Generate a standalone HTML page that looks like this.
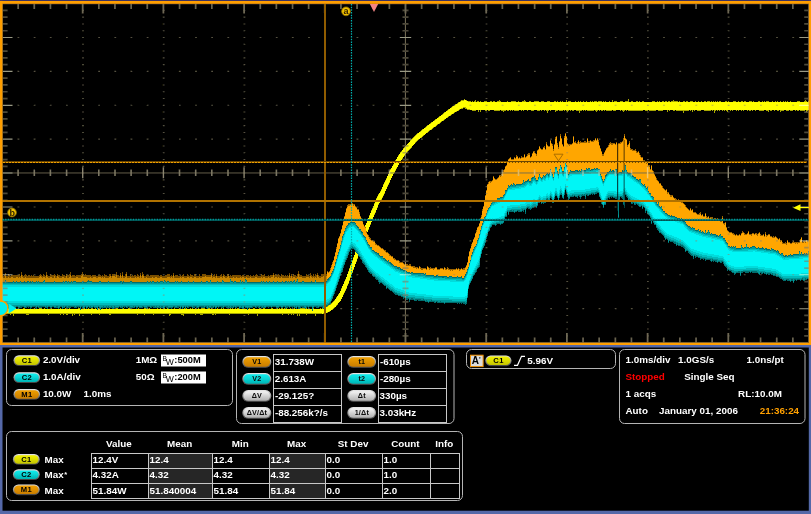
<!DOCTYPE html>
<html><head><meta charset="utf-8"><title>Oscilloscope</title>
<style>html,body{margin:0;padding:0;background:#5468a8;overflow:hidden}svg{display:block}text{font-family:"Liberation Sans",sans-serif;font-weight:bold;font-size:10px;fill:#fff}</style></head><body>
<svg width="811" height="514" viewBox="0 0 811 514">
<defs>
<linearGradient id="gy" x1="0" y1="0" x2="0" y2="1"><stop offset="0" stop-color="#f4f400"/><stop offset="1" stop-color="#c4c400"/></linearGradient>
<linearGradient id="gc" x1="0" y1="0" x2="0" y2="1"><stop offset="0" stop-color="#10f0f0"/><stop offset="1" stop-color="#00b4b4"/></linearGradient>
<linearGradient id="go" x1="0" y1="0" x2="0" y2="1"><stop offset="0" stop-color="#f0a000"/><stop offset="1" stop-color="#c87c00"/></linearGradient>
<linearGradient id="gg" x1="0" y1="0" x2="0" y2="1"><stop offset="0" stop-color="#f4f4f4"/><stop offset="1" stop-color="#b0b0b0"/></linearGradient>
<linearGradient id="gb" x1="0" y1="0" x2="0" y2="1"><stop offset="0" stop-color="#e8e8e8"/><stop offset="0.5" stop-color="#9a9a9a"/><stop offset="1" stop-color="#3c3c3c"/></linearGradient>
<filter id="soft" filterUnits="userSpaceOnUse" x="-10" y="-10" width="831" height="534"><feGaussianBlur stdDeviation="0.35"/></filter>
</defs>
<g filter="url(#soft)">
<rect x="-10" y="-10" width="831" height="534" fill="#5468a8"/>
<rect x="-10" y="-10" width="831" height="355" fill="#000"/>
<g shape-rendering="crispEdges">
<path d="M2,308.8H3V308.5H4V308.6H5V309.0H6V308.9H7V308.6H8V308.9H9V308.6H10V308.1H11V308.9H12V308.6H13V308.4H14V308.4H15V308.4H16V308.6H17V308.7H18V308.4H19V308.6H20V308.7H21V308.5H22V308.8H23V308.4H24V308.1H25V308.7H26V309.0H27V309.0H28V308.9H29V308.8H30V308.8H31V308.7H32V308.5H33V308.8H34V308.3H35V308.8H36V308.8H37V309.0H38V308.8H39V308.3H40V308.1H41V308.2H42V308.6H43V308.5H44V308.2H45V308.9H46V308.7H47V308.9H48V308.5H49V308.9H50V308.8H51V307.5H52V308.6H53V308.9H54V308.5H55V308.8H56V308.9H57V308.9H58V308.2H59V308.8H60V308.4H61V308.9H62V308.0H63V308.7H64V308.7H65V308.0H66V308.5H67V308.7H68V308.7H69V308.3H70V308.6H71V308.8H72V308.9H73V308.6H74V308.7H75V308.5H76V308.6H77V308.8H78V308.2H79V308.3H80V308.1H81V308.6H82V308.5H83V309.0H84V308.3H85V308.6H86V308.2H87V308.5H88V308.0H89V308.9H90V308.7H91V308.2H92V308.4H93V308.7H94V308.7H95V308.3H96V308.8H97V308.7H98V308.4H99V308.6H100V308.7H101V308.5H102V309.0H103V308.5H104V309.0H105V308.5H106V308.0H107V308.7H108V308.6H109V307.6H110V308.6H111V308.8H112V308.6H113V308.8H114V308.8H115V308.8H116V308.2H117V308.4H118V308.6H119V308.8H120V308.6H121V308.9H122V308.5H123V307.9H124V308.7H125V308.6H126V308.8H127V308.6H128V308.3H129V308.3H130V308.8H131V308.8H132V308.7H133V309.0H134V308.7H135V308.9H136V308.8H137V308.7H138V307.9H139V308.9H140V308.5H141V308.5H142V308.8H143V308.8H144V308.4H145V307.7H146V308.0H147V308.4H148V308.8H149V308.4H150V308.9H151V308.9H152V308.6H153V308.7H154V308.6H155V308.8H156V308.9H157V308.3H158V308.9H159V308.6H160V308.4H161V308.7H162V308.5H163V308.3H164V308.1H165V308.8H166V308.6H167V308.4H168V308.7H169V308.7H170V308.7H171V306.6H172V308.5H173V308.6H174V308.4H175V308.7H176V308.9H177V308.9H178V308.9H179V308.1H180V308.6H181V309.0H182V308.8H183V308.5H184V308.4H185V308.6H186V308.0H187V308.8H188V308.9H189V308.6H190V308.2H191V308.7H192V308.3H193V308.9H194V308.9H195V307.7H196V308.9H197V309.0H198V308.3H199V308.6H200V308.7H201V308.3H202V306.3H203V308.4H204V307.5H205V308.9H206V308.5H207V307.9H208V308.2H209V308.4H210V308.8H211V308.4H212V308.5H213V308.7H214V308.7H215V308.7H216V308.9H217V308.3H218V309.0H219V308.8H220V308.8H221V308.3H222V308.5H223V308.0H224V309.0H225V308.6H226V308.8H227V308.6H228V309.0H229V308.9H230V306.9H231V308.6H232V308.3H233V308.6H234V308.9H235V308.2H236V308.9H237V307.9H238V308.2H239V308.6H240V308.6H241V308.7H242V308.2H243V308.6H244V309.0H245V308.8H246V308.9H247V309.0H248V308.5H249V307.7H250V308.7H251V308.5H252V308.7H253V308.3H254V308.2H255V308.6H256V308.9H257V308.7H258V308.9H259V307.9H260V308.4H261V308.9H262V308.5H263V308.3H264V308.4H265V308.8H266V308.8H267V308.8H268V308.9H269V308.6H270V308.9H271V308.4H272V308.3H273V308.6H274V308.7H275V308.7H276V308.8H277V307.2H278V308.8H279V308.1H280V308.7H281V308.3H282V308.0H283V308.7H284V307.9H285V308.7H286V307.8H287V308.6H288V308.7H289V308.6H290V308.3H291V308.6H292V308.8H293V308.6H294V307.6H295V308.6H296V308.7H297V308.7H298V308.8H299V308.8H300V308.4H301V308.4H302V307.8H303V308.4H304V308.4H305V308.6H306V308.3H307V308.5H308V308.1H309V308.9H310V308.9H311V308.8H312V308.2H313V308.3H314V308.9H315V308.9H316V308.7H317V308.8H318V309.0H319V308.8H320V308.4H321V309.0H322V308.3H323V307.9H324V307.6H325V307.2H326V306.8H327V306.1H328V305.3H329V304.6H330V303.9H331V302.9H332V301.9H333V301.0H334V299.9H335V298.8H336V297.2H337V295.6H338V294.2H339V292.5H340V290.8H341V288.3H342V285.8H343V283.6H344V281.3H345V278.9H346V276.6H347V273.7H348V270.9H349V268.1H350V265.4H351V262.7H352V260.0H353V257.3H354V254.6H355V251.8H356V249.1H357V246.4H358V243.7H359V241.0H360V238.3H361V235.6H362V232.9H363V230.1H364V227.5H365V224.8H366V222.5H367V220.1H368V217.6H369V215.1H370V212.7H371V210.3H372V207.9H373V205.5H374V203.1H375V200.7H376V198.3H377V196.2H378V194.0H379V192.5H380V190.9H381V189.1H382V186.7H383V184.4H384V182.2H385V180.1H386V177.9H387V175.7H388V173.5H389V171.4H390V169.4H391V167.5H392V165.8H393V164.0H394V162.2H395V160.4H396V158.6H397V156.8H398V155.1H399V153.6H400V152.4H401V151.1H402V149.7H403V148.3H404V147.0H405V145.7H406V144.6H407V143.6H408V142.6H409V141.5H410V140.4H411V139.3H412V138.2H413V137.1H414V136.0H415V135.0H416V134.0H417V133.2H418V132.5H419V131.7H420V130.9H421V130.1H422V129.3H423V128.5H424V127.7H425V126.9H426V126.1H427V125.3H428V124.6H429V123.8H430V123.1H431V122.3H432V121.5H433V120.8H434V120.0H435V119.3H436V118.5H437V117.8H438V117.0H439V116.3H440V115.5H441V114.7H442V114.0H443V113.2H444V112.4H445V111.6H446V110.8H447V110.1H448V109.3H449V108.5H450V107.8H451V107.1H452V106.4H453V105.7H454V105.0H455V104.3H456V103.6H457V102.9H458V102.3H459V101.6H460V101.0H461V100.4H462V100.1H463V100.0H464V99.2H465V99.5H466V99.7H467V100.9H468V101.0H469V101.3H470V101.3H471V101.5H472V101.4H473V101.5H474V101.1H475V99.7H476V101.7H477V101.3H478V101.4H479V101.8H480V101.4H481V101.8H482V101.8H483V101.7H484V101.3H485V101.3H486V101.4H487V101.5H488V101.6H489V101.6H490V100.5H491V101.1H492V101.7H493V101.4H494V101.1H495V101.7H496V101.5H497V101.3H498V101.1H499V100.1H500V100.8H501V101.6H502V101.7H503V101.7H504V101.6H505V101.5H506V101.6H507V101.3H508V101.8H509V101.6H510V101.6H511V101.3H512V101.4H513V101.4H514V101.4H515V101.4H516V101.6H517V101.7H518V100.6H519V101.7H520V101.7H521V101.7H522V101.3H523V101.2H524V100.0H525V101.2H526V101.8H527V101.5H528V101.8H529V101.4H530V101.4H531V101.6H532V101.6H533V101.5H534V101.3H535V101.4H536V101.2H537V101.2H538V101.3H539V101.5H540V101.6H541V101.3H542V101.4H543V101.3H544V101.6H545V101.6H546V101.7H547V100.5H548V101.3H549V101.1H550V101.6H551V101.8H552V101.8H553V101.8H554V101.0H555V101.2H556V101.7H557V101.3H558V101.6H559V101.7H560V101.0H561V101.6H562V100.5H563V101.8H564V101.8H565V101.6H566V99.5H567V101.5H568V100.7H569V100.9H570V101.2H571V101.5H572V101.6H573V101.6H574V101.8H575V101.0H576V101.7H577V101.5H578V101.1H579V101.8H580V101.4H581V101.7H582V101.7H583V101.0H584V101.8H585V101.5H586V100.9H587V101.5H588V101.5H589V101.8H590V101.3H591V101.6H592V101.3H593V101.7H594V101.3H595V101.4H596V101.2H597V101.7H598V101.4H599V101.4H600V100.9H601V101.1H602V101.5H603V101.3H604V101.5H605V101.3H606V101.6H607V101.8H608V101.6H609V101.4H610V101.7H611V101.6H612V100.4H613V101.8H614V101.4H615V101.3H616V101.0H617V101.5H618V101.7H619V101.7H620V101.2H621V101.4H622V101.1H623V101.5H624V101.7H625V101.2H626V101.4H627V101.3H628V98.7H629V101.6H630V101.7H631V101.2H632V101.4H633V101.6H634V101.8H635V101.7H636V100.8H637V101.3H638V101.7H639V100.6H640V101.7H641V101.7H642V101.0H643V100.8H644V101.6H645V101.8H646V101.5H647V101.5H648V101.7H649V101.6H650V101.8H651V101.6H652V101.2H653V101.3H654V101.3H655V101.7H656V101.8H657V101.0H658V101.7H659V101.2H660V101.7H661V101.6H662V100.9H663V101.4H664V101.5H665V101.3H666V101.4H667V101.6H668V101.3H669V100.9H670V101.6H671V101.1H672V101.4H673V100.4H674V101.3H675V101.1H676V101.2H677V101.0H678V101.5H679V101.3H680V101.5H681V101.6H682V101.5H683V101.2H684V101.3H685V101.7H686V101.4H687V101.4H688V101.5H689V101.5H690V101.1H691V101.4H692V101.2H693V101.6H694V101.6H695V100.6H696V101.7H697V101.7H698V100.8H699V101.8H700V101.8H701V100.9H702V101.8H703V101.7H704V101.3H705V101.2H706V101.7H707V101.4H708V101.0H709V101.2H710V101.6H711V101.2H712V101.5H713V101.4H714V101.5H715V101.1H716V101.7H717V100.7H718V101.7H719V101.0H720V101.1H721V101.5H722V101.6H723V101.5H724V101.7H725V101.4H726V101.3H727V101.8H728V100.8H729V101.6H730V101.7H731V101.5H732V101.6H733V101.1H734V101.4H735V101.0H736V101.7H737V101.7H738V100.6H739V101.6H740V101.5H741V101.1H742V100.9H743V101.7H744V101.3H745V101.2H746V101.5H747V101.7H748V101.7H749V101.4H750V100.8H751V101.2H752V101.7H753V101.2H754V101.5H755V101.6H756V101.7H757V101.7H758V101.1H759V101.3H760V101.6H761V101.7H762V101.4H763V101.6H764V101.4H765V101.7H766V101.3H767V101.1H768V101.4H769V101.6H770V101.5H771V101.8H772V101.1H773V101.6H774V101.6H775V100.5H776V101.6H777V101.3H778V101.6H779V101.7H780V101.3H781V101.6H782V101.5H783V101.3H784V101.7H785V101.4H786V101.7H787V101.4H788V101.6H789V101.8H790V101.2H791V101.5H792V101.7H793V101.8H794V101.5H795V101.5H796V101.7H797V101.2H798V101.3H799V101.2H800V101.6H801V101.5H802V101.5H803V101.8H804V101.1H805V100.1H806V101.0H807V101.8H808V101.4H809V101.8H810V110.4V110.4H809V110.3H808V110.5H807V112.4H806V110.3H805V110.7H804V111.2H803V110.7H802V110.8H801V110.5H800V110.2H799V111.0H798V110.9H797V110.3H796V110.8H795V110.2H794V110.3H793V111.3H792V110.8H791V110.6H790V110.2H789V110.8H788V110.9H787V110.8H786V110.4H785V110.4H784V111.4H783V110.6H782V110.5H781V111.9H780V110.4H779V110.5H778V110.5H777V110.4H776V110.2H775V110.7H774V110.3H773V110.4H772V110.8H771V110.9H770V110.3H769V112.4H768V111.2H767V110.6H766V110.3H765V110.3H764V110.6H763V111.1H762V110.8H761V110.5H760V110.8H759V110.3H758V110.3H757V110.2H756V110.8H755V110.3H754V110.3H753V110.7H752V110.3H751V110.5H750V111.0H749V110.4H748V110.7H747V110.4H746V110.4H745V110.3H744V111.0H743V110.3H742V110.6H741V110.3H740V110.3H739V110.8H738V110.3H737V110.5H736V110.2H735V110.4H734V110.4H733V110.6H732V110.3H731V110.8H730V110.4H729V110.2H728V111.6H727V110.6H726V110.2H725V111.0H724V110.4H723V110.6H722V110.4H721V110.3H720V110.5H719V110.4H718V110.7H717V110.4H716V110.7H715V112.6H714V110.2H713V110.7H712V110.4H711V110.8H710V110.8H709V110.5H708V111.2H707V110.8H706V111.4H705V110.6H704V110.4H703V110.4H702V110.4H701V110.7H700V110.9H699V111.4H698V111.0H697V110.2H696V110.2H695V110.6H694V110.3H693V112.2H692V110.4H691V110.9H690V110.4H689V110.9H688V110.5H687V110.8H686V110.8H685V110.7H684V113.2H683V111.0H682V110.6H681V110.5H680V110.5H679V110.6H678V110.8H677V111.0H676V110.3H675V110.6H674V110.8H673V110.3H672V110.4H671V110.4H670V110.6H669V110.4H668V111.5H667V110.2H666V110.4H665V110.4H664V110.4H663V110.9H662V111.0H661V110.6H660V110.9H659V110.7H658V110.4H657V110.3H656V110.8H655V110.9H654V110.7H653V111.0H652V110.6H651V110.5H650V110.8H649V110.3H648V110.7H647V110.8H646V110.6H645V110.4H644V110.4H643V110.8H642V110.5H641V111.4H640V110.6H639V110.7H638V110.6H637V110.5H636V110.5H635V111.4H634V110.8H633V110.9H632V110.7H631V110.9H630V110.9H629V111.1H628V110.4H627V110.7H626V110.3H625V110.7H624V111.8H623V110.6H622V110.2H621V110.6H620V110.4H619V110.2H618V110.4H617V110.4H616V111.1H615V110.6H614V110.6H613V110.3H612V110.9H611V110.6H610V110.6H609V111.1H608V111.0H607V110.7H606V110.2H605V111.0H604V110.4H603V111.2H602V110.6H601V110.2H600V110.6H599V110.2H598V110.5H597V111.5H596V110.6H595V110.4H594V110.7H593V110.9H592V110.5H591V111.4H590V110.7H589V110.7H588V110.8H587V110.4H586V110.5H585V110.2H584V110.9H583V110.4H582V110.6H581V110.6H580V113.3H579V110.5H578V110.8H577V110.9H576V110.2H575V110.3H574V110.5H573V110.7H572V110.3H571V111.2H570V110.3H569V110.6H568V112.3H567V110.9H566V110.4H565V111.0H564V110.3H563V110.9H562V110.7H561V111.1H560V110.5H559V110.4H558V110.6H557V110.8H556V111.5H555V110.4H554V110.4H553V110.2H552V110.4H551V111.1H550V110.3H549V110.8H548V112.8H547V110.8H546V110.2H545V110.6H544V110.4H543V110.2H542V110.5H541V110.2H540V110.5H539V110.6H538V110.6H537V110.3H536V110.3H535V110.4H534V111.3H533V110.5H532V110.9H531V110.4H530V110.3H529V110.4H528V110.7H527V110.3H526V110.4H525V110.4H524V110.5H523V110.4H522V110.6H521V110.3H520V110.3H519V110.5H518V110.8H517V110.8H516V110.7H515V111.4H514V110.4H513V110.6H512V110.4H511V110.7H510V110.3H509V110.5H508V110.5H507V110.2H506V110.6H505V111.4H504V112.0H503V111.0H502V110.7H501V110.3H500V110.6H499V110.5H498V110.8H497V110.5H496V110.9H495V110.5H494V110.3H493V110.4H492V110.2H491V110.3H490V110.6H489V110.7H488V110.3H487V111.4H486V110.5H485V110.4H484V110.4H483V110.4H482V110.4H481V111.9H480V110.2H479V112.1H478V110.4H477V110.4H476V110.6H475V110.6H474V110.9H473V110.6H472V110.3H471V110.0H470V110.1H469V109.7H468V109.7H467V108.7H466V108.6H465V108.0H464V107.9H463V108.5H462V108.8H461V109.4H460V110.0H459V110.5H458V111.1H457V111.7H456V112.4H455V113.0H454V113.7H453V114.3H452V115.0H451V115.6H450V116.3H449V117.0H448V117.7H447V118.4H446V119.1H445V119.9H444V120.6H443V121.3H442V122.0H441V122.7H440V123.5H439V124.2H438V125.0H437V125.7H436V126.5H435V127.2H434V128.0H433V128.8H432V129.5H431V130.3H430V131.0H429V131.8H428V132.6H427V133.4H426V134.3H425V135.1H424V135.9H423V136.7H422V137.5H421V138.3H420V139.1H419V139.9H418V140.8H417V141.8H416V143.0H415V144.2H414V145.3H413V146.4H412V147.5H411V148.6H410V149.7H409V150.7H408V151.9H407V153.1H406V154.4H405V155.9H404V157.4H403V158.8H402V160.2H401V161.7H400V163.3H399V165.1H398V167.1H397V169.0H396V170.8H395V172.6H394V174.4H393V176.3H392V178.3H391V180.3H390V182.6H389V184.9H388V187.0H387V189.2H386V191.4H385V193.5H384V195.7H383V197.7H382V199.7H381V201.3H380V203.1H379V205.0H378V207.6H377V210.2H376V212.6H375V215.0H374V217.4H373V219.8H372V222.2H371V224.7H370V227.2H369V229.6H368V232.1H367V234.6H366V237.2H365V239.9H364V242.7H363V245.4H362V248.1H361V250.8H360V253.6H359V256.3H358V259.0H357V261.7H356V264.4H355V267.1H354V269.9H353V272.6H352V275.3H351V278.0H350V280.7H349V283.5H348V286.0H347V288.6H346V290.7H345V292.8H344V295.0H343V297.3H342V299.2H341V301.2H340V302.3H339V303.4H338V304.8H337V306.0H336V307.2H335V307.9H334V308.6H333V309.5H332V310.3H331V311.1H330V311.7H329V312.2H328V312.7H327V313.2H326V313.4H325V313.6H324V313.9H323V314.1H322V313.7H321V314.0H320V314.1H319V313.8H318V314.1H317V313.7H316V315.9H315V314.2H314V313.7H313V313.6H312V314.0H311V314.2H310V313.8H309V314.3H308V314.3H307V314.6H306V313.7H305V313.8H304V313.7H303V314.0H302V314.0H301V313.8H300V315.6H299V314.1H298V315.6H297V313.7H296V313.6H295V314.0H294V314.5H293V313.8H292V315.4H291V314.3H290V313.7H289V314.5H288V313.7H287V314.2H286V314.1H285V314.1H284V314.0H283V315.3H282V313.7H281V314.2H280V314.2H279V313.6H278V313.6H277V313.8H276V314.0H275V314.4H274V314.3H273V314.2H272V313.6H271V314.1H270V313.7H269V313.9H268V314.1H267V314.2H266V313.7H265V314.1H264V314.1H263V313.6H262V314.2H261V314.1H260V313.8H259V314.3H258V316.4H257V313.8H256V314.0H255V314.3H254V313.9H253V313.8H252V314.2H251V314.3H250V313.7H249V315.0H248V314.0H247V314.3H246V314.3H245V313.8H244V313.9H243V313.7H242V314.0H241V314.1H240V313.8H239V313.8H238V313.9H237V313.9H236V314.2H235V314.1H234V313.8H233V314.1H232V314.1H231V313.7H230V314.6H229V313.8H228V314.2H227V313.7H226V313.9H225V314.2H224V313.8H223V314.0H222V314.1H221V313.9H220V313.8H219V313.8H218V313.6H217V314.3H216V315.4H215V313.8H214V314.9H213V314.6H212V313.8H211V314.0H210V314.1H209V313.9H208V314.2H207V313.7H206V313.7H205V313.7H204V313.8H203V315.3H202V314.6H201V315.2H200V313.9H199V313.7H198V314.1H197V313.9H196V314.5H195V314.4H194V313.6H193V313.9H192V313.7H191V313.7H190V313.7H189V313.6H188V314.2H187V313.7H186V314.2H185V313.9H184V315.7H183V314.8H182V314.6H181V314.0H180V313.7H179V313.8H178V313.7H177V314.0H176V313.8H175V314.4H174V313.6H173V313.7H172V313.8H171V314.6H170V316.3H169V314.4H168V314.1H167V314.1H166V313.8H165V313.8H164V313.7H163V314.1H162V314.0H161V313.9H160V313.7H159V314.3H158V313.8H157V313.7H156V314.0H155V313.7H154V315.2H153V313.9H152V313.6H151V313.8H150V313.9H149V314.0H148V313.7H147V313.9H146V313.8H145V314.6H144V313.8H143V313.9H142V314.1H141V314.1H140V313.7H139V314.2H138V315.2H137V313.7H136V314.4H135V313.7H134V314.3H133V313.9H132V313.7H131V313.8H130V313.6H129V313.7H128V313.7H127V314.4H126V314.0H125V313.6H124V314.0H123V313.9H122V313.7H121V313.7H120V313.7H119V313.8H118V313.8H117V313.6H116V313.9H115V313.8H114V314.3H113V313.7H112V313.7H111V314.8H110V314.5H109V313.9H108V313.8H107V313.7H106V314.1H105V314.1H104V314.1H103V313.9H102V314.1H101V313.6H100V314.5H99V314.0H98V313.8H97V313.7H96V314.3H95V313.9H94V314.1H93V313.8H92V314.5H91V313.9H90V314.1H89V314.0H88V313.6H87V314.2H86V313.9H85V313.8H84V314.0H83V314.1H82V313.9H81V313.7H80V315.7H79V314.0H78V313.7H77V314.2H76V314.1H75V314.8H74V313.7H73V316.1H72V314.2H71V314.0H70V313.8H69V313.7H68V314.5H67V314.5H66V313.8H65V313.8H64V314.6H63V313.8H62V313.7H61V314.9H60V314.0H59V313.7H58V314.0H57V313.7H56V313.9H55V314.2H54V314.3H53V314.0H52V313.6H51V313.9H50V314.3H49V315.1H48V314.1H47V313.9H46V314.1H45V314.3H44V313.9H43V313.9H42V314.1H41V313.7H40V314.0H39V314.1H38V313.7H37V314.0H36V314.2H35V314.0H34V313.7H33V314.1H32V313.8H31V314.4H30V313.6H29V314.5H28V314.6H27V314.7H26V313.8H25V313.8H24V313.7H23V314.3H22V313.8H21V313.7H20V313.6H19V314.0H18V313.7H17V314.4H16V313.8H15V314.0H14V315.6H13V313.7H12V313.9H11V314.5H10V314.3H9V313.6H8V314.1H7V314.1H6V313.9H5V313.8H4V313.8H3V313.8H2Z" fill="#a8a800"/>
<path d="M2,309.2H3V309.2H4V309.2H5V309.2H6V309.2H7V309.2H8V309.2H9V309.2H10V309.2H11V309.2H12V309.2H13V309.2H14V309.2H15V309.2H16V309.2H17V309.2H18V309.2H19V309.2H20V309.2H21V309.2H22V309.2H23V309.2H24V309.2H25V309.2H26V309.2H27V309.2H28V309.2H29V309.2H30V309.2H31V309.2H32V309.2H33V309.2H34V309.2H35V309.2H36V309.2H37V309.2H38V309.2H39V309.2H40V309.2H41V309.2H42V309.2H43V309.2H44V309.2H45V309.2H46V309.2H47V309.2H48V309.2H49V309.2H50V309.2H51V309.2H52V309.2H53V309.2H54V309.2H55V309.2H56V309.2H57V309.2H58V309.2H59V309.2H60V309.2H61V309.2H62V309.2H63V309.2H64V309.2H65V309.2H66V309.2H67V309.2H68V309.2H69V309.2H70V309.2H71V309.2H72V309.2H73V309.2H74V309.2H75V309.2H76V309.2H77V309.2H78V309.2H79V309.2H80V309.2H81V309.2H82V309.2H83V309.2H84V309.2H85V309.2H86V309.2H87V309.2H88V309.2H89V309.2H90V309.2H91V309.2H92V309.2H93V309.2H94V309.2H95V309.2H96V309.2H97V309.2H98V309.2H99V309.2H100V309.2H101V309.2H102V309.2H103V309.2H104V309.2H105V309.2H106V309.2H107V309.2H108V309.2H109V309.2H110V309.2H111V309.2H112V309.2H113V309.2H114V309.2H115V309.2H116V309.2H117V309.2H118V309.2H119V309.2H120V309.2H121V309.2H122V309.2H123V309.2H124V309.2H125V309.2H126V309.2H127V309.2H128V309.2H129V309.2H130V309.2H131V309.2H132V309.2H133V309.2H134V309.2H135V309.2H136V309.2H137V309.2H138V309.2H139V309.2H140V309.2H141V309.2H142V309.2H143V309.2H144V309.2H145V309.2H146V309.2H147V309.2H148V309.2H149V309.2H150V309.2H151V309.2H152V309.2H153V309.2H154V309.2H155V309.2H156V309.2H157V309.2H158V309.2H159V309.2H160V309.2H161V309.2H162V309.2H163V309.2H164V309.2H165V309.2H166V309.2H167V309.2H168V309.2H169V309.2H170V309.2H171V309.2H172V309.2H173V309.2H174V309.2H175V309.2H176V309.2H177V309.2H178V309.2H179V309.2H180V309.2H181V309.2H182V309.2H183V309.2H184V309.2H185V309.2H186V309.2H187V309.2H188V309.2H189V309.2H190V309.2H191V309.2H192V309.2H193V309.2H194V309.2H195V309.2H196V309.2H197V309.2H198V309.2H199V309.2H200V309.2H201V309.2H202V309.2H203V309.2H204V309.2H205V309.2H206V309.2H207V309.2H208V309.2H209V309.2H210V309.2H211V309.2H212V309.2H213V309.2H214V309.2H215V309.2H216V309.2H217V309.2H218V309.2H219V309.2H220V309.2H221V309.2H222V309.2H223V309.2H224V309.2H225V309.2H226V309.2H227V309.2H228V309.2H229V309.2H230V309.2H231V309.2H232V309.2H233V309.2H234V309.2H235V309.2H236V309.2H237V309.2H238V309.2H239V309.2H240V309.2H241V309.2H242V309.2H243V309.2H244V309.2H245V309.2H246V309.2H247V309.2H248V309.2H249V309.2H250V309.2H251V309.2H252V309.2H253V309.2H254V309.2H255V309.2H256V309.2H257V309.2H258V309.2H259V309.2H260V309.2H261V309.2H262V309.2H263V309.2H264V309.2H265V309.2H266V309.2H267V309.2H268V309.2H269V309.2H270V309.2H271V309.2H272V309.2H273V309.2H274V309.2H275V309.2H276V309.2H277V309.2H278V309.2H279V309.2H280V309.2H281V309.2H282V309.2H283V309.2H284V309.2H285V309.2H286V309.2H287V309.2H288V309.2H289V309.2H290V309.2H291V309.2H292V309.2H293V309.2H294V309.2H295V309.2H296V309.2H297V309.2H298V309.2H299V309.2H300V309.2H301V309.2H302V309.2H303V309.2H304V309.2H305V309.2H306V309.2H307V309.2H308V309.2H309V309.2H310V309.2H311V309.2H312V309.2H313V309.2H314V309.2H315V309.2H316V309.2H317V309.2H318V309.2H319V309.2H320V309.2H321V309.2H322V308.9H323V308.5H324V308.2H325V307.8H326V307.4H327V306.7H328V305.9H329V305.2H330V304.5H331V303.5H332V302.5H333V301.6H334V300.5H335V299.4H336V297.8H337V296.2H338V294.8H339V293.1H340V291.4H341V288.9H342V286.4H343V284.2H344V281.9H345V279.5H346V277.2H347V274.3H348V271.5H349V268.7H350V266.0H351V263.3H352V260.6H353V257.9H354V255.2H355V252.4H356V249.7H357V247.0H358V244.3H359V241.6H360V238.9H361V236.2H362V233.5H363V230.7H364V228.1H365V225.4H366V223.1H367V220.7H368V218.2H369V215.7H370V213.3H371V210.9H372V208.5H373V206.1H374V203.7H375V201.3H376V198.9H377V196.8H378V194.6H379V193.1H380V191.5H381V189.7H382V187.3H383V185.0H384V182.8H385V180.7H386V178.5H387V176.3H388V174.1H389V172.0H390V170.0H391V168.1H392V166.4H393V164.6H394V162.8H395V161.0H396V159.2H397V157.4H398V155.7H399V154.2H400V153.0H401V151.7H402V150.3H403V148.9H404V147.6H405V146.3H406V145.2H407V144.2H408V143.2H409V142.1H410V141.0H411V139.9H412V138.8H413V137.7H414V136.6H415V135.6H416V134.6H417V133.8H418V133.1H419V132.3H420V131.5H421V130.7H422V129.9H423V129.1H424V128.3H425V127.5H426V126.7H427V125.9H428V125.2H429V124.4H430V123.7H431V122.9H432V122.1H433V121.4H434V120.6H435V119.9H436V119.1H437V118.4H438V117.6H439V116.9H440V116.1H441V115.3H442V114.6H443V113.8H444V113.0H445V112.2H446V111.4H447V110.7H448V109.9H449V109.1H450V108.4H451V107.7H452V107.0H453V106.3H454V105.6H455V104.9H456V104.2H457V103.5H458V102.9H459V102.2H460V101.6H461V101.0H462V100.7H463V100.5H464V100.2H465V100.3H466V100.7H467V101.3H468V101.8H469V101.8H470V101.9H471V101.9H472V102.0H473V102.1H474V102.1H475V102.1H476V102.1H477V102.1H478V102.1H479V102.1H480V102.1H481V102.1H482V102.1H483V102.1H484V102.1H485V102.1H486V102.1H487V102.1H488V102.1H489V102.1H490V102.1H491V102.1H492V102.1H493V102.1H494V102.1H495V102.1H496V102.1H497V102.1H498V102.1H499V102.1H500V102.1H501V102.1H502V102.1H503V102.1H504V102.1H505V102.1H506V102.1H507V102.1H508V102.1H509V102.1H510V102.1H511V102.1H512V102.1H513V102.1H514V102.1H515V102.1H516V102.1H517V102.1H518V102.1H519V102.1H520V102.1H521V102.1H522V102.1H523V102.1H524V102.1H525V102.1H526V102.1H527V102.1H528V102.1H529V102.1H530V102.1H531V102.1H532V102.1H533V102.1H534V102.1H535V102.1H536V102.1H537V102.1H538V102.1H539V102.1H540V102.1H541V102.1H542V102.1H543V102.1H544V102.1H545V102.1H546V102.1H547V102.1H548V102.1H549V102.1H550V102.1H551V102.1H552V102.1H553V102.1H554V102.1H555V102.1H556V102.1H557V102.1H558V102.1H559V102.1H560V102.1H561V102.1H562V102.1H563V102.1H564V102.1H565V102.1H566V102.1H567V102.1H568V102.1H569V102.1H570V102.1H571V102.1H572V102.1H573V102.1H574V102.1H575V102.1H576V102.1H577V102.1H578V102.1H579V102.1H580V102.1H581V102.1H582V102.1H583V102.1H584V102.1H585V102.1H586V102.1H587V102.1H588V102.1H589V102.1H590V102.1H591V102.1H592V102.1H593V102.1H594V102.1H595V102.1H596V102.1H597V102.1H598V102.1H599V102.1H600V102.1H601V102.1H602V102.1H603V102.1H604V102.1H605V102.1H606V102.1H607V102.1H608V102.1H609V102.1H610V102.1H611V102.1H612V102.1H613V102.1H614V102.1H615V102.1H616V102.1H617V102.1H618V102.1H619V102.1H620V102.1H621V102.1H622V102.1H623V102.1H624V102.1H625V102.1H626V102.1H627V102.1H628V102.1H629V102.1H630V102.1H631V102.1H632V102.1H633V102.1H634V102.1H635V102.1H636V102.1H637V102.1H638V102.1H639V102.1H640V102.1H641V102.1H642V102.1H643V102.1H644V102.1H645V102.1H646V102.1H647V102.1H648V102.1H649V102.1H650V102.1H651V102.1H652V102.1H653V102.1H654V102.1H655V102.1H656V102.1H657V102.1H658V102.1H659V102.1H660V102.1H661V102.1H662V102.1H663V102.1H664V102.1H665V102.1H666V102.1H667V102.1H668V102.1H669V102.1H670V102.1H671V102.1H672V102.1H673V102.1H674V102.1H675V102.1H676V102.1H677V102.1H678V102.1H679V102.1H680V102.1H681V102.1H682V102.1H683V102.1H684V102.1H685V102.1H686V102.1H687V102.1H688V102.1H689V102.1H690V102.1H691V102.1H692V102.1H693V102.1H694V102.1H695V102.1H696V102.1H697V102.1H698V102.1H699V102.1H700V102.1H701V102.1H702V102.1H703V102.1H704V102.1H705V102.1H706V102.1H707V102.1H708V102.1H709V102.1H710V102.1H711V102.1H712V102.1H713V102.1H714V102.1H715V102.1H716V102.1H717V102.1H718V102.1H719V102.1H720V102.1H721V102.1H722V102.1H723V102.1H724V102.1H725V102.1H726V102.1H727V102.1H728V102.1H729V102.1H730V102.1H731V102.1H732V102.1H733V102.1H734V102.1H735V102.1H736V102.1H737V102.1H738V102.1H739V102.1H740V102.1H741V102.1H742V102.1H743V102.1H744V102.1H745V102.1H746V102.1H747V102.1H748V102.1H749V102.1H750V102.1H751V102.1H752V102.1H753V102.1H754V102.1H755V102.1H756V102.1H757V102.1H758V102.1H759V102.1H760V102.1H761V102.1H762V102.1H763V102.1H764V102.1H765V102.1H766V102.1H767V102.1H768V102.1H769V102.1H770V102.1H771V102.1H772V102.1H773V102.1H774V102.1H775V102.1H776V102.1H777V102.1H778V102.1H779V102.1H780V102.1H781V102.1H782V102.1H783V102.1H784V102.1H785V102.1H786V102.1H787V102.1H788V102.1H789V102.1H790V102.1H791V102.1H792V102.1H793V102.1H794V102.1H795V102.1H796V102.1H797V102.1H798V102.1H799V102.1H800V102.1H801V102.1H802V102.1H803V102.1H804V102.1H805V102.1H806V102.1H807V102.1H808V102.1H809V102.1H810V109.7V109.7H809V109.7H808V109.7H807V109.7H806V109.7H805V109.7H804V109.7H803V109.7H802V109.7H801V109.7H800V109.7H799V109.7H798V109.7H797V109.7H796V109.7H795V109.7H794V109.7H793V109.7H792V109.7H791V109.7H790V109.7H789V109.7H788V109.7H787V109.7H786V109.7H785V109.7H784V109.7H783V109.7H782V109.7H781V109.7H780V109.7H779V109.7H778V109.7H777V109.7H776V109.7H775V109.7H774V109.7H773V109.7H772V109.7H771V109.7H770V109.7H769V109.7H768V109.7H767V109.7H766V109.7H765V109.7H764V109.7H763V109.7H762V109.7H761V109.7H760V109.7H759V109.7H758V109.7H757V109.7H756V109.7H755V109.7H754V109.7H753V109.7H752V109.7H751V109.7H750V109.7H749V109.7H748V109.7H747V109.7H746V109.7H745V109.7H744V109.7H743V109.7H742V109.7H741V109.7H740V109.7H739V109.7H738V109.7H737V109.7H736V109.7H735V109.7H734V109.7H733V109.7H732V109.7H731V109.7H730V109.7H729V109.7H728V109.7H727V109.7H726V109.7H725V109.7H724V109.7H723V109.7H722V109.7H721V109.7H720V109.7H719V109.7H718V109.7H717V109.7H716V109.7H715V109.7H714V109.7H713V109.7H712V109.7H711V109.7H710V109.7H709V109.7H708V109.7H707V109.7H706V109.7H705V109.7H704V109.7H703V109.7H702V109.7H701V109.7H700V109.7H699V109.7H698V109.7H697V109.7H696V109.7H695V109.7H694V109.7H693V109.7H692V109.7H691V109.7H690V109.7H689V109.7H688V109.7H687V109.7H686V109.7H685V109.7H684V109.7H683V109.7H682V109.7H681V109.7H680V109.7H679V109.7H678V109.7H677V109.7H676V109.7H675V109.7H674V109.7H673V109.7H672V109.7H671V109.7H670V109.7H669V109.7H668V109.7H667V109.7H666V109.7H665V109.7H664V109.7H663V109.7H662V109.7H661V109.7H660V109.7H659V109.7H658V109.7H657V109.7H656V109.7H655V109.7H654V109.7H653V109.7H652V109.7H651V109.7H650V109.7H649V109.7H648V109.7H647V109.7H646V109.7H645V109.7H644V109.7H643V109.7H642V109.7H641V109.7H640V109.7H639V109.7H638V109.7H637V109.7H636V109.7H635V109.7H634V109.7H633V109.7H632V109.7H631V109.7H630V109.7H629V109.7H628V109.7H627V109.7H626V109.7H625V109.7H624V109.7H623V109.7H622V109.7H621V109.7H620V109.7H619V109.7H618V109.7H617V109.7H616V109.7H615V109.7H614V109.7H613V109.7H612V109.7H611V109.7H610V109.7H609V109.7H608V109.7H607V109.7H606V109.7H605V109.7H604V109.7H603V109.7H602V109.7H601V109.7H600V109.7H599V109.7H598V109.7H597V109.7H596V109.7H595V109.7H594V109.7H593V109.7H592V109.7H591V109.7H590V109.7H589V109.7H588V109.7H587V109.7H586V109.7H585V109.7H584V109.7H583V109.7H582V109.7H581V109.7H580V109.7H579V109.7H578V109.7H577V109.7H576V109.7H575V109.7H574V109.7H573V109.7H572V109.7H571V109.7H570V109.7H569V109.7H568V109.7H567V109.7H566V109.7H565V109.7H564V109.7H563V109.7H562V109.7H561V109.7H560V109.7H559V109.7H558V109.7H557V109.7H556V109.7H555V109.7H554V109.7H553V109.7H552V109.7H551V109.7H550V109.7H549V109.7H548V109.7H547V109.7H546V109.7H545V109.7H544V109.7H543V109.7H542V109.7H541V109.7H540V109.7H539V109.7H538V109.7H537V109.7H536V109.7H535V109.7H534V109.7H533V109.7H532V109.7H531V109.7H530V109.7H529V109.7H528V109.7H527V109.7H526V109.7H525V109.7H524V109.7H523V109.7H522V109.7H521V109.7H520V109.7H519V109.7H518V109.7H517V109.7H516V109.7H515V109.7H514V109.7H513V109.7H512V109.7H511V109.7H510V109.7H509V109.7H508V109.7H507V109.7H506V109.7H505V109.7H504V109.7H503V109.7H502V109.7H501V109.7H500V109.7H499V109.7H498V109.7H497V109.7H496V109.7H495V109.7H494V109.7H493V109.7H492V109.7H491V109.7H490V109.7H489V109.7H488V109.7H487V109.7H486V109.7H485V109.7H484V109.7H483V109.7H482V109.7H481V109.7H480V109.7H479V109.7H478V109.7H477V109.7H476V109.7H475V109.7H474V109.7H473V109.6H472V109.5H471V109.5H470V109.3H469V109.2H468V108.6H467V108.0H466V107.3H465V107.1H464V107.3H463V107.9H462V108.2H461V108.8H460V109.4H459V109.9H458V110.5H457V111.1H456V111.8H455V112.4H454V113.1H453V113.7H452V114.4H451V115.0H450V115.7H449V116.4H448V117.1H447V117.8H446V118.5H445V119.3H444V120.0H443V120.7H442V121.4H441V122.1H440V122.9H439V123.6H438V124.4H437V125.1H436V125.9H435V126.6H434V127.4H433V128.2H432V128.9H431V129.7H430V130.4H429V131.2H428V132.0H427V132.8H426V133.7H425V134.5H424V135.3H423V136.1H422V136.9H421V137.7H420V138.5H419V139.3H418V140.2H417V141.2H416V142.4H415V143.6H414V144.7H413V145.8H412V146.9H411V148.0H410V149.1H409V150.1H408V151.3H407V152.5H406V153.8H405V155.3H404V156.8H403V158.2H402V159.6H401V161.1H400V162.7H399V164.5H398V166.5H397V168.4H396V170.2H395V172.0H394V173.8H393V175.7H392V177.7H391V179.7H390V182.0H389V184.3H388V186.4H387V188.6H386V190.8H385V192.9H384V195.1H383V197.1H382V199.1H381V200.7H380V202.5H379V204.4H378V207.0H377V209.6H376V212.0H375V214.4H374V216.8H373V219.2H372V221.6H371V224.1H370V226.6H369V229.0H368V231.5H367V234.0H366V236.6H365V239.3H364V242.1H363V244.8H362V247.5H361V250.2H360V253.0H359V255.7H358V258.4H357V261.1H356V263.8H355V266.5H354V269.3H353V272.0H352V274.7H351V277.4H350V280.1H349V282.9H348V285.4H347V288.0H346V290.1H345V292.2H344V294.4H343V296.7H342V298.6H341V300.6H340V301.7H339V302.8H338V304.2H337V305.4H336V306.6H335V307.3H334V308.0H333V308.9H332V309.7H331V310.5H330V311.1H329V311.6H328V312.1H327V312.6H326V312.8H325V313.0H324V313.3H323V313.5H322V313.4H321V313.4H320V313.4H319V313.4H318V313.4H317V313.4H316V313.4H315V313.4H314V313.4H313V313.4H312V313.4H311V313.4H310V313.4H309V313.4H308V313.4H307V313.4H306V313.4H305V313.4H304V313.4H303V313.4H302V313.4H301V313.4H300V313.4H299V313.4H298V313.4H297V313.4H296V313.4H295V313.4H294V313.4H293V313.4H292V313.4H291V313.4H290V313.4H289V313.4H288V313.4H287V313.4H286V313.4H285V313.4H284V313.4H283V313.4H282V313.4H281V313.4H280V313.4H279V313.4H278V313.4H277V313.4H276V313.4H275V313.4H274V313.4H273V313.4H272V313.4H271V313.4H270V313.4H269V313.4H268V313.4H267V313.4H266V313.4H265V313.4H264V313.4H263V313.4H262V313.4H261V313.4H260V313.4H259V313.4H258V313.4H257V313.4H256V313.4H255V313.4H254V313.4H253V313.4H252V313.4H251V313.4H250V313.4H249V313.4H248V313.4H247V313.4H246V313.4H245V313.4H244V313.4H243V313.4H242V313.4H241V313.4H240V313.4H239V313.4H238V313.4H237V313.4H236V313.4H235V313.4H234V313.4H233V313.4H232V313.4H231V313.4H230V313.4H229V313.4H228V313.4H227V313.4H226V313.4H225V313.4H224V313.4H223V313.4H222V313.4H221V313.4H220V313.4H219V313.4H218V313.4H217V313.4H216V313.4H215V313.4H214V313.4H213V313.4H212V313.4H211V313.4H210V313.4H209V313.4H208V313.4H207V313.4H206V313.4H205V313.4H204V313.4H203V313.4H202V313.4H201V313.4H200V313.4H199V313.4H198V313.4H197V313.4H196V313.4H195V313.4H194V313.4H193V313.4H192V313.4H191V313.4H190V313.4H189V313.4H188V313.4H187V313.4H186V313.4H185V313.4H184V313.4H183V313.4H182V313.4H181V313.4H180V313.4H179V313.4H178V313.4H177V313.4H176V313.4H175V313.4H174V313.4H173V313.4H172V313.4H171V313.4H170V313.4H169V313.4H168V313.4H167V313.4H166V313.4H165V313.4H164V313.4H163V313.4H162V313.4H161V313.4H160V313.4H159V313.4H158V313.4H157V313.4H156V313.4H155V313.4H154V313.4H153V313.4H152V313.4H151V313.4H150V313.4H149V313.4H148V313.4H147V313.4H146V313.4H145V313.4H144V313.4H143V313.4H142V313.4H141V313.4H140V313.4H139V313.4H138V313.4H137V313.4H136V313.4H135V313.4H134V313.4H133V313.4H132V313.4H131V313.4H130V313.4H129V313.4H128V313.4H127V313.4H126V313.4H125V313.4H124V313.4H123V313.4H122V313.4H121V313.4H120V313.4H119V313.4H118V313.4H117V313.4H116V313.4H115V313.4H114V313.4H113V313.4H112V313.4H111V313.4H110V313.4H109V313.4H108V313.4H107V313.4H106V313.4H105V313.4H104V313.4H103V313.4H102V313.4H101V313.4H100V313.4H99V313.4H98V313.4H97V313.4H96V313.4H95V313.4H94V313.4H93V313.4H92V313.4H91V313.4H90V313.4H89V313.4H88V313.4H87V313.4H86V313.4H85V313.4H84V313.4H83V313.4H82V313.4H81V313.4H80V313.4H79V313.4H78V313.4H77V313.4H76V313.4H75V313.4H74V313.4H73V313.4H72V313.4H71V313.4H70V313.4H69V313.4H68V313.4H67V313.4H66V313.4H65V313.4H64V313.4H63V313.4H62V313.4H61V313.4H60V313.4H59V313.4H58V313.4H57V313.4H56V313.4H55V313.4H54V313.4H53V313.4H52V313.4H51V313.4H50V313.4H49V313.4H48V313.4H47V313.4H46V313.4H45V313.4H44V313.4H43V313.4H42V313.4H41V313.4H40V313.4H39V313.4H38V313.4H37V313.4H36V313.4H35V313.4H34V313.4H33V313.4H32V313.4H31V313.4H30V313.4H29V313.4H28V313.4H27V313.4H26V313.4H25V313.4H24V313.4H23V313.4H22V313.4H21V313.4H20V313.4H19V313.4H18V313.4H17V313.4H16V313.4H15V313.4H14V313.4H13V313.4H12V313.4H11V313.4H10V313.4H9V313.4H8V313.4H7V313.4H6V313.4H5V313.4H4V313.4H3V313.4H2Z" fill="#ffff00"/>
</g>
<g shape-rendering="crispEdges">
<path d="M2,274.2H3V275.6H4V275.4H5V273.2H6V275.9H7V275.6H8V274.1H9V275.2H10V275.5H11V274.8H12V275.0H13V275.4H14V275.2H15V275.3H16V274.6H17V274.8H18V275.2H19V274.3H20V275.9H21V272.1H22V274.8H23V275.6H24V275.2H25V274.4H26V275.3H27V275.5H28V275.2H29V275.3H30V275.7H31V275.3H32V275.7H33V275.4H34V275.7H35V275.5H36V275.8H37V275.8H38V275.6H39V274.5H40V273.5H41V274.6H42V275.7H43V274.4H44V274.5H45V275.8H46V272.2H47V274.8H48V275.7H49V275.7H50V274.2H51V274.7H52V275.3H53V275.2H54V273.7H55V275.4H56V275.5H57V273.9H58V274.7H59V275.1H60V275.8H61V275.5H62V274.3H63V274.6H64V275.1H65V275.8H66V273.7H67V275.1H68V275.4H69V274.3H70V272.1H71V275.5H72V275.4H73V275.4H74V275.3H75V275.5H76V274.6H77V274.9H78V275.3H79V275.2H80V275.2H81V274.0H82V272.4H83V274.1H84V275.0H85V274.1H86V274.8H87V275.2H88V275.4H89V275.1H90V275.0H91V275.8H92V275.4H93V274.7H94V274.6H95V274.9H96V275.8H97V275.6H98V274.7H99V274.6H100V274.8H101V275.5H102V275.0H103V275.8H104V274.3H105V275.3H106V275.1H107V275.9H108V275.9H109V274.1H110V273.7H111V275.9H112V274.0H113V273.9H114V273.9H115V275.0H116V272.2H117V275.3H118V275.4H119V275.8H120V272.5H121V275.7H122V272.3H123V275.7H124V275.7H125V274.1H126V271.9H127V275.9H128V275.5H129V275.8H130V274.2H131V275.5H132V275.4H133V275.7H134V275.1H135V274.9H136V275.6H137V274.4H138V275.0H139V275.9H140V272.5H141V275.7H142V272.1H143V273.5H144V275.6H145V275.8H146V274.6H147V275.2H148V275.4H149V275.6H150V275.4H151V275.4H152V275.0H153V275.2H154V275.4H155V275.0H156V274.7H157V275.1H158V275.4H159V275.6H160V274.7H161V274.9H162V275.8H163V275.5H164V275.8H165V275.2H166V275.2H167V274.1H168V274.4H169V274.3H170V275.8H171V275.0H172V275.5H173V272.7H174V275.5H175V275.4H176V275.3H177V275.2H178V275.6H179V275.7H180V274.8H181V275.8H182V274.5H183V274.4H184V275.8H185V275.7H186V275.8H187V274.3H188V274.5H189V275.9H190V274.4H191V274.8H192V275.2H193V275.9H194V274.2H195V274.2H196V275.5H197V275.9H198V275.5H199V274.4H200V275.7H201V275.5H202V274.3H203V274.2H204V274.3H205V273.5H206V274.7H207V274.5H208V275.0H209V274.6H210V274.5H211V272.5H212V275.7H213V274.6H214V274.4H215V275.9H216V273.9H217V275.8H218V275.6H219V275.5H220V274.9H221V274.1H222V275.5H223V273.8H224V274.9H225V275.6H226V275.5H227V274.3H228V273.5H229V275.6H230V275.2H231V275.6H232V275.3H233V274.8H234V275.2H235V275.4H236V274.9H237V275.2H238V275.1H239V275.2H240V274.9H241V275.7H242V274.6H243V274.7H244V275.8H245V275.7H246V275.0H247V275.1H248V275.1H249V275.6H250V275.0H251V275.8H252V275.7H253V275.4H254V275.7H255V274.5H256V274.3H257V275.1H258V275.7H259V275.5H260V275.6H261V274.4H262V275.2H263V274.6H264V274.1H265V275.5H266V275.7H267V275.9H268V274.9H269V275.8H270V275.3H271V274.7H272V274.7H273V273.0H274V275.1H275V274.3H276V274.8H277V275.4H278V274.3H279V275.4H280V275.5H281V274.2H282V275.2H283V275.1H284V275.6H285V275.2H286V275.8H287V275.4H288V275.5H289V272.8H290V275.9H291V274.0H292V275.7H293V274.3H294V275.0H295V275.2H296V275.7H297V274.3H298V271.1H299V274.1H300V274.7H301V274.9H302V275.8H303V275.8H304V275.6H305V275.6H306V274.4H307V275.0H308V275.0H309V275.7H310V273.3H311V274.7H312V275.7H313V274.1H314V275.7H315V274.1H316V275.1H317V273.0H318V274.8H319V275.7H320V275.6H321V274.3H322V274.4H323V274.0H324V275.8H325V274.9H326V274.0H327V283.6V283.6H326V284.9H325V285.2H324V285.3H323V285.0H322V285.3H321V284.6H320V285.1H319V284.7H318V285.1H317V284.9H316V283.4H315V285.3H314V285.2H313V284.8H312V284.4H311V284.8H310V285.4H309V285.1H308V285.1H307V285.2H306V284.9H305V284.6H304V284.0H303V283.9H302V284.6H301V284.9H300V285.1H299V284.9H298V282.2H297V284.2H296V285.3H295V283.3H294V283.9H293V285.0H292V284.3H291V284.2H290V285.2H289V284.0H288V285.2H287V284.2H286V284.4H285V284.6H284V285.2H283V283.9H282V285.3H281V284.6H280V285.3H279V284.9H278V284.3H277V284.6H276V284.5H275V284.5H274V284.3H273V285.1H272V285.1H271V284.6H270V284.3H269V285.1H268V285.2H267V284.3H266V285.0H265V284.8H264V284.0H263V285.3H262V284.1H261V284.8H260V285.1H259V285.2H258V284.5H257V285.3H256V285.1H255V285.2H254V284.8H253V285.3H252V284.7H251V284.9H250V284.5H249V284.5H248V284.7H247V283.1H246V281.8H245V285.2H244V284.9H243V284.3H242V284.8H241V283.0H240V285.2H239V285.4H238V284.6H237V285.1H236V283.5H235V283.9H234V285.3H233V283.5H232V283.6H231V282.0H230V284.8H229V284.6H228V285.0H227V285.0H226V284.9H225V285.2H224V283.9H223V283.4H222V285.2H221V285.2H220V285.0H219V284.7H218V283.8H217V285.2H216V285.3H215V284.6H214V284.5H213V284.5H212V285.1H211V282.6H210V284.9H209V285.4H208V284.0H207V283.7H206V284.6H205V285.1H204V284.9H203V284.9H202V284.2H201V285.0H200V284.9H199V285.1H198V285.3H197V284.9H196V285.3H195V284.8H194V283.9H193V285.4H192V285.2H191V284.8H190V285.1H189V284.4H188V285.0H187V284.8H186V285.1H185V284.5H184V285.0H183V285.3H182V284.4H181V284.9H180V284.8H179V285.0H178V284.3H177V285.1H176V284.2H175V285.1H174V284.6H173V284.7H172V285.1H171V284.5H170V284.6H169V283.5H168V284.2H167V285.2H166V283.8H165V283.1H164V284.8H163V284.3H162V284.3H161V283.5H160V285.4H159V284.8H158V283.5H157V285.0H156V284.5H155V285.2H154V284.0H153V284.0H152V285.4H151V284.0H150V285.2H149V284.7H148V284.2H147V284.7H146V284.7H145V284.5H144V284.7H143V285.1H142V285.0H141V284.8H140V284.9H139V285.3H138V284.7H137V284.8H136V285.2H135V285.0H134V285.2H133V285.4H132V283.9H131V283.6H130V285.3H129V285.0H128V285.0H127V285.3H126V285.2H125V285.3H124V284.4H123V285.4H122V284.4H121V284.4H120V284.8H119V285.3H118V285.2H117V285.0H116V285.0H115V285.4H114V285.2H113V285.2H112V285.1H111V285.0H110V285.0H109V284.2H108V284.8H107V285.1H106V284.9H105V285.0H104V285.2H103V284.6H102V284.7H101V284.1H100V284.3H99V284.5H98V284.6H97V285.4H96V285.0H95V284.7H94V284.7H93V285.0H92V284.1H91V284.0H90V284.4H89V283.4H88V284.4H87V285.2H86V284.8H85V284.5H84V284.4H83V283.6H82V284.5H81V284.7H80V285.2H79V285.1H78V285.0H77V284.5H76V284.1H75V284.2H74V283.8H73V285.3H72V283.8H71V284.7H70V284.8H69V284.1H68V284.5H67V283.6H66V284.4H65V284.9H64V284.2H63V284.7H62V285.3H61V285.2H60V285.2H59V285.0H58V284.7H57V284.6H56V285.3H55V283.6H54V285.1H53V284.9H52V285.1H51V284.9H50V284.8H49V284.7H48V285.1H47V284.6H46V285.3H45V282.9H44V284.1H43V284.6H42V285.1H41V284.6H40V285.1H39V283.8H38V284.5H37V283.5H36V284.9H35V285.4H34V285.0H33V284.2H32V284.6H31V284.4H30V284.7H29V283.9H28V284.4H27V284.8H26V284.6H25V284.4H24V285.4H23V285.1H22V284.5H21V284.2H20V285.1H19V284.9H18V285.4H17V284.3H16V285.0H15V285.2H14V284.2H13V284.9H12V285.1H11V284.7H10V284.9H9V285.2H8V285.2H7V284.7H6V283.0H5V285.0H4V284.9H3V285.1H2Z" fill="#7a5000"/>
<path d="M2,276.6H3V278.0H4V277.8H5V275.6H6V278.3H7V278.0H8V276.5H9V277.6H10V277.9H11V277.2H12V277.4H13V277.8H14V277.6H15V277.7H16V277.0H17V277.2H18V277.6H19V276.7H20V278.3H21V274.5H22V277.2H23V278.0H24V277.6H25V276.8H26V277.7H27V277.9H28V277.6H29V277.7H30V278.1H31V277.7H32V278.1H33V277.8H34V278.1H35V277.9H36V278.2H37V278.2H38V278.0H39V276.9H40V275.9H41V277.0H42V278.1H43V276.8H44V276.9H45V278.2H46V274.6H47V277.2H48V278.1H49V278.1H50V276.6H51V277.1H52V277.7H53V277.6H54V276.1H55V277.8H56V277.9H57V276.3H58V277.1H59V277.5H60V278.2H61V277.9H62V276.7H63V277.0H64V277.5H65V278.2H66V276.1H67V277.5H68V277.8H69V276.7H70V274.5H71V277.9H72V277.8H73V277.8H74V277.7H75V277.9H76V277.0H77V277.3H78V277.7H79V277.6H80V277.6H81V276.4H82V274.8H83V276.5H84V277.4H85V276.5H86V277.2H87V277.6H88V277.8H89V277.5H90V277.4H91V278.2H92V277.8H93V277.1H94V277.0H95V277.3H96V278.2H97V278.0H98V277.1H99V277.0H100V277.2H101V277.9H102V277.4H103V278.2H104V276.7H105V277.7H106V277.5H107V278.3H108V278.3H109V276.5H110V276.1H111V278.3H112V276.4H113V276.3H114V276.3H115V277.4H116V274.6H117V277.7H118V277.8H119V278.2H120V274.9H121V278.1H122V274.7H123V278.1H124V278.1H125V276.5H126V274.3H127V278.3H128V277.9H129V278.2H130V276.6H131V277.9H132V277.8H133V278.1H134V277.5H135V277.3H136V278.0H137V276.8H138V277.4H139V278.3H140V274.9H141V278.1H142V274.5H143V275.9H144V278.0H145V278.2H146V277.0H147V277.6H148V277.8H149V278.0H150V277.8H151V277.8H152V277.4H153V277.6H154V277.8H155V277.4H156V277.1H157V277.5H158V277.8H159V278.0H160V277.1H161V277.3H162V278.2H163V277.9H164V278.2H165V277.6H166V277.6H167V276.5H168V276.8H169V276.7H170V278.2H171V277.4H172V277.9H173V275.1H174V277.9H175V277.8H176V277.7H177V277.6H178V278.0H179V278.1H180V277.2H181V278.2H182V276.9H183V276.8H184V278.2H185V278.1H186V278.2H187V276.7H188V276.9H189V278.3H190V276.8H191V277.2H192V277.6H193V278.3H194V276.6H195V276.6H196V277.9H197V278.3H198V277.9H199V276.8H200V278.1H201V277.9H202V276.7H203V276.6H204V276.7H205V275.9H206V277.1H207V276.9H208V277.4H209V277.0H210V276.9H211V274.9H212V278.1H213V277.0H214V276.8H215V278.3H216V276.3H217V278.2H218V278.0H219V277.9H220V277.3H221V276.5H222V277.9H223V276.2H224V277.3H225V278.0H226V277.9H227V276.7H228V275.9H229V278.0H230V277.6H231V278.0H232V277.7H233V277.2H234V277.6H235V277.8H236V277.3H237V277.6H238V277.5H239V277.6H240V277.3H241V278.1H242V277.0H243V277.1H244V278.2H245V278.1H246V277.4H247V277.5H248V277.5H249V278.0H250V277.4H251V278.2H252V278.1H253V277.8H254V278.1H255V276.9H256V276.7H257V277.5H258V278.1H259V277.9H260V278.0H261V276.8H262V277.6H263V277.0H264V276.5H265V277.9H266V278.1H267V278.3H268V277.3H269V278.2H270V277.7H271V277.1H272V277.1H273V275.4H274V277.5H275V276.7H276V277.2H277V277.8H278V276.7H279V277.8H280V277.9H281V276.6H282V277.6H283V277.5H284V278.0H285V277.6H286V278.2H287V277.8H288V277.9H289V275.2H290V278.3H291V276.4H292V278.1H293V276.7H294V277.4H295V277.6H296V278.1H297V276.7H298V273.5H299V276.5H300V277.1H301V277.3H302V278.2H303V278.2H304V278.0H305V278.0H306V276.8H307V277.4H308V277.4H309V278.1H310V275.7H311V277.1H312V278.1H313V276.5H314V278.1H315V276.5H316V277.5H317V275.4H318V277.2H319V278.1H320V278.0H321V276.7H322V276.8H323V276.4H324V278.2H325V277.3H326V276.4H327V283.6V283.6H326V284.9H325V285.2H324V285.3H323V285.0H322V285.3H321V284.6H320V285.1H319V284.7H318V285.1H317V284.9H316V283.4H315V285.3H314V285.2H313V284.8H312V284.4H311V284.8H310V285.4H309V285.1H308V285.1H307V285.2H306V284.9H305V284.6H304V284.0H303V283.9H302V284.6H301V284.9H300V285.1H299V284.9H298V282.2H297V284.2H296V285.3H295V283.3H294V283.9H293V285.0H292V284.3H291V284.2H290V285.2H289V284.0H288V285.2H287V284.2H286V284.4H285V284.6H284V285.2H283V283.9H282V285.3H281V284.6H280V285.3H279V284.9H278V284.3H277V284.6H276V284.5H275V284.5H274V284.3H273V285.1H272V285.1H271V284.6H270V284.3H269V285.1H268V285.2H267V284.3H266V285.0H265V284.8H264V284.0H263V285.3H262V284.1H261V284.8H260V285.1H259V285.2H258V284.5H257V285.3H256V285.1H255V285.2H254V284.8H253V285.3H252V284.7H251V284.9H250V284.5H249V284.5H248V284.7H247V283.1H246V281.8H245V285.2H244V284.9H243V284.3H242V284.8H241V283.0H240V285.2H239V285.4H238V284.6H237V285.1H236V283.5H235V283.9H234V285.3H233V283.5H232V283.6H231V282.0H230V284.8H229V284.6H228V285.0H227V285.0H226V284.9H225V285.2H224V283.9H223V283.4H222V285.2H221V285.2H220V285.0H219V284.7H218V283.8H217V285.2H216V285.3H215V284.6H214V284.5H213V284.5H212V285.1H211V282.6H210V284.9H209V285.4H208V284.0H207V283.7H206V284.6H205V285.1H204V284.9H203V284.9H202V284.2H201V285.0H200V284.9H199V285.1H198V285.3H197V284.9H196V285.3H195V284.8H194V283.9H193V285.4H192V285.2H191V284.8H190V285.1H189V284.4H188V285.0H187V284.8H186V285.1H185V284.5H184V285.0H183V285.3H182V284.4H181V284.9H180V284.8H179V285.0H178V284.3H177V285.1H176V284.2H175V285.1H174V284.6H173V284.7H172V285.1H171V284.5H170V284.6H169V283.5H168V284.2H167V285.2H166V283.8H165V283.1H164V284.8H163V284.3H162V284.3H161V283.5H160V285.4H159V284.8H158V283.5H157V285.0H156V284.5H155V285.2H154V284.0H153V284.0H152V285.4H151V284.0H150V285.2H149V284.7H148V284.2H147V284.7H146V284.7H145V284.5H144V284.7H143V285.1H142V285.0H141V284.8H140V284.9H139V285.3H138V284.7H137V284.8H136V285.2H135V285.0H134V285.2H133V285.4H132V283.9H131V283.6H130V285.3H129V285.0H128V285.0H127V285.3H126V285.2H125V285.3H124V284.4H123V285.4H122V284.4H121V284.4H120V284.8H119V285.3H118V285.2H117V285.0H116V285.0H115V285.4H114V285.2H113V285.2H112V285.1H111V285.0H110V285.0H109V284.2H108V284.8H107V285.1H106V284.9H105V285.0H104V285.2H103V284.6H102V284.7H101V284.1H100V284.3H99V284.5H98V284.6H97V285.4H96V285.0H95V284.7H94V284.7H93V285.0H92V284.1H91V284.0H90V284.4H89V283.4H88V284.4H87V285.2H86V284.8H85V284.5H84V284.4H83V283.6H82V284.5H81V284.7H80V285.2H79V285.1H78V285.0H77V284.5H76V284.1H75V284.2H74V283.8H73V285.3H72V283.8H71V284.7H70V284.8H69V284.1H68V284.5H67V283.6H66V284.4H65V284.9H64V284.2H63V284.7H62V285.3H61V285.2H60V285.2H59V285.0H58V284.7H57V284.6H56V285.3H55V283.6H54V285.1H53V284.9H52V285.1H51V284.9H50V284.8H49V284.7H48V285.1H47V284.6H46V285.3H45V282.9H44V284.1H43V284.6H42V285.1H41V284.6H40V285.1H39V283.8H38V284.5H37V283.5H36V284.9H35V285.4H34V285.0H33V284.2H32V284.6H31V284.4H30V284.7H29V283.9H28V284.4H27V284.8H26V284.6H25V284.4H24V285.4H23V285.1H22V284.5H21V284.2H20V285.1H19V284.9H18V285.4H17V284.3H16V285.0H15V285.2H14V284.2H13V284.9H12V285.1H11V284.7H10V284.9H9V285.2H8V285.2H7V284.7H6V283.0H5V285.0H4V284.9H3V285.1H2Z" fill="#c88600"/>
<path d="M327,270.9H328V271.5H329V270.8H330V268.2H331V265.4H332V262.4H333V260.0H334V255.9H335V251.9H336V247.3H337V242.7H338V237.5H339V235.5H340V232.9H341V228.7H342V224.8H343V221.1H344V216.1H345V212.1H346V207.9H347V205.4H348V204.2H349V204.2H350V203.7H351V202.4H352V203.0H353V204.2H354V203.9H355V205.5H356V206.5H357V208.6H358V208.8H359V212.2H360V215.5H361V218.1H362V220.6H363V223.6H364V226.0H365V227.1H366V231.4H367V233.5H368V235.4H369V237.2H370V238.2H371V239.6H372V239.8H373V240.7H374V240.9H375V243.2H376V244.0H377V244.5H378V244.5H379V245.9H380V247.1H381V247.6H382V247.8H383V248.8H384V249.7H385V250.2H386V251.8H387V251.7H388V252.9H389V254.2H390V255.1H391V255.6H392V256.0H393V257.7H394V258.4H395V259.1H396V259.9H397V260.1H398V260.0H399V261.2H400V261.5H401V262.0H402V262.0H403V262.8H404V263.7H405V262.3H406V264.4H407V264.4H408V265.1H409V264.4H410V264.4H411V266.1H412V266.1H413V266.2H414V266.3H415V266.5H416V267.3H417V266.5H418V267.9H419V265.7H420V267.4H421V268.2H422V268.4H423V267.5H424V267.7H425V268.1H426V268.5H427V266.0H428V266.6H429V268.3H430V267.4H431V268.1H432V268.1H433V268.3H434V267.5H435V267.1H436V266.5H437V268.6H438V268.7H439V268.8H440V268.1H441V267.8H442V268.1H443V268.9H444V267.1H445V268.4H446V268.6H447V267.2H448V268.3H449V268.9H450V269.2H451V269.0H452V269.2H453V268.5H454V268.9H455V269.0H456V267.7H457V268.7H458V268.1H459V269.3H460V268.6H461V268.1H462V269.1H463V268.3H464V268.3H465V266.9H466V265.0H467V261.8H468V255.6H469V250.5H470V247.7H471V244.3H472V241.5H473V239.1H474V236.7H475V232.6H476V230.2H477V226.8H478V225.6H479V222.7H480V217.7H481V215.2H482V209.3H483V205.5H484V199.8H485V194.7H486V189.8H487V183.6H488V182.3H489V180.7H490V181.3H491V180.6H492V180.0H493V176.0H494V178.1H495V178.6H496V178.5H497V177.5H498V176.5H499V175.1H500V175.4H501V174.3H502V172.4H503V170.2H504V169.0H505V166.0H506V164.7H507V160.7H508V158.9H509V157.7H510V156.6H511V158.8H512V158.5H513V158.5H514V156.7H515V157.5H516V155.4H517V155.8H518V157.6H519V156.7H520V157.5H521V156.4H522V157.1H523V157.1H524V154.0H525V156.9H526V155.6H527V154.4H528V153.2H529V153.4H530V156.6H531V155.5H532V153.1H533V150.8H534V151.3H535V153.0H536V154.2H537V149.6H538V149.0H539V145.7H540V148.0H541V148.6H542V148.6H543V146.8H544V146.3H545V148.5H546V142.4H547V144.8H548V145.5H549V145.8H550V140.0H551V142.6H552V144.4H553V149.2H554V143.5H555V137.2H556V135.6H557V143.2H558V147.4H559V141.0H560V134.3H561V137.6H562V143.6H563V145.6H564V136.3H565V133.0H566V135.5H567V143.0H568V143.8H569V144.4H570V144.0H571V144.0H572V142.8H573V135.8H574V142.0H575V141.2H576V143.1H577V142.4H578V139.9H579V142.2H580V141.3H581V142.0H582V141.7H583V142.0H584V141.2H585V141.4H586V141.5H587V137.6H588V141.2H589V141.4H590V139.8H591V140.8H592V141.0H593V140.3H594V140.0H595V137.9H596V140.1H597V137.9H598V140.2H599V144.5H600V147.7H601V150.6H602V154.3H603V154.3H604V151.9H605V149.9H606V147.5H607V146.7H608V145.3H609V143.2H610V142.3H611V143.4H612V143.4H613V143.0H614V142.8H615V143.8H616V141.8H617V143.6H618V142.7H619V143.0H620V142.2H621V141.9H622V140.9H623V138.3H624V134.4H625V138.0H626V139.1H627V145.2H628V144.0H629V141.2H630V148.2H631V148.5H632V149.3H633V150.1H634V150.1H635V149.2H636V151.4H637V151.7H638V150.7H639V153.3H640V155.2H641V156.6H642V156.7H643V159.5H644V159.8H645V160.9H646V162.4H647V161.7H648V164.6H649V165.4H650V169.0H651V165.1H652V170.0H653V171.4H654V174.0H655V175.5H656V178.3H657V179.9H658V180.5H659V183.0H660V182.8H661V184.6H662V186.4H663V187.9H664V189.0H665V190.1H666V188.9H667V192.3H668V191.8H669V194.1H670V195.4H671V195.3H672V194.5H673V197.1H674V197.7H675V198.3H676V198.5H677V199.5H678V198.9H679V200.3H680V200.0H681V201.6H682V201.3H683V202.8H684V203.5H685V205.3H686V206.7H687V207.6H688V209.1H689V209.7H690V208.1H691V209.7H692V208.9H693V211.7H694V212.0H695V212.0H696V213.0H697V213.6H698V214.0H699V213.4H700V212.3H701V214.9H702V213.5H703V215.7H704V216.0H705V213.1H706V216.2H707V216.9H708V215.7H709V217.5H710V216.6H711V217.3H712V217.2H713V218.6H714V217.7H715V218.0H716V219.3H717V218.1H718V219.9H719V219.5H720V220.4H721V220.6H722V216.4H723V222.6H724V223.3H725V221.9H726V226.7H727V229.6H728V230.8H729V231.9H730V232.1H731V232.0H732V232.6H733V233.4H734V233.9H735V234.5H736V233.7H737V234.7H738V234.6H739V233.7H740V234.9H741V232.9H742V231.4H743V231.6H744V233.3H745V233.9H746V233.7H747V232.9H748V230.8H749V233.9H750V234.1H751V234.3H752V232.5H753V232.8H754V233.5H755V233.1H756V233.3H757V234.3H758V232.8H759V232.1H760V234.2H761V234.9H762V234.8H763V233.7H764V235.6H765V232.3H766V235.4H767V234.7H768V233.8H769V233.5H770V235.9H771V235.6H772V236.8H773V236.2H774V237.0H775V235.5H776V236.9H777V237.6H778V238.6H779V237.9H780V240.2H781V240.1H782V242.4H783V243.0H784V242.9H785V242.4H786V243.2H787V239.8H788V241.6H789V241.5H790V242.7H791V242.5H792V242.1H793V241.2H794V241.8H795V242.3H796V242.0H797V242.3H798V241.8H799V241.5H800V239.2H801V237.0H802V242.1H803V241.2H804V240.7H805V241.3H806V239.9H807V240.9H808V241.0H809V240.3H810V256.5V256.5H809V254.3H808V256.8H807V256.4H806V256.9H805V255.9H804V257.3H803V257.1H802V254.7H801V257.2H800V253.6H799V256.8H798V257.3H797V257.2H796V257.0H795V257.3H794V257.0H793V257.8H792V258.1H791V257.1H790V258.0H789V258.1H788V258.5H787V258.0H786V258.4H785V258.6H784V258.2H783V256.3H782V255.6H781V256.6H780V255.6H779V254.4H778V252.9H777V253.6H776V252.6H775V252.9H774V252.4H773V251.6H772V251.1H771V252.7H770V252.2H769V252.2H768V252.2H767V251.4H766V251.4H765V251.5H764V251.4H763V250.4H762V251.4H761V251.3H760V250.5H759V249.8H758V250.8H757V250.5H756V250.1H755V248.9H754V249.1H753V249.3H752V249.7H751V249.5H750V250.5H749V250.4H748V249.9H747V247.2H746V250.2H745V249.9H744V250.9H743V250.2H742V247.7H741V250.7H740V250.7H739V250.6H738V251.0H737V251.0H736V248.6H735V249.8H734V249.1H733V250.4H732V249.0H731V249.7H730V248.5H729V248.5H728V245.7H727V245.0H726V242.8H725V240.5H724V240.8H723V239.1H722V239.3H721V236.9H720V238.1H719V238.7H718V237.8H717V238.3H716V236.9H715V237.0H714V236.8H713V237.0H712V235.5H711V236.5H710V234.8H709V233.2H708V235.3H707V235.7H706V232.9H705V235.5H704V235.1H703V234.1H702V234.5H701V233.3H700V233.7H699V231.9H698V233.1H697V232.6H696V232.5H695V230.8H694V230.8H693V229.9H692V231.1H691V229.6H690V228.9H689V228.5H688V227.9H687V227.2H686V225.1H685V224.2H684V223.5H683V221.6H682V221.0H681V222.2H680V220.8H679V220.6H678V221.0H677V220.3H676V219.8H675V219.1H674V218.9H673V218.9H672V218.4H671V218.6H670V218.0H669V217.8H668V216.7H667V216.1H666V215.5H665V213.8H664V213.7H663V212.2H662V208.9H661V209.5H660V209.3H659V205.2H658V207.3H657V205.0H656V204.3H655V202.8H654V200.1H653V198.9H652V198.5H651V195.5H650V195.6H649V193.5H648V190.0H647V190.8H646V189.3H645V186.8H644V188.3H643V187.1H642V185.7H641V182.0H640V181.9H639V182.7H638V182.2H637V181.6H636V179.7H635V180.1H634V179.1H633V178.4H632V175.9H631V175.7H630V175.9H629V175.9H628V175.2H627V172.9H626V167.9H625V187.0H624V183.7H623V173.4H622V175.2H621V175.1H620V174.7H619V190.9H618V189.6H617V172.0H616V171.9H615V174.2H614V173.3H613V173.0H612V173.9H611V172.3H610V174.3H609V174.5H608V175.4H607V177.4H606V178.4H605V181.9H604V184.0H603V182.0H602V179.1H601V177.1H600V171.7H599V171.7H598V171.4H597V171.0H596V171.6H595V171.3H594V172.2H593V172.3H592V172.1H591V172.6H590V170.6H589V170.8H588V171.6H587V171.0H586V172.7H585V173.2H584V172.9H583V173.2H582V172.1H581V173.6H580V173.0H579V173.5H578V173.4H577V173.1H576V173.3H575V173.5H574V173.9H573V174.3H572V173.6H571V173.3H570V175.4H569V176.6H568V173.3H567V168.2H566V163.9H565V170.2H564V174.3H563V173.5H562V170.4H561V167.6H560V172.0H559V176.5H558V173.5H557V170.0H556V169.8H555V174.7H554V180.1H553V177.1H552V174.6H551V172.2H550V176.0H549V177.4H548V175.7H547V176.5H546V178.0H545V179.0H544V177.8H543V179.9H542V181.2H541V179.5H540V177.3H539V180.3H538V182.6H537V182.8H536V181.2H535V178.3H534V179.6H533V180.3H532V181.1H531V183.7H530V184.1H529V182.3H528V183.4H527V184.1H526V184.0H525V185.1H524V183.3H523V185.7H522V186.9H521V186.9H520V187.2H519V187.1H518V186.6H517V186.7H516V187.8H515V187.0H514V186.1H513V187.9H512V187.1H511V188.3H510V189.0H509V188.0H508V191.2H507V193.0H506V192.8H505V197.2H504V197.9H503V199.7H502V200.2H501V199.7H500V201.1H499V201.3H498V201.3H497V203.2H496V203.6H495V203.5H494V203.6H493V203.8H492V205.6H491V208.1H490V209.8H489V210.5H488V213.0H487V215.6H486V218.6H485V220.1H484V223.7H483V226.4H482V229.3H481V232.8H480V236.5H479V240.6H478V242.5H477V246.5H476V248.8H475V250.0H474V251.9H473V255.4H472V258.4H471V262.7H470V265.7H469V269.7H468V271.7H467V274.8H466V277.4H465V279.1H464V280.5H463V280.5H462V279.4H461V280.2H460V280.0H459V280.3H458V279.4H457V280.3H456V279.9H455V280.1H454V279.7H453V280.0H452V278.7H451V279.0H450V279.2H449V279.6H448V279.7H447V279.3H446V279.0H445V279.1H444V279.4H443V279.4H442V279.3H441V279.2H440V279.1H439V278.6H438V277.9H437V278.4H436V278.8H435V278.8H434V277.8H433V277.9H432V278.0H431V278.2H430V277.7H429V277.6H428V277.6H427V277.7H426V275.9H425V276.6H424V275.7H423V276.1H422V276.0H421V276.3H420V275.5H419V275.6H418V275.9H417V276.2H416V275.7H415V275.7H414V275.7H413V275.0H412V274.9H411V275.5H410V275.2H409V274.7H408V274.5H407V274.1H406V272.8H405V272.5H404V272.6H403V272.0H402V271.6H401V271.3H400V270.2H399V270.4H398V270.4H397V269.0H396V269.2H395V268.6H394V267.6H393V266.8H392V266.4H391V265.4H390V264.6H389V262.8H388V263.8H387V263.2H386V262.4H385V261.1H384V260.8H383V259.3H382V259.3H381V258.7H380V257.7H379V256.4H378V255.7H377V255.1H376V254.5H375V254.0H374V252.6H373V252.6H372V250.2H371V249.8H370V247.8H369V247.2H368V244.6H367V243.1H366V240.2H365V238.9H364V237.5H363V235.2H362V234.3H361V232.3H360V231.8H359V230.3H358V229.3H357V228.2H356V226.2H355V224.6H354V224.8H353V225.2H352V225.0H351V224.8H350V225.6H349V226.4H348V227.9H347V228.5H346V230.6H345V233.8H344V236.8H343V239.3H342V243.9H341V247.6H340V251.7H339V254.8H338V258.0H337V261.9H336V265.3H335V268.8H334V271.6H333V274.0H332V276.1H331V278.5H330V280.1H329V281.4H328V282.2H327Z" fill="#9a6400"/>
<path d="M327,272.2H328V272.8H329V272.1H330V269.5H331V266.7H332V263.7H333V261.3H334V257.2H335V253.2H336V248.6H337V244.0H338V238.8H339V236.8H340V234.2H341V230.0H342V226.1H343V222.4H344V217.4H345V213.4H346V209.2H347V206.7H348V205.5H349V205.5H350V205.0H351V203.7H352V204.3H353V205.5H354V205.2H355V206.8H356V207.8H357V209.9H358V210.1H359V213.5H360V216.8H361V219.4H362V221.9H363V224.9H364V227.3H365V228.4H366V232.7H367V234.8H368V236.7H369V238.5H370V239.5H371V240.9H372V241.1H373V242.0H374V242.2H375V244.5H376V245.3H377V245.8H378V245.8H379V247.2H380V248.4H381V248.9H382V249.1H383V250.1H384V251.0H385V251.5H386V253.1H387V253.0H388V254.2H389V255.5H390V256.4H391V256.9H392V257.3H393V259.0H394V259.7H395V260.4H396V261.2H397V261.4H398V261.3H399V262.5H400V262.8H401V263.3H402V263.3H403V264.1H404V265.0H405V263.6H406V265.7H407V265.7H408V266.4H409V265.7H410V265.7H411V267.4H412V267.4H413V267.5H414V267.6H415V267.8H416V268.6H417V267.8H418V269.2H419V267.0H420V268.7H421V269.5H422V269.7H423V268.8H424V269.0H425V269.4H426V269.8H427V267.3H428V267.9H429V269.6H430V268.7H431V269.4H432V269.4H433V269.6H434V268.8H435V268.4H436V267.8H437V269.9H438V270.0H439V270.1H440V269.4H441V269.1H442V269.4H443V270.2H444V268.4H445V269.7H446V269.9H447V268.5H448V269.6H449V270.2H450V270.5H451V270.3H452V270.5H453V269.8H454V270.2H455V270.3H456V269.0H457V270.0H458V269.4H459V270.6H460V269.9H461V269.4H462V270.4H463V269.6H464V269.6H465V268.2H466V266.3H467V263.1H468V256.9H469V251.8H470V249.0H471V245.6H472V242.8H473V240.4H474V238.0H475V233.9H476V231.5H477V228.1H478V226.9H479V224.0H480V219.0H481V216.5H482V210.6H483V206.8H484V201.1H485V196.0H486V191.1H487V184.9H488V183.6H489V182.0H490V182.6H491V181.9H492V181.3H493V177.3H494V179.4H495V179.9H496V179.8H497V178.8H498V177.8H499V176.4H500V176.7H501V175.6H502V173.7H503V171.5H504V170.3H505V167.3H506V166.0H507V162.0H508V160.2H509V159.0H510V157.9H511V160.1H512V159.8H513V159.8H514V158.0H515V158.8H516V156.7H517V157.1H518V158.9H519V158.0H520V158.8H521V157.7H522V158.4H523V158.4H524V155.3H525V158.2H526V156.9H527V155.7H528V154.5H529V154.7H530V157.9H531V156.8H532V154.4H533V152.1H534V152.6H535V154.3H536V155.5H537V150.9H538V150.3H539V147.0H540V149.3H541V149.9H542V149.9H543V148.1H544V147.6H545V149.8H546V143.7H547V146.1H548V146.8H549V147.1H550V141.3H551V143.9H552V145.7H553V150.5H554V144.8H555V138.5H556V136.9H557V144.5H558V148.7H559V142.3H560V135.6H561V138.9H562V144.9H563V146.9H564V137.6H565V134.3H566V136.8H567V144.3H568V145.1H569V145.7H570V145.3H571V145.3H572V144.1H573V137.1H574V143.3H575V142.5H576V144.4H577V143.7H578V141.2H579V143.5H580V142.6H581V143.3H582V143.0H583V143.3H584V142.5H585V142.7H586V142.8H587V138.9H588V142.5H589V142.7H590V141.1H591V142.1H592V142.3H593V141.6H594V141.3H595V139.2H596V141.4H597V139.2H598V141.5H599V145.8H600V149.0H601V151.9H602V155.6H603V155.6H604V153.2H605V151.2H606V148.8H607V148.0H608V146.6H609V144.5H610V143.6H611V144.7H612V144.7H613V144.3H614V144.1H615V145.1H616V143.1H617V144.9H618V144.0H619V144.3H620V143.5H621V143.2H622V142.2H623V139.6H624V135.7H625V139.3H626V140.4H627V146.5H628V145.3H629V142.5H630V149.5H631V149.8H632V150.6H633V151.4H634V151.4H635V150.5H636V152.7H637V153.0H638V152.0H639V154.6H640V156.5H641V157.9H642V158.0H643V160.8H644V161.1H645V162.2H646V163.7H647V163.0H648V165.9H649V166.7H650V170.3H651V166.4H652V171.3H653V172.7H654V175.3H655V176.8H656V179.6H657V181.2H658V181.8H659V184.3H660V184.1H661V185.9H662V187.7H663V189.2H664V190.3H665V191.4H666V190.2H667V193.6H668V193.1H669V195.4H670V196.7H671V196.6H672V195.8H673V198.4H674V199.0H675V199.6H676V199.8H677V200.8H678V200.2H679V201.6H680V201.3H681V202.9H682V202.6H683V204.1H684V204.8H685V206.6H686V208.0H687V208.9H688V210.4H689V211.0H690V209.4H691V211.0H692V210.2H693V213.0H694V213.3H695V213.3H696V214.3H697V214.9H698V215.3H699V214.7H700V213.6H701V216.2H702V214.8H703V217.0H704V217.3H705V214.4H706V217.5H707V218.2H708V217.0H709V218.8H710V217.9H711V218.6H712V218.5H713V219.9H714V219.0H715V219.3H716V220.6H717V219.4H718V221.2H719V220.8H720V221.7H721V221.9H722V217.7H723V223.9H724V224.6H725V223.2H726V228.0H727V230.9H728V232.1H729V233.2H730V233.4H731V233.3H732V233.9H733V234.7H734V235.2H735V235.8H736V235.0H737V236.0H738V235.9H739V235.0H740V236.2H741V234.2H742V232.7H743V232.9H744V234.6H745V235.2H746V235.0H747V234.2H748V232.1H749V235.2H750V235.4H751V235.6H752V233.8H753V234.1H754V234.8H755V234.4H756V234.6H757V235.6H758V234.1H759V233.4H760V235.5H761V236.2H762V236.1H763V235.0H764V236.9H765V233.6H766V236.7H767V236.0H768V235.1H769V234.8H770V237.2H771V236.9H772V238.1H773V237.5H774V238.3H775V236.8H776V238.2H777V238.9H778V239.9H779V239.2H780V241.5H781V241.4H782V243.7H783V244.3H784V244.2H785V243.7H786V244.5H787V241.1H788V242.9H789V242.8H790V244.0H791V243.8H792V243.4H793V242.5H794V243.1H795V243.6H796V243.3H797V243.6H798V243.1H799V242.8H800V240.5H801V238.3H802V243.4H803V242.5H804V242.0H805V242.6H806V241.2H807V242.2H808V242.3H809V241.6H810V256.5V256.5H809V254.3H808V256.8H807V256.4H806V256.9H805V255.9H804V257.3H803V257.1H802V254.7H801V257.2H800V253.6H799V256.8H798V257.3H797V257.2H796V257.0H795V257.3H794V257.0H793V257.8H792V258.1H791V257.1H790V258.0H789V258.1H788V258.5H787V258.0H786V258.4H785V258.6H784V258.2H783V256.3H782V255.6H781V256.6H780V255.6H779V254.4H778V252.9H777V253.6H776V252.6H775V252.9H774V252.4H773V251.6H772V251.1H771V252.7H770V252.2H769V252.2H768V252.2H767V251.4H766V251.4H765V251.5H764V251.4H763V250.4H762V251.4H761V251.3H760V250.5H759V249.8H758V250.8H757V250.5H756V250.1H755V248.9H754V249.1H753V249.3H752V249.7H751V249.5H750V250.5H749V250.4H748V249.9H747V247.2H746V250.2H745V249.9H744V250.9H743V250.2H742V247.7H741V250.7H740V250.7H739V250.6H738V251.0H737V251.0H736V248.6H735V249.8H734V249.1H733V250.4H732V249.0H731V249.7H730V248.5H729V248.5H728V245.7H727V245.0H726V242.8H725V240.5H724V240.8H723V239.1H722V239.3H721V236.9H720V238.1H719V238.7H718V237.8H717V238.3H716V236.9H715V237.0H714V236.8H713V237.0H712V235.5H711V236.5H710V234.8H709V233.2H708V235.3H707V235.7H706V232.9H705V235.5H704V235.1H703V234.1H702V234.5H701V233.3H700V233.7H699V231.9H698V233.1H697V232.6H696V232.5H695V230.8H694V230.8H693V229.9H692V231.1H691V229.6H690V228.9H689V228.5H688V227.9H687V227.2H686V225.1H685V224.2H684V223.5H683V221.6H682V221.0H681V222.2H680V220.8H679V220.6H678V221.0H677V220.3H676V219.8H675V219.1H674V218.9H673V218.9H672V218.4H671V218.6H670V218.0H669V217.8H668V216.7H667V216.1H666V215.5H665V213.8H664V213.7H663V212.2H662V208.9H661V209.5H660V209.3H659V205.2H658V207.3H657V205.0H656V204.3H655V202.8H654V200.1H653V198.9H652V198.5H651V195.5H650V195.6H649V193.5H648V190.0H647V190.8H646V189.3H645V186.8H644V188.3H643V187.1H642V185.7H641V182.0H640V181.9H639V182.7H638V182.2H637V181.6H636V179.7H635V180.1H634V179.1H633V178.4H632V175.9H631V175.7H630V175.9H629V175.9H628V175.2H627V172.9H626V167.9H625V187.0H624V183.7H623V173.4H622V175.2H621V175.1H620V174.7H619V190.9H618V189.6H617V172.0H616V171.9H615V174.2H614V173.3H613V173.0H612V173.9H611V172.3H610V174.3H609V174.5H608V175.4H607V177.4H606V178.4H605V181.9H604V184.0H603V182.0H602V179.1H601V177.1H600V171.7H599V171.7H598V171.4H597V171.0H596V171.6H595V171.3H594V172.2H593V172.3H592V172.1H591V172.6H590V170.6H589V170.8H588V171.6H587V171.0H586V172.7H585V173.2H584V172.9H583V173.2H582V172.1H581V173.6H580V173.0H579V173.5H578V173.4H577V173.1H576V173.3H575V173.5H574V173.9H573V174.3H572V173.6H571V173.3H570V175.4H569V176.6H568V173.3H567V168.2H566V163.9H565V170.2H564V174.3H563V173.5H562V170.4H561V167.6H560V172.0H559V176.5H558V173.5H557V170.0H556V169.8H555V174.7H554V180.1H553V177.1H552V174.6H551V172.2H550V176.0H549V177.4H548V175.7H547V176.5H546V178.0H545V179.0H544V177.8H543V179.9H542V181.2H541V179.5H540V177.3H539V180.3H538V182.6H537V182.8H536V181.2H535V178.3H534V179.6H533V180.3H532V181.1H531V183.7H530V184.1H529V182.3H528V183.4H527V184.1H526V184.0H525V185.1H524V183.3H523V185.7H522V186.9H521V186.9H520V187.2H519V187.1H518V186.6H517V186.7H516V187.8H515V187.0H514V186.1H513V187.9H512V187.1H511V188.3H510V189.0H509V188.0H508V191.2H507V193.0H506V192.8H505V197.2H504V197.9H503V199.7H502V200.2H501V199.7H500V201.1H499V201.3H498V201.3H497V203.2H496V203.6H495V203.5H494V203.6H493V203.8H492V205.6H491V208.1H490V209.8H489V210.5H488V213.0H487V215.6H486V218.6H485V220.1H484V223.7H483V226.4H482V229.3H481V232.8H480V236.5H479V240.6H478V242.5H477V246.5H476V248.8H475V250.0H474V251.9H473V255.4H472V258.4H471V262.7H470V265.7H469V269.7H468V271.7H467V274.8H466V277.4H465V279.1H464V280.5H463V280.5H462V279.4H461V280.2H460V280.0H459V280.3H458V279.4H457V280.3H456V279.9H455V280.1H454V279.7H453V280.0H452V278.7H451V279.0H450V279.2H449V279.6H448V279.7H447V279.3H446V279.0H445V279.1H444V279.4H443V279.4H442V279.3H441V279.2H440V279.1H439V278.6H438V277.9H437V278.4H436V278.8H435V278.8H434V277.8H433V277.9H432V278.0H431V278.2H430V277.7H429V277.6H428V277.6H427V277.7H426V275.9H425V276.6H424V275.7H423V276.1H422V276.0H421V276.3H420V275.5H419V275.6H418V275.9H417V276.2H416V275.7H415V275.7H414V275.7H413V275.0H412V274.9H411V275.5H410V275.2H409V274.7H408V274.5H407V274.1H406V272.8H405V272.5H404V272.6H403V272.0H402V271.6H401V271.3H400V270.2H399V270.4H398V270.4H397V269.0H396V269.2H395V268.6H394V267.6H393V266.8H392V266.4H391V265.4H390V264.6H389V262.8H388V263.8H387V263.2H386V262.4H385V261.1H384V260.8H383V259.3H382V259.3H381V258.7H380V257.7H379V256.4H378V255.7H377V255.1H376V254.5H375V254.0H374V252.6H373V252.6H372V250.2H371V249.8H370V247.8H369V247.2H368V244.6H367V243.1H366V240.2H365V238.9H364V237.5H363V235.2H362V234.3H361V232.3H360V231.8H359V230.3H358V229.3H357V228.2H356V226.2H355V224.6H354V224.8H353V225.2H352V225.0H351V224.8H350V225.6H349V226.4H348V227.9H347V228.5H346V230.6H345V233.8H344V236.8H343V239.3H342V243.9H341V247.6H340V251.7H339V254.8H338V258.0H337V261.9H336V265.3H335V268.8H334V271.6H333V274.0H332V276.1H331V278.5H330V280.1H329V281.4H328V282.2H327Z" fill="#ffa600"/>
<path d="M2,282.1H3V281.9H4V282.0H5V280.0H6V281.7H7V282.2H8V282.2H9V281.9H10V281.7H11V282.1H12V281.9H13V281.2H14V282.2H15V282.0H16V281.3H17V282.4H18V281.9H19V282.1H20V281.2H21V281.5H22V282.1H23V282.4H24V281.4H25V281.6H26V281.8H27V281.4H28V280.9H29V281.7H30V281.4H31V281.6H32V281.2H33V282.0H34V282.4H35V281.9H36V280.5H37V281.5H38V280.8H39V282.1H40V281.6H41V282.1H42V281.6H43V281.1H44V279.9H45V282.3H46V281.6H47V282.1H48V281.7H49V281.8H50V281.9H51V282.1H52V281.9H53V282.1H54V280.6H55V282.3H56V281.6H57V281.7H58V282.0H59V282.2H60V282.2H61V282.3H62V281.7H63V281.2H64V281.9H65V281.4H66V280.6H67V281.5H68V281.1H69V281.8H70V281.7H71V280.8H72V282.3H73V280.8H74V281.2H75V281.1H76V281.5H77V282.0H78V282.1H79V282.2H80V281.7H81V281.5H82V280.6H83V281.4H84V281.5H85V281.8H86V282.2H87V281.4H88V280.4H89V281.4H90V281.0H91V281.1H92V282.0H93V281.7H94V281.7H95V282.0H96V282.4H97V281.6H98V281.5H99V281.3H100V281.1H101V281.7H102V281.6H103V282.2H104V282.0H105V281.9H106V282.1H107V281.8H108V281.2H109V282.0H110V282.0H111V282.1H112V282.2H113V282.2H114V282.4H115V282.0H116V282.0H117V282.2H118V282.3H119V281.8H120V281.4H121V281.4H122V282.4H123V281.4H124V282.3H125V282.2H126V282.3H127V282.0H128V282.0H129V282.3H130V280.6H131V280.9H132V282.4H133V282.2H134V282.0H135V282.2H136V281.8H137V281.7H138V282.3H139V281.9H140V281.8H141V282.0H142V282.1H143V281.7H144V281.5H145V281.7H146V281.7H147V281.2H148V281.7H149V282.2H150V281.0H151V282.4H152V281.0H153V281.0H154V282.2H155V281.5H156V282.0H157V280.5H158V281.8H159V282.4H160V280.5H161V281.3H162V281.3H163V281.8H164V280.1H165V280.8H166V282.2H167V281.2H168V280.5H169V281.6H170V281.5H171V282.1H172V281.7H173V281.6H174V282.1H175V281.2H176V282.1H177V281.3H178V282.0H179V281.8H180V281.9H181V281.4H182V282.3H183V282.0H184V281.5H185V282.1H186V281.8H187V282.0H188V281.4H189V282.1H190V281.8H191V282.2H192V282.4H193V280.9H194V281.8H195V282.3H196V281.9H197V282.3H198V282.1H199V281.9H200V282.0H201V281.2H202V281.9H203V281.9H204V282.1H205V281.6H206V280.7H207V281.0H208V282.4H209V281.9H210V279.6H211V282.1H212V281.5H213V281.5H214V281.6H215V282.3H216V282.2H217V280.8H218V281.7H219V282.0H220V282.2H221V282.2H222V280.4H223V280.9H224V282.2H225V281.9H226V282.0H227V282.0H228V281.6H229V281.8H230V279.0H231V280.6H232V280.5H233V282.3H234V280.9H235V280.5H236V282.1H237V281.6H238V282.4H239V282.2H240V280.0H241V281.8H242V281.3H243V281.9H244V282.2H245V278.8H246V280.1H247V281.7H248V281.5H249V281.5H250V281.9H251V281.7H252V282.3H253V281.8H254V282.2H255V282.1H256V282.3H257V281.5H258V282.2H259V282.1H260V281.8H261V281.1H262V282.3H263V281.0H264V281.8H265V282.0H266V281.3H267V282.2H268V282.1H269V281.3H270V281.6H271V282.1H272V282.1H273V281.3H274V281.5H275V281.5H276V281.6H277V281.3H278V281.9H279V282.3H280V281.6H281V282.3H282V280.9H283V282.2H284V281.6H285V281.4H286V281.2H287V282.2H288V281.0H289V282.2H290V281.2H291V281.3H292V282.0H293V280.9H294V280.3H295V282.3H296V281.2H297V279.2H298V281.9H299V282.1H300V281.9H301V281.6H302V280.9H303V281.0H304V281.6H305V281.9H306V282.2H307V282.1H308V282.1H309V282.4H310V281.8H311V281.4H312V281.8H313V282.2H314V282.3H315V280.4H316V281.9H317V282.1H318V281.7H319V282.1H320V281.6H321V282.3H322V282.0H323V282.3H324V282.2H325V281.9H326V280.6H327V279.2H328V278.4H329V277.1H330V275.5H331V273.1H332V271.0H333V268.6H334V265.8H335V262.3H336V258.9H337V255.0H338V251.8H339V248.7H340V244.6H341V240.9H342V236.3H343V233.8H344V230.8H345V227.6H346V225.5H347V224.9H348V223.4H349V222.6H350V221.8H351V222.0H352V222.2H353V221.8H354V221.6H355V223.2H356V225.2H357V226.3H358V227.3H359V228.8H360V229.3H361V231.3H362V232.2H363V234.5H364V235.9H365V237.2H366V240.1H367V241.6H368V244.2H369V244.8H370V246.8H371V247.2H372V249.6H373V249.6H374V251.0H375V251.5H376V252.1H377V252.7H378V253.4H379V254.7H380V255.7H381V256.3H382V256.3H383V257.8H384V258.1H385V259.4H386V260.2H387V260.8H388V259.8H389V261.6H390V262.4H391V263.4H392V263.8H393V264.6H394V265.6H395V266.2H396V266.0H397V267.4H398V267.4H399V267.2H400V268.3H401V268.6H402V269.0H403V269.6H404V269.5H405V269.8H406V271.1H407V271.5H408V271.7H409V272.2H410V272.5H411V271.9H412V272.0H413V272.7H414V272.7H415V272.7H416V273.2H417V272.9H418V272.6H419V272.5H420V273.3H421V273.0H422V273.1H423V272.7H424V273.6H425V272.9H426V274.7H427V274.6H428V274.6H429V274.7H430V275.2H431V275.0H432V274.9H433V274.8H434V275.8H435V275.8H436V275.4H437V274.9H438V275.6H439V276.1H440V276.2H441V276.3H442V276.4H443V276.4H444V276.1H445V276.0H446V276.3H447V276.7H448V276.6H449V276.2H450V276.0H451V275.7H452V277.0H453V276.7H454V277.1H455V276.9H456V277.3H457V276.4H458V277.3H459V277.0H460V277.2H461V276.4H462V277.5H463V277.5H464V276.1H465V274.4H466V271.8H467V268.7H468V266.7H469V262.7H470V259.7H471V255.4H472V252.4H473V248.9H474V247.0H475V245.8H476V243.5H477V239.5H478V237.6H479V233.5H480V229.8H481V226.3H482V223.4H483V220.7H484V217.1H485V215.6H486V212.6H487V210.0H488V207.5H489V206.8H490V205.1H491V202.6H492V200.8H493V200.6H494V200.5H495V200.6H496V200.2H497V198.3H498V198.3H499V198.1H500V196.7H501V197.2H502V196.7H503V194.9H504V194.2H505V189.8H506V190.0H507V188.2H508V185.0H509V186.0H510V185.3H511V184.1H512V184.9H513V183.1H514V184.0H515V184.8H516V183.7H517V183.6H518V184.1H519V184.2H520V183.9H521V183.9H522V182.7H523V180.3H524V182.1H525V181.0H526V181.1H527V180.4H528V179.3H529V181.1H530V180.7H531V178.1H532V177.3H533V176.6H534V175.3H535V178.2H536V179.8H537V179.6H538V177.3H539V174.3H540V176.5H541V178.2H542V176.9H543V174.8H544V176.0H545V175.0H546V173.5H547V172.7H548V174.4H549V173.0H550V169.2H551V171.6H552V174.1H553V177.1H554V171.7H555V166.8H556V167.0H557V170.5H558V173.5H559V169.0H560V164.6H561V167.4H562V170.5H563V171.3H564V167.2H565V160.9H566V165.2H567V170.3H568V173.6H569V172.4H570V170.3H571V170.6H572V171.3H573V170.9H574V170.5H575V170.3H576V170.1H577V170.4H578V170.5H579V170.0H580V170.6H581V169.1H582V170.2H583V169.9H584V170.2H585V169.7H586V168.0H587V168.6H588V167.8H589V167.6H590V169.6H591V169.1H592V169.3H593V169.2H594V168.3H595V168.6H596V168.0H597V168.4H598V168.7H599V168.7H600V174.1H601V176.1H602V179.0H603V181.0H604V178.9H605V175.4H606V174.4H607V172.4H608V171.5H609V171.3H610V169.3H611V170.9H612V170.0H613V170.3H614V171.2H615V168.9H616V169.0H617V186.6H618V187.9H619V171.7H620V172.1H621V172.2H622V170.4H623V180.7H624V184.0H625V164.9H626V169.9H627V172.2H628V172.9H629V172.9H630V172.7H631V172.9H632V175.4H633V176.1H634V177.1H635V176.7H636V178.6H637V179.2H638V179.7H639V178.9H640V179.0H641V182.7H642V184.1H643V185.3H644V183.8H645V186.3H646V187.8H647V187.0H648V190.5H649V192.6H650V192.5H651V195.5H652V195.9H653V197.1H654V199.8H655V201.3H656V202.0H657V204.3H658V202.2H659V206.3H660V206.5H661V205.9H662V209.2H663V210.7H664V210.8H665V212.5H666V213.1H667V213.7H668V214.8H669V215.0H670V215.6H671V215.4H672V215.9H673V215.9H674V216.1H675V216.8H676V217.3H677V218.0H678V217.6H679V217.8H680V219.2H681V218.0H682V218.6H683V220.5H684V221.2H685V222.1H686V224.2H687V224.9H688V225.5H689V225.9H690V226.6H691V228.1H692V226.9H693V227.8H694V227.8H695V229.5H696V229.6H697V230.1H698V228.9H699V230.7H700V230.3H701V231.5H702V231.1H703V232.1H704V232.5H705V229.9H706V232.7H707V232.3H708V230.2H709V231.8H710V233.5H711V232.5H712V234.0H713V233.8H714V234.0H715V233.9H716V235.3H717V234.8H718V235.7H719V235.1H720V233.9H721V236.3H722V236.1H723V237.8H724V237.5H725V239.8H726V242.0H727V242.7H728V245.5H729V245.5H730V246.7H731V246.0H732V247.4H733V246.1H734V246.8H735V245.6H736V248.0H737V248.0H738V247.6H739V247.7H740V247.7H741V244.7H742V247.2H743V247.9H744V246.9H745V247.2H746V244.2H747V246.9H748V247.4H749V247.5H750V246.5H751V246.7H752V246.3H753V246.1H754V245.9H755V247.1H756V247.5H757V247.8H758V246.8H759V247.5H760V248.3H761V248.4H762V247.4H763V248.4H764V248.5H765V248.4H766V248.4H767V249.2H768V249.2H769V249.2H770V249.7H771V248.1H772V248.6H773V249.4H774V249.9H775V249.6H776V250.6H777V249.9H778V251.4H779V252.6H780V253.6H781V252.6H782V253.3H783V255.2H784V255.6H785V255.4H786V255.0H787V255.5H788V255.1H789V255.0H790V254.1H791V255.1H792V254.8H793V254.0H794V254.3H795V254.0H796V254.2H797V254.3H798V253.8H799V250.6H800V254.2H801V251.7H802V254.1H803V254.3H804V252.9H805V253.9H806V253.4H807V253.8H808V251.3H809V253.5H810V279.6V279.6H809V279.2H808V279.3H807V280.3H806V279.6H805V281.1H804V281.4H803V279.6H802V280.3H801V281.4H800V280.3H799V280.2H798V280.0H797V281.4H796V280.2H795V280.5H794V283.3H793V280.6H792V280.7H791V282.1H790V280.9H789V280.6H788V280.5H787V280.3H786V281.1H785V280.8H784V280.5H783V279.9H782V279.0H781V278.6H780V278.4H779V277.2H778V276.8H777V277.2H776V275.6H775V276.1H774V275.9H773V274.7H772V275.1H771V274.3H770V274.5H769V274.7H768V274.0H767V275.4H766V273.5H765V274.4H764V273.2H763V274.4H762V273.6H761V273.3H760V275.2H759V273.8H758V272.8H757V272.6H756V272.5H755V272.7H754V272.5H753V272.5H752V272.2H751V273.1H750V272.1H749V272.6H748V272.7H747V272.6H746V272.7H745V272.4H744V272.4H743V272.6H742V272.5H741V275.8H740V272.7H739V272.6H738V273.3H737V272.8H736V274.0H735V274.6H734V273.0H733V272.8H732V271.7H731V271.4H730V271.0H729V270.3H728V270.5H727V267.5H726V267.0H725V265.8H724V263.7H723V262.4H722V262.8H721V263.4H720V262.2H719V262.0H718V262.9H717V261.6H716V261.6H715V261.1H714V261.7H713V260.8H712V262.0H711V260.6H710V260.1H709V260.3H708V260.1H707V260.0H706V260.6H705V259.2H704V259.7H703V259.2H702V259.2H701V259.5H700V258.2H699V258.0H698V257.2H697V256.7H696V257.7H695V256.1H694V258.8H693V256.4H692V255.8H691V254.5H690V253.6H689V252.8H688V251.3H687V251.3H686V252.1H685V248.6H684V247.7H683V246.7H682V246.6H681V245.8H680V246.3H679V246.4H678V244.5H677V246.1H676V243.8H675V243.7H674V242.5H673V242.4H672V242.3H671V242.2H670V241.2H669V243.1H668V240.4H667V239.4H666V239.8H665V238.0H664V236.4H663V234.9H662V234.1H661V233.0H660V232.9H659V230.5H658V229.8H657V228.0H656V225.4H655V225.4H654V222.9H653V221.3H652V224.0H651V217.8H650V216.0H649V215.0H648V214.0H647V211.4H646V212.7H645V208.4H644V207.4H643V208.7H642V205.8H641V207.2H640V206.9H639V205.8H638V205.2H637V204.3H636V204.5H635V205.2H634V203.2H633V203.5H632V204.1H631V202.4H630V200.7H629V201.5H628V197.5H627V196.7H626V194.9H625V207.6H624V204.9H623V198.5H622V197.8H621V197.4H620V200.7H619V217.9H618V211.2H617V198.7H616V198.8H615V198.2H614V198.3H613V197.2H612V197.5H611V197.2H610V198.6H609V198.4H608V199.7H607V199.9H606V204.9H605V204.9H604V208.3H603V205.4H602V203.8H601V199.4H600V197.1H599V193.3H598V193.2H597V193.5H596V193.7H595V195.2H594V193.9H593V194.7H592V194.1H591V195.1H590V195.4H589V196.3H588V195.6H587V195.2H586V198.6H585V195.7H584V196.1H583V195.7H582V196.5H581V198.6H580V196.6H579V196.3H578V197.6H577V197.2H576V197.2H575V196.3H574V196.9H573V196.6H572V197.0H571V196.9H570V199.1H569V199.6H568V196.6H567V193.0H566V190.3H565V194.5H564V198.9H563V198.4H562V194.7H561V195.1H560V197.9H559V201.7H558V198.0H557V196.2H556V195.5H555V198.5H554V203.0H553V202.5H552V198.6H551V197.7H550V201.6H549V202.4H548V199.6H547V200.4H546V202.7H545V203.0H544V203.6H543V203.1H542V204.1H541V202.2H540V203.3H539V203.1H538V206.3H537V208.3H536V206.9H535V207.3H534V208.1H533V208.0H532V209.4H531V209.6H530V209.0H529V208.9H528V208.4H527V209.2H526V213.8H525V210.1H524V211.6H523V210.6H522V212.0H521V212.0H520V211.9H519V211.6H518V211.3H517V211.9H516V212.2H515V213.4H514V211.8H513V212.1H512V211.8H511V211.7H510V212.0H509V215.3H508V211.8H507V216.9H506V216.9H505V221.4H504V223.2H503V223.9H502V224.3H501V225.3H500V224.3H499V224.0H498V223.9H497V224.7H496V226.0H495V225.3H494V225.1H493V225.3H492V227.3H491V227.9H490V230.9H489V232.4H488V235.7H487V238.7H486V242.9H485V246.0H484V248.4H483V250.0H482V254.2H481V258.3H480V266.6H479V268.2H478V269.0H477V271.6H476V273.4H475V274.9H474V276.3H473V279.4H472V281.0H471V282.9H470V284.9H469V289.2H468V298.0H467V303.5H466V304.9H465V303.5H464V303.5H463V303.4H462V303.5H461V303.3H460V303.5H459V303.4H458V303.6H457V303.2H456V303.1H455V303.0H454V303.1H453V303.2H452V303.4H451V303.0H450V303.0H449V303.1H448V303.0H447V303.4H446V303.0H445V303.9H444V303.3H443V302.9H442V302.8H441V302.5H440V302.9H439V302.9H438V302.6H437V302.4H436V303.3H435V302.7H434V302.3H433V302.2H432V301.8H431V302.3H430V301.9H429V303.4H428V302.1H427V301.8H426V302.2H425V301.0H424V300.8H423V301.4H422V301.1H421V300.8H420V300.8H419V300.5H418V300.4H417V300.8H416V300.7H415V300.9H414V300.2H413V299.8H412V299.6H411V300.1H410V301.9H409V299.3H408V299.5H407V299.7H406V298.3H405V298.2H404V298.9H403V297.0H402V297.1H401V296.2H400V296.0H399V296.1H398V295.4H397V294.9H396V294.5H395V293.7H394V293.3H393V292.0H392V291.2H391V291.1H390V289.9H389V289.4H388V288.4H387V288.9H386V286.3H385V285.9H384V285.2H383V284.1H382V283.4H381V282.9H380V283.5H379V281.6H378V280.0H377V279.7H376V278.5H375V277.4H374V277.1H373V275.9H372V274.4H371V273.7H370V272.9H369V271.6H368V270.3H367V268.3H366V266.5H365V264.9H364V263.5H363V262.5H362V260.3H361V258.5H360V257.0H359V255.9H358V254.3H357V253.0H356V251.5H355V249.9H354V249.3H353V248.6H352V248.2H351V250.0H350V252.3H349V255.0H348V257.5H347V259.6H346V262.0H345V265.4H344V267.6H343V271.7H342V273.3H341V276.3H340V279.0H339V282.3H338V285.0H337V287.9H336V291.1H335V293.8H334V296.1H333V298.9H332V300.9H331V303.6H330V304.5H329V305.2H328V306.3H327V306.7H326V309.4H325V307.6H324V308.9H323V307.7H322V307.2H321V307.4H320V307.3H319V307.9H318V307.6H317V307.6H316V307.3H315V307.3H314V307.9H313V310.8H312V307.1H311V307.4H310V307.3H309V308.5H308V307.3H307V307.6H306V308.9H305V308.2H304V307.7H303V307.5H302V307.2H301V307.6H300V308.6H299V308.5H298V307.3H297V309.3H296V307.7H295V308.4H294V307.3H293V307.7H292V307.4H291V307.2H290V308.1H289V307.1H288V307.5H287V307.6H286V308.6H285V307.4H284V307.4H283V308.0H282V307.8H281V307.2H280V307.1H279V308.1H278V307.9H277V307.9H276V307.2H275V307.2H274V307.3H273V307.3H272V307.9H271V307.1H270V307.4H269V307.5H268V307.1H267V307.4H266V308.3H265V308.1H264V307.7H263V307.9H262V307.5H261V307.3H260V307.8H259V307.5H258V307.2H257V307.5H256V307.9H255V307.3H254V307.1H253V307.7H252V308.1H251V308.0H250V308.1H249V308.1H248V309.5H247V308.0H246V307.8H245V307.4H244V308.9H243V308.9H242V307.6H241V308.3H240V308.8H239V307.2H238V307.3H237V307.5H236V308.3H235V307.3H234V307.9H233V307.8H232V307.7H231V308.4H230V307.6H229V307.8H228V307.5H227V307.6H226V307.4H225V307.3H224V308.1H223V307.7H222V307.8H221V307.2H220V307.3H219V307.8H218V307.4H217V308.1H216V309.0H215V307.4H214V308.0H213V307.6H212V307.6H211V307.8H210V308.4H209V307.7H208V309.4H207V307.7H206V307.1H205V307.9H204V307.5H203V307.6H202V307.7H201V307.3H200V307.3H199V307.8H198V308.1H197V307.5H196V307.2H195V307.7H194V307.6H193V307.8H192V307.4H191V307.4H190V307.3H189V307.5H188V307.8H187V307.3H186V308.8H185V307.2H184V308.2H183V309.1H182V307.3H181V309.0H180V307.2H179V307.7H178V307.5H177V307.9H176V308.3H175V307.5H174V307.1H173V307.9H172V308.5H171V307.8H170V308.2H169V308.5H168V307.6H167V307.5H166V307.2H165V308.1H164V308.9H163V307.6H162V307.7H161V307.9H160V307.6H159V307.9H158V308.2H157V307.5H156V308.4H155V307.5H154V307.5H153V307.2H152V307.6H151V308.2H150V307.1H149V307.4H148V307.6H147V308.7H146V307.8H145V308.4H144V307.4H143V307.7H142V308.4H141V308.0H140V307.8H139V307.2H138V308.1H137V308.6H136V307.4H135V308.4H134V307.5H133V308.0H132V307.9H131V308.5H130V307.6H129V307.3H128V307.5H127V308.4H126V307.4H125V307.7H124V307.3H123V308.6H122V307.8H121V308.1H120V307.3H119V308.1H118V308.2H117V308.0H116V308.0H115V307.5H114V309.0H113V308.5H112V307.5H111V308.0H110V308.2H109V307.6H108V308.1H107V307.8H106V308.3H105V308.2H104V307.6H103V308.7H102V308.3H101V310.0H100V308.3H99V307.3H98V310.2H97V307.8H96V308.2H95V307.9H94V307.1H93V308.3H92V308.1H91V307.5H90V308.2H89V307.3H88V308.2H87V309.3H86V307.2H85V308.3H84V308.8H83V307.6H82V307.2H81V309.5H80V307.1H79V307.5H78V307.4H77V307.5H76V308.0H75V307.5H74V307.1H73V307.2H72V307.3H71V307.5H70V307.5H69V307.7H68V308.0H67V307.7H66V307.2H65V307.9H64V307.6H63V308.8H62V307.4H61V307.2H60V308.1H59V308.9H58V307.7H57V307.6H56V308.3H55V308.2H54V307.4H53V307.4H52V308.1H51V308.2H50V307.2H49V307.3H48V308.6H47V307.5H46V308.3H45V307.2H44V307.4H43V307.2H42V307.7H41V307.6H40V307.5H39V308.3H38V307.3H37V308.5H36V307.7H35V307.3H34V307.2H33V307.3H32V308.1H31V308.5H30V307.2H29V307.7H28V307.3H27V307.6H26V308.1H25V308.4H24V307.2H23V307.4H22V307.5H21V307.6H20V308.1H19V308.6H18V307.2H17V307.3H16V308.1H15V308.5H14V308.4H13V307.4H12V307.6H11V308.2H10V307.1H9V307.8H8V307.1H7V308.3H6V307.7H5V307.5H4V307.5H3V307.2H2Z" fill="#006e6e"/>
<path d="M2,283.2H3V282.9H4V283.1H5V281.0H6V282.7H7V283.2H8V283.2H9V282.9H10V282.8H11V283.2H12V282.9H13V282.3H14V283.3H15V283.0H16V282.3H17V283.4H18V283.0H19V283.2H20V282.3H21V282.5H22V283.2H23V283.4H24V282.5H25V282.7H26V282.9H27V282.5H28V282.0H29V282.7H30V282.5H31V282.6H32V282.3H33V283.1H34V283.4H35V283.0H36V281.6H37V282.6H38V281.8H39V283.2H40V282.7H41V283.1H42V282.7H43V282.1H44V280.9H45V283.4H46V282.7H47V283.1H48V282.8H49V282.9H50V283.0H51V283.2H52V282.9H53V283.2H54V281.7H55V283.4H56V282.7H57V282.7H58V283.1H59V283.3H60V283.3H61V283.4H62V282.8H63V282.3H64V282.9H65V282.4H66V281.7H67V282.6H68V282.2H69V282.8H70V282.8H71V281.9H72V283.4H73V281.9H74V282.2H75V282.1H76V282.6H77V283.1H78V283.1H79V283.2H80V282.8H81V282.6H82V281.7H83V282.5H84V282.6H85V282.9H86V283.3H87V282.4H88V281.5H89V282.4H90V282.1H91V282.2H92V283.0H93V282.7H94V282.8H95V283.0H96V283.4H97V282.6H98V282.6H99V282.4H100V282.1H101V282.8H102V282.7H103V283.2H104V283.1H105V282.9H106V283.1H107V282.8H108V282.3H109V283.1H110V283.1H111V283.1H112V283.2H113V283.3H114V283.4H115V283.1H116V283.1H117V283.3H118V283.4H119V282.9H120V282.5H121V282.4H122V283.5H123V282.5H124V283.3H125V283.3H126V283.4H127V283.0H128V283.1H129V283.3H130V281.6H131V282.0H132V283.4H133V283.2H134V283.0H135V283.3H136V282.9H137V282.8H138V283.4H139V282.9H140V282.9H141V283.1H142V283.1H143V282.8H144V282.6H145V282.7H146V282.8H147V282.2H148V282.7H149V283.3H150V282.0H151V283.4H152V282.1H153V282.1H154V283.3H155V282.6H156V283.1H157V281.6H158V282.8H159V283.4H160V281.5H161V282.3H162V282.4H163V282.9H164V281.1H165V281.9H166V283.2H167V282.2H168V281.6H169V282.6H170V282.6H171V283.2H172V282.8H173V282.7H174V283.2H175V282.3H176V283.1H177V282.4H178V283.0H179V282.9H180V283.0H181V282.4H182V283.4H183V283.0H184V282.5H185V283.1H186V282.9H187V283.1H188V282.4H189V283.1H190V282.9H191V283.3H192V283.4H193V281.9H194V282.9H195V283.4H196V282.9H197V283.3H198V283.2H199V282.9H200V283.0H201V282.3H202V282.9H203V283.0H204V283.2H205V282.6H206V281.8H207V282.0H208V283.4H209V283.0H210V280.6H211V283.2H212V282.6H213V282.5H214V282.7H215V283.3H216V283.2H217V281.8H218V282.8H219V283.1H220V283.3H221V283.3H222V281.4H223V281.9H224V283.2H225V282.9H226V283.1H227V283.1H228V282.6H229V282.9H230V280.0H231V281.7H232V281.6H233V283.3H234V282.0H235V281.5H236V283.2H237V282.6H238V283.4H239V283.3H240V281.1H241V282.8H242V282.4H243V283.0H244V283.2H245V279.8H246V281.1H247V282.8H248V282.6H249V282.6H250V283.0H251V282.7H252V283.4H253V282.8H254V283.3H255V283.2H256V283.3H257V282.6H258V283.2H259V283.2H260V282.9H261V282.2H262V283.3H263V282.1H264V282.9H265V283.0H266V282.4H267V283.3H268V283.1H269V282.4H270V282.7H271V283.2H272V283.2H273V282.3H274V282.5H275V282.5H276V282.6H277V282.4H278V283.0H279V283.4H280V282.6H281V283.3H282V282.0H283V283.3H284V282.7H285V282.5H286V282.3H287V283.2H288V282.0H289V283.3H290V282.2H291V282.3H292V283.1H293V282.0H294V281.3H295V283.3H296V282.3H297V280.3H298V282.9H299V283.1H300V282.9H301V282.6H302V282.0H303V282.0H304V282.6H305V283.0H306V283.3H307V283.1H308V283.2H309V283.4H310V282.8H311V282.5H312V282.8H313V283.3H314V283.4H315V281.4H316V282.9H317V283.2H318V282.8H319V283.1H320V282.7H321V283.4H322V283.1H323V283.4H324V283.2H325V282.9H326V281.7H327V280.3H328V279.5H329V278.2H330V276.7H331V274.3H332V272.1H333V269.7H334V266.9H335V263.5H336V260.1H337V256.2H338V253.0H339V249.9H340V245.8H341V242.2H342V237.7H343V235.2H344V232.2H345V229.0H346V226.9H347V226.2H348V224.7H349V223.8H350V222.9H351V223.1H352V223.3H353V222.9H354V222.7H355V224.3H356V226.3H357V227.5H358V228.4H359V230.0H360V230.4H361V232.5H362V233.4H363V235.7H364V237.1H365V238.3H366V241.2H367V242.8H368V245.4H369V245.9H370V247.9H371V248.2H372V250.7H373V250.7H374V252.1H375V252.6H376V253.2H377V253.8H378V254.5H379V255.8H380V256.8H381V257.4H382V257.4H383V258.9H384V259.2H385V260.5H386V261.3H387V261.9H388V260.9H389V262.8H390V263.5H391V264.5H392V265.0H393V265.8H394V266.8H395V267.3H396V267.2H397V268.6H398V268.5H399V268.4H400V269.5H401V269.8H402V270.1H403V270.7H404V270.6H405V270.9H406V272.2H407V272.6H408V272.9H409V273.3H410V273.6H411V273.0H412V273.1H413V273.9H414V273.9H415V273.8H416V274.3H417V274.0H418V273.7H419V273.6H420V274.4H421V274.1H422V274.2H423V273.8H424V274.7H425V274.0H426V275.8H427V275.7H428V275.8H429V275.8H430V276.3H431V276.1H432V276.0H433V275.9H434V276.9H435V276.9H436V276.5H437V276.0H438V276.6H439V277.2H440V277.2H441V277.4H442V277.5H443V277.5H444V277.2H445V277.0H446V277.4H447V277.8H448V277.7H449V277.3H450V277.1H451V276.8H452V278.1H453V277.8H454V278.2H455V277.9H456V278.4H457V277.4H458V278.4H459V278.1H460V278.3H461V277.5H462V278.6H463V278.6H464V277.2H465V275.6H466V273.1H467V269.9H468V267.7H469V263.6H470V260.7H471V256.4H472V253.5H473V250.0H474V248.1H475V247.0H476V244.7H477V240.7H478V238.9H479V234.8H480V231.0H481V227.4H482V224.5H483V221.8H484V218.2H485V216.7H486V213.7H487V211.0H488V208.5H489V207.7H490V206.0H491V203.6H492V201.8H493V201.6H494V201.6H495V201.6H496V201.3H497V199.4H498V199.3H499V199.2H500V197.7H501V198.2H502V197.8H503V196.0H504V195.3H505V190.9H506V191.0H507V189.3H508V186.1H509V187.1H510V186.4H511V185.2H512V186.0H513V184.2H514V185.1H515V186.0H516V184.9H517V184.8H518V185.2H519V185.4H520V185.1H521V185.1H522V183.8H523V181.4H524V183.3H525V182.1H526V182.2H527V181.6H528V180.5H529V182.2H530V181.9H531V179.3H532V178.5H533V177.8H534V176.5H535V179.4H536V180.9H537V180.7H538V178.5H539V175.4H540V177.6H541V179.3H542V178.0H543V176.0H544V177.1H545V176.2H546V174.6H547V173.8H548V175.5H549V174.2H550V170.4H551V172.7H552V175.2H553V178.2H554V172.9H555V168.0H556V168.2H557V171.7H558V174.6H559V170.2H560V165.8H561V168.6H562V171.6H563V172.4H564V168.4H565V162.1H566V166.4H567V171.4H568V174.6H569V173.4H570V171.3H571V171.7H572V172.4H573V172.0H574V171.6H575V171.4H576V171.2H577V171.5H578V171.6H579V171.1H580V171.7H581V170.2H582V171.3H583V171.0H584V171.3H585V170.8H586V169.1H587V169.7H588V168.9H589V168.6H590V170.7H591V170.2H592V170.4H593V170.3H594V169.3H595V169.6H596V169.0H597V169.4H598V169.7H599V169.7H600V175.2H601V177.2H602V180.1H603V182.1H604V180.0H605V176.5H606V175.5H607V173.4H608V172.6H609V172.4H610V170.5H611V172.1H612V171.2H613V171.5H614V172.4H615V170.1H616V170.2H617V187.8H618V189.0H619V172.8H620V173.2H621V173.3H622V171.5H623V181.8H624V185.1H625V166.1H626V171.0H627V173.3H628V174.0H629V174.1H630V173.9H631V174.1H632V176.6H633V177.3H634V178.3H635V177.9H636V179.7H637V180.2H638V180.8H639V179.9H640V180.1H641V183.7H642V185.0H643V186.3H644V184.8H645V187.3H646V188.8H647V188.0H648V191.5H649V193.7H650V193.5H651V196.5H652V196.9H653V198.2H654V200.8H655V202.3H656V203.0H657V205.4H658V203.3H659V207.3H660V207.6H661V207.0H662V210.2H663V211.8H664V211.9H665V213.6H666V214.2H667V214.8H668V215.9H669V216.0H670V216.7H671V216.5H672V217.0H673V217.0H674V217.2H675V217.9H676V218.4H677V219.1H678V218.7H679V219.0H680V220.3H681V219.1H682V219.7H683V221.6H684V222.4H685V223.2H686V225.3H687V226.0H688V226.6H689V227.1H690V227.8H691V229.3H692V228.1H693V228.9H694V229.0H695V230.7H696V230.7H697V231.3H698V230.0H699V231.8H700V231.4H701V232.6H702V232.3H703V233.2H704V233.6H705V231.1H706V233.8H707V233.4H708V231.3H709V233.0H710V234.6H711V233.7H712V235.1H713V234.9H714V235.1H715V235.0H716V236.5H717V235.9H718V236.8H719V236.2H720V235.0H721V237.4H722V237.2H723V238.9H724V238.5H725V240.9H726V243.1H727V243.8H728V246.5H729V246.6H730V247.8H731V247.1H732V248.4H733V247.1H734V247.9H735V246.7H736V249.1H737V249.1H738V248.6H739V248.8H740V248.7H741V245.8H742V248.2H743V248.9H744V247.9H745V248.3H746V245.2H747V248.0H748V248.4H749V248.5H750V247.5H751V247.8H752V247.4H753V247.2H754V247.0H755V248.1H756V248.6H757V248.8H758V247.8H759V248.5H760V249.3H761V249.4H762V248.5H763V249.4H764V249.5H765V249.4H766V249.5H767V250.2H768V250.3H769V250.2H770V250.8H771V249.2H772V249.6H773V250.4H774V250.9H775V250.7H776V251.7H777V250.9H778V252.5H779V253.6H780V254.6H781V253.6H782V254.3H783V256.3H784V256.6H785V256.5H786V256.0H787V256.6H788V256.2H789V256.0H790V255.2H791V256.2H792V255.8H793V255.0H794V255.4H795V255.0H796V255.2H797V255.4H798V254.8H799V251.7H800V255.2H801V252.8H802V255.2H803V255.4H804V254.0H805V255.0H806V254.5H807V254.8H808V252.4H809V254.6H810V278.3V278.3H809V277.8H808V277.9H807V278.9H806V278.2H805V279.8H804V280.1H803V278.2H802V278.9H801V280.1H800V279.0H799V278.8H798V278.7H797V280.1H796V278.8H795V279.1H794V282.0H793V279.3H792V279.4H791V280.8H790V279.6H789V279.3H788V279.1H787V278.9H786V279.8H785V279.5H784V279.2H783V278.6H782V277.7H781V277.2H780V277.1H779V275.9H778V275.5H777V275.8H776V274.3H775V274.8H774V274.6H773V273.3H772V273.7H771V273.0H770V273.2H769V273.4H768V272.7H767V274.1H766V272.2H765V273.1H764V271.8H763V273.1H762V272.3H761V271.9H760V273.9H759V272.5H758V271.5H757V271.3H756V271.2H755V271.4H754V271.2H753V271.1H752V270.9H751V271.7H750V270.7H749V271.3H748V271.4H747V271.2H746V271.4H745V271.1H744V271.1H743V271.3H742V271.2H741V274.5H740V271.4H739V271.3H738V271.9H737V271.5H736V272.7H735V273.3H734V271.7H733V271.5H732V270.4H731V270.1H730V269.7H729V269.0H728V269.1H727V266.1H726V265.6H725V264.5H724V262.4H723V261.0H722V261.4H721V262.0H720V260.8H719V260.6H718V261.5H717V260.2H716V260.2H715V259.7H714V260.4H713V259.4H712V260.6H711V259.2H710V258.7H709V258.9H708V258.7H707V258.5H706V259.2H705V257.8H704V258.3H703V257.8H702V257.7H701V258.1H700V256.8H699V256.6H698V255.8H697V255.3H696V256.3H695V254.7H694V257.4H693V255.0H692V254.4H691V253.0H690V252.2H689V251.4H688V250.0H687V249.9H686V250.7H685V247.2H684V246.3H683V245.3H682V245.2H681V244.4H680V244.9H679V245.0H678V243.1H677V244.7H676V242.4H675V242.3H674V241.1H673V241.0H672V240.9H671V240.8H670V239.8H669V241.8H668V239.0H667V238.0H666V238.5H665V236.7H664V235.1H663V233.6H662V232.7H661V231.7H660V231.5H659V229.1H658V228.4H657V226.7H656V224.2H655V224.1H654V221.6H653V220.1H652V222.7H651V216.5H650V214.7H649V213.7H648V212.7H647V210.1H646V211.4H645V207.2H644V206.2H643V207.5H642V204.6H641V205.9H640V205.6H639V204.4H638V203.8H637V202.9H636V203.1H635V203.7H634V201.8H633V202.0H632V202.6H631V200.9H630V199.2H629V200.1H628V196.2H627V195.4H626V193.5H625V206.2H624V203.6H623V197.2H622V196.4H621V196.0H620V199.3H619V216.5H618V209.8H617V197.3H616V197.3H615V196.8H614V196.8H613V195.7H612V196.1H611V195.8H610V197.2H609V197.1H608V198.4H607V198.6H606V203.5H605V203.5H604V207.0H603V204.0H602V202.4H601V198.1H600V195.8H599V192.0H598V191.8H597V192.1H596V192.4H595V193.9H594V192.5H593V193.4H592V192.7H591V193.8H590V194.1H589V194.9H588V194.2H587V193.8H586V197.3H585V194.3H584V194.7H583V194.3H582V195.1H581V197.3H580V195.3H579V194.9H578V196.3H577V195.8H576V195.9H575V194.9H574V195.5H573V195.2H572V195.7H571V195.5H570V197.7H569V198.3H568V195.2H567V191.6H566V188.7H565V193.1H564V197.6H563V197.0H562V193.2H561V193.6H560V196.4H559V200.4H558V196.6H557V194.7H556V194.0H555V197.1H554V201.7H553V201.1H552V197.1H551V196.2H550V200.2H549V201.0H548V198.2H547V199.0H546V201.3H545V201.6H544V202.2H543V201.7H542V202.7H541V200.8H540V201.8H539V201.7H538V204.9H537V206.9H536V205.5H535V205.8H534V206.6H533V206.5H532V207.9H531V208.1H530V207.5H529V207.4H528V206.9H527V207.8H526V212.3H525V208.7H524V210.2H523V209.1H522V210.5H521V210.6H520V210.4H519V210.1H518V209.9H517V210.5H516V210.8H515V212.0H514V210.4H513V210.7H512V210.4H511V210.3H510V210.7H509V214.0H508V210.6H507V215.5H506V215.6H505V220.1H504V221.8H503V222.5H502V222.9H501V224.0H500V223.0H499V222.7H498V222.6H497V223.4H496V224.7H495V224.1H494V223.8H493V224.1H492V226.0H491V226.7H490V229.7H489V231.2H488V234.3H487V237.3H486V241.5H485V244.6H484V246.9H483V248.6H482V252.8H481V256.9H480V265.0H479V266.6H478V267.5H477V270.2H476V272.0H475V273.5H474V275.0H473V278.0H472V279.7H471V281.7H470V283.7H469V288.0H468V296.6H467V301.9H466V303.4H465V302.2H464V302.2H463V302.1H462V302.2H461V302.0H460V302.2H459V302.0H458V302.2H457V301.8H456V301.7H455V301.7H454V301.8H453V301.8H452V302.1H451V301.7H450V301.6H449V301.7H448V301.7H447V302.1H446V301.6H445V302.6H444V301.9H443V301.5H442V301.5H441V301.2H440V301.6H439V301.5H438V301.2H437V301.0H436V301.9H435V301.3H434V301.0H433V300.8H432V300.4H431V301.0H430V300.6H429V302.0H428V300.7H427V300.4H426V300.8H425V299.6H424V299.4H423V300.0H422V299.7H421V299.4H420V299.4H419V299.1H418V299.1H417V299.4H416V299.3H415V299.5H414V298.7H413V298.4H412V298.2H411V298.7H410V300.4H409V297.9H408V298.1H407V298.2H406V296.9H405V296.7H404V297.4H403V295.6H402V295.7H401V294.7H400V294.5H399V294.7H398V294.0H397V293.4H396V293.0H395V292.3H394V291.8H393V290.6H392V289.8H391V289.7H390V288.5H389V288.0H388V286.9H387V287.5H386V284.9H385V284.5H384V283.8H383V282.7H382V282.1H381V281.5H380V282.1H379V280.2H378V278.6H377V278.3H376V277.1H375V276.0H374V275.8H373V274.6H372V273.1H371V272.4H370V271.5H369V270.2H368V268.9H367V266.9H366V265.0H365V263.4H364V262.0H363V261.0H362V258.9H361V257.0H360V255.5H359V254.5H358V252.9H357V251.6H356V250.1H355V248.5H354V247.9H353V247.2H352V246.9H351V248.6H350V250.8H349V253.4H348V255.8H347V257.9H346V260.3H345V263.7H344V265.9H343V270.0H342V271.6H341V274.8H340V277.5H339V280.8H338V283.5H337V286.4H336V289.6H335V292.4H334V294.7H333V297.5H332V299.5H331V302.2H330V303.1H329V303.8H328V304.9H327V305.4H326V308.0H325V306.3H324V307.5H323V306.4H322V305.9H321V306.1H320V306.0H319V306.5H318V306.3H317V306.3H316V306.0H315V306.0H314V306.6H313V309.5H312V305.8H311V306.1H310V306.0H309V307.2H308V306.0H307V306.2H306V307.6H305V306.9H304V306.4H303V306.2H302V305.9H301V306.2H300V307.3H299V307.2H298V305.9H297V308.0H296V306.4H295V307.0H294V305.9H293V306.4H292V306.1H291V305.8H290V306.8H289V305.8H288V306.2H287V306.3H286V307.3H285V306.1H284V306.0H283V306.7H282V306.5H281V305.8H280V305.8H279V306.8H278V306.6H277V306.6H276V305.9H275V305.9H274V305.9H273V306.0H272V306.5H271V305.8H270V306.1H269V306.2H268V305.8H267V306.1H266V306.9H265V306.8H264V306.4H263V306.5H262V306.1H261V306.0H260V306.5H259V306.2H258V305.9H257V306.2H256V306.6H255V306.0H254V305.8H253V306.4H252V306.8H251V306.7H250V306.7H249V306.7H248V308.2H247V306.7H246V306.5H245V306.0H244V307.6H243V307.6H242V306.3H241V307.0H240V307.5H239V305.8H238V306.0H237V306.1H236V307.0H235V306.0H234V306.5H233V306.4H232V306.4H231V307.1H230V306.3H229V306.5H228V306.2H227V306.2H226V306.1H225V305.9H224V306.8H223V306.4H222V306.4H221V305.8H220V306.0H219V306.5H218V306.0H217V306.8H216V307.7H215V306.1H214V306.6H213V306.3H212V306.3H211V306.5H210V307.1H209V306.4H208V308.0H207V306.4H206V305.8H205V306.6H204V306.2H203V306.2H202V306.4H201V306.0H200V305.9H199V306.5H198V306.8H197V306.2H196V305.9H195V306.4H194V306.3H193V306.5H192V306.1H191V306.1H190V306.0H189V306.2H188V306.5H187V306.0H186V307.5H185V305.9H184V306.9H183V307.8H182V306.0H181V307.7H180V305.8H179V306.4H178V306.2H177V306.6H176V306.9H175V306.2H174V305.8H173V306.6H172V307.1H171V306.5H170V306.8H169V307.2H168V306.3H167V306.2H166V305.8H165V306.7H164V307.6H163V306.2H162V306.4H161V306.6H160V306.3H159V306.6H158V306.8H157V306.2H156V307.0H155V306.2H154V306.1H153V305.9H152V306.2H151V306.9H150V305.8H149V306.1H148V306.3H147V307.4H146V306.5H145V307.1H144V306.1H143V306.4H142V307.1H141V306.7H140V306.5H139V305.9H138V306.8H137V307.3H136V306.0H135V307.1H134V306.2H133V306.7H132V306.6H131V307.1H130V306.3H129V305.9H128V306.2H127V307.1H126V306.1H125V306.4H124V306.0H123V307.2H122V306.4H121V306.8H120V305.9H119V306.8H118V306.9H117V306.6H116V306.7H115V306.2H114V307.7H113V307.1H112V306.1H111V306.7H110V306.9H109V306.3H108V306.8H107V306.4H106V306.9H105V306.9H104V306.3H103V307.4H102V307.0H101V308.7H100V307.0H99V305.9H98V308.9H97V306.5H96V306.9H95V306.6H94V305.8H93V307.0H92V306.8H91V306.2H90V306.8H89V306.0H88V306.9H87V308.0H86V305.9H85V307.0H84V307.5H83V306.2H82V305.9H81V308.2H80V305.8H79V306.2H78V306.1H77V306.2H76V306.7H75V306.1H74V305.8H73V305.9H72V306.0H71V306.1H70V306.1H69V306.3H68V306.7H67V306.4H66V305.9H65V306.6H64V306.3H63V307.5H62V306.1H61V305.9H60V306.8H59V307.6H58V306.3H57V306.3H56V307.0H55V306.9H54V306.0H53V306.0H52V306.8H51V306.8H50V305.9H49V305.9H48V307.3H47V306.1H46V307.0H45V305.9H44V306.1H43V305.9H42V306.3H41V306.2H40V306.2H39V307.0H38V306.0H37V307.2H36V306.3H35V306.0H34V305.9H33V306.0H32V306.8H31V307.2H30V305.9H29V306.4H28V305.9H27V306.3H26V306.8H25V307.1H24V305.9H23V306.0H22V306.2H21V306.3H20V306.8H19V307.3H18V305.9H17V306.0H16V306.7H15V307.2H14V307.0H13V306.1H12V306.2H11V306.9H10V305.8H9V306.5H8V305.8H7V307.0H6V306.4H5V306.1H4V306.2H3V305.9H2Z" fill="#009a9a"/>
<path d="M2,283.9H3V283.9H4V283.9H5V283.9H6V283.9H7V283.9H8V283.9H9V283.9H10V283.9H11V283.9H12V283.9H13V283.9H14V283.9H15V283.9H16V283.9H17V283.9H18V283.9H19V283.9H20V283.9H21V283.9H22V283.9H23V283.9H24V283.9H25V283.9H26V283.9H27V283.9H28V283.9H29V283.9H30V283.9H31V283.9H32V283.9H33V283.9H34V283.9H35V283.9H36V283.9H37V283.9H38V283.9H39V283.9H40V283.9H41V283.9H42V283.9H43V283.9H44V283.9H45V283.9H46V283.9H47V283.9H48V283.9H49V283.9H50V283.9H51V283.9H52V283.9H53V283.9H54V283.9H55V283.9H56V283.9H57V283.9H58V283.9H59V283.9H60V283.9H61V283.9H62V283.9H63V283.9H64V283.9H65V283.9H66V283.9H67V283.9H68V283.9H69V283.9H70V283.9H71V283.9H72V283.9H73V283.9H74V283.9H75V283.9H76V283.9H77V283.9H78V283.9H79V283.9H80V283.9H81V283.9H82V283.9H83V283.9H84V283.9H85V283.9H86V283.9H87V283.9H88V283.9H89V283.9H90V283.9H91V283.9H92V283.9H93V283.9H94V283.9H95V283.9H96V283.9H97V283.9H98V283.9H99V283.9H100V283.9H101V283.9H102V283.9H103V283.9H104V283.9H105V283.9H106V283.9H107V283.9H108V283.9H109V283.9H110V283.9H111V283.9H112V283.9H113V283.9H114V283.9H115V283.9H116V283.9H117V283.9H118V283.9H119V283.9H120V283.9H121V283.9H122V283.9H123V283.9H124V283.9H125V283.9H126V283.9H127V283.9H128V283.9H129V283.9H130V283.9H131V283.9H132V283.9H133V283.9H134V283.9H135V283.9H136V283.9H137V283.9H138V283.9H139V283.9H140V283.9H141V283.9H142V283.9H143V283.9H144V283.9H145V283.9H146V283.9H147V283.9H148V283.9H149V283.9H150V283.9H151V283.9H152V283.9H153V283.9H154V283.9H155V283.9H156V283.9H157V283.9H158V283.9H159V283.9H160V283.9H161V283.9H162V283.9H163V283.9H164V283.9H165V283.9H166V283.9H167V283.9H168V283.9H169V283.9H170V283.9H171V283.9H172V283.9H173V283.9H174V283.9H175V283.9H176V283.9H177V283.9H178V283.9H179V283.9H180V283.9H181V283.9H182V283.9H183V283.9H184V283.9H185V283.9H186V283.9H187V283.9H188V283.9H189V283.9H190V283.9H191V283.9H192V283.9H193V283.9H194V283.9H195V283.9H196V283.9H197V283.9H198V283.9H199V283.9H200V283.9H201V283.9H202V283.9H203V283.9H204V283.9H205V283.9H206V283.9H207V283.9H208V283.9H209V283.9H210V283.9H211V283.9H212V283.9H213V283.9H214V283.9H215V283.9H216V283.9H217V283.9H218V283.9H219V283.9H220V283.9H221V283.9H222V283.9H223V283.9H224V283.9H225V283.9H226V283.9H227V283.9H228V283.9H229V283.9H230V283.9H231V283.9H232V283.9H233V283.9H234V283.9H235V283.9H236V283.9H237V283.9H238V283.9H239V283.9H240V283.9H241V283.9H242V283.9H243V283.9H244V283.9H245V283.9H246V283.9H247V283.9H248V283.9H249V283.9H250V283.9H251V283.9H252V283.9H253V283.9H254V283.9H255V283.9H256V283.9H257V283.9H258V283.9H259V283.9H260V283.9H261V283.9H262V283.9H263V283.9H264V283.9H265V283.9H266V283.9H267V283.9H268V283.9H269V283.9H270V283.9H271V283.9H272V283.9H273V283.9H274V283.9H275V283.9H276V283.9H277V283.9H278V283.9H279V283.9H280V283.9H281V283.9H282V283.9H283V283.9H284V283.9H285V283.9H286V283.9H287V283.9H288V283.9H289V283.9H290V283.9H291V283.9H292V283.9H293V283.9H294V283.9H295V283.9H296V283.9H297V283.9H298V283.9H299V283.9H300V283.9H301V283.9H302V283.9H303V283.9H304V283.9H305V283.9H306V283.9H307V283.9H308V283.9H309V283.9H310V283.9H311V283.9H312V283.9H313V283.9H314V283.9H315V283.9H316V283.9H317V283.9H318V283.9H319V283.9H320V283.9H321V283.9H322V283.9H323V283.9H324V283.9H325V283.9H326V282.8H327V281.7H328V280.6H329V279.5H330V277.6H331V275.6H332V273.5H333V271.5H334V268.1H335V264.7H336V261.2H337V257.7H338V254.3H339V250.9H340V247.5H341V243.6H342V239.8H343V236.4H344V233.5H345V230.7H346V229.1H347V227.5H348V226.4H349V225.3H350V224.6H351V224.2H352V224.2H353V224.7H354V225.1H355V226.1H356V227.2H357V228.4H358V229.6H359V230.9H360V232.2H361V233.7H362V235.2H363V236.7H364V238.3H365V240.4H366V242.4H367V244.5H368V246.2H369V247.5H370V248.8H371V250.1H372V251.4H373V252.2H374V253.0H375V253.8H376V254.6H377V255.4H378V256.2H379V256.9H380V257.7H381V258.5H382V259.3H383V260.0H384V260.7H385V261.4H386V262.2H387V262.9H388V263.6H389V264.3H390V265.0H391V265.7H392V266.5H393V267.2H394V267.9H395V268.6H396V269.0H397V269.4H398V269.8H399V270.2H400V270.6H401V271.0H402V271.4H403V271.8H404V272.2H405V272.6H406V273.0H407V273.4H408V273.8H409V274.2H410V274.4H411V274.5H412V274.7H413V274.8H414V274.9H415V275.1H416V275.2H417V275.4H418V275.5H419V275.7H420V275.8H421V275.9H422V276.1H423V276.2H424V276.3H425V276.5H426V276.6H427V276.7H428V276.9H429V277.0H430V277.2H431V277.3H432V277.4H433V277.6H434V277.7H435V277.8H436V278.0H437V278.0H438V278.1H439V278.2H440V278.2H441V278.3H442V278.3H443V278.4H444V278.4H445V278.5H446V278.6H447V278.6H448V278.7H449V278.7H450V278.8H451V278.9H452V278.9H453V279.0H454V279.0H455V279.1H456V279.2H457V279.2H458V279.3H459V279.3H460V279.4H461V279.4H462V279.5H463V279.6H464V278.5H465V276.6H466V274.8H467V272.5H468V268.6H469V264.6H470V260.9H471V257.1H472V254.3H473V252.0H474V249.7H475V247.4H476V245.1H477V242.9H478V239.6H479V236.0H480V232.2H481V228.5H482V224.9H483V222.3H484V219.7H485V217.2H486V214.7H487V212.1H488V210.0H489V208.1H490V206.4H491V204.7H492V203.8H493V203.2H494V202.7H495V202.1H496V201.5H497V201.0H498V200.4H499V199.8H500V199.3H501V198.7H502V198.1H503V197.5H504V195.6H505V193.6H506V191.6H507V189.5H508V187.7H509V187.5H510V187.3H511V187.2H512V187.0H513V186.9H514V186.7H515V186.5H516V186.4H517V186.2H518V186.0H519V185.9H520V185.7H521V185.4H522V185.2H523V185.0H524V184.8H525V184.4H526V183.3H527V182.2H528V181.9H529V182.6H530V183.4H531V182.7H532V181.0H533V179.2H534V179.6H535V180.8H536V182.1H537V180.9H538V178.8H539V176.8H540V177.8H541V179.5H542V178.9H543V177.4H544V178.1H545V177.9H546V175.3H547V174.7H548V177.0H549V175.3H550V171.7H551V172.9H552V176.1H553V178.4H554V173.6H555V168.9H556V168.7H557V173.1H558V176.2H559V171.3H560V166.4H561V168.9H562V173.2H563V174.1H564V168.9H565V163.7H566V167.4H567V172.0H568V174.9H569V174.0H570V173.0H571V172.8H572V172.7H573V172.6H574V172.5H575V172.5H576V172.4H577V172.3H578V172.2H579V172.1H580V172.0H581V172.0H582V171.9H583V171.8H584V171.6H585V171.5H586V171.4H587V171.2H588V171.1H589V171.0H590V170.8H591V170.7H592V170.6H593V170.4H594V170.3H595V170.2H596V170.0H597V169.9H598V170.3H599V172.9H600V175.4H601V178.5H602V181.5H603V182.9H604V180.3H605V177.8H606V175.9H607V174.7H608V173.6H609V172.6H610V172.1H611V172.2H612V172.3H613V172.5H614V172.6H615V172.8H616V172.9H617V173.0H618V173.2H619V173.3H620V173.4H621V173.5H622V172.9H623V171.2H624V169.5H625V170.4H626V172.3H627V174.4H628V174.6H629V174.9H630V175.5H631V176.3H632V177.1H633V177.9H634V178.6H635V179.4H636V180.1H637V180.9H638V181.7H639V182.4H640V183.3H641V184.3H642V185.2H643V186.2H644V187.2H645V188.3H646V189.3H647V190.4H648V192.0H649V193.6H650V195.2H651V196.8H652V198.5H653V200.1H654V201.7H655V203.3H656V204.5H657V205.6H658V206.8H659V207.9H660V209.0H661V210.2H662V211.3H663V212.4H664V213.3H665V214.2H666V215.0H667V215.8H668V216.4H669V216.7H670V217.1H671V217.5H672V217.8H673V218.2H674V218.6H675V218.9H676V219.3H677V219.7H678V220.0H679V220.4H680V220.8H681V221.1H682V221.5H683V222.5H684V223.6H685V224.8H686V226.0H687V227.1H688V228.3H689V229.1H690V229.5H691V229.9H692V230.2H693V230.6H694V230.9H695V231.3H696V231.6H697V232.0H698V232.3H699V232.7H700V233.0H701V233.4H702V233.7H703V234.1H704V234.3H705V234.5H706V234.7H707V235.0H708V235.2H709V235.4H710V235.6H711V235.8H712V236.1H713V236.3H714V236.5H715V236.7H716V236.9H717V237.1H718V237.4H719V237.6H720V237.8H721V238.0H722V238.2H723V239.5H724V241.0H725V242.5H726V243.9H727V245.4H728V246.9H729V247.8H730V248.2H731V248.5H732V248.8H733V249.2H734V249.5H735V249.8H736V249.7H737V249.7H738V249.6H739V249.6H740V249.5H741V249.5H742V249.4H743V249.3H744V249.3H745V249.2H746V249.2H747V249.1H748V249.1H749V249.0H750V249.0H751V248.9H752V248.9H753V248.8H754V248.8H755V248.9H756V249.1H757V249.2H758V249.4H759V249.5H760V249.7H761V249.8H762V250.0H763V250.1H764V250.3H765V250.4H766V250.6H767V250.7H768V250.9H769V251.0H770V251.2H771V251.3H772V251.4H773V251.6H774V251.7H775V251.9H776V252.6H777V253.2H778V253.8H779V254.4H780V255.1H781V255.7H782V256.3H783V256.9H784V257.1H785V257.1H786V257.0H787V256.9H788V256.8H789V256.8H790V256.7H791V256.6H792V256.5H793V256.5H794V256.4H795V256.3H796V256.3H797V256.2H798V256.1H799V256.0H800V256.0H801V255.9H802V255.8H803V255.7H804V255.7H805V255.6H806V255.5H807V255.4H808V255.4H809V255.3H810V277.1V277.1H809V277.1H808V277.2H807V277.2H806V277.3H805V277.3H804V277.4H803V277.4H802V277.5H801V277.5H800V277.6H799V277.6H798V277.7H797V277.7H796V277.8H795V277.8H794V277.8H793V277.9H792V277.9H791V278.0H790V278.0H789V278.1H788V278.1H787V278.2H786V278.2H785V278.3H784V278.0H783V277.4H782V276.8H781V276.2H780V275.6H779V274.9H778V274.3H777V273.7H776V273.1H775V272.9H774V272.7H773V272.6H772V272.4H771V272.3H770V272.1H769V271.9H768V271.8H767V271.6H766V271.5H765V271.3H764V271.2H763V271.0H762V270.9H761V270.7H760V270.6H759V270.4H758V270.3H757V270.1H756V270.0H755V269.8H754V269.9H753V269.9H752V270.0H751V270.0H750V270.1H749V270.1H748V270.2H747V270.3H746V270.3H745V270.4H744V270.4H743V270.5H742V270.5H741V270.6H740V270.7H739V270.7H738V270.8H737V270.8H736V270.9H735V270.6H734V270.3H733V269.9H732V269.6H731V269.3H730V269.0H729V268.1H728V266.8H727V265.4H726V264.1H725V262.7H724V261.4H723V260.2H722V260.1H721V259.9H720V259.7H719V259.5H718V259.3H717V259.2H716V259.0H715V258.8H714V258.6H713V258.4H712V258.3H711V258.1H710V257.9H709V257.7H708V257.5H707V257.4H706V257.2H705V257.0H704V256.8H703V256.5H702V256.1H701V255.8H700V255.5H699V255.1H698V254.8H697V254.5H696V254.2H695V253.8H694V253.5H693V253.2H692V252.9H691V252.2H690V251.2H689V250.2H688V249.2H687V248.2H686V247.2H685V246.1H684V245.1H683V244.2H682V243.8H681V243.3H680V242.9H679V242.5H678V242.0H677V241.6H676V241.2H675V240.8H674V240.3H673V239.9H672V239.5H671V239.0H670V238.6H669V238.2H668V237.7H667V237.2H666V236.5H665V235.3H664V234.1H663V232.9H662V231.7H661V230.4H660V229.2H659V228.0H658V226.7H657V225.2H656V223.6H655V222.0H654V220.4H653V218.8H652V217.2H651V215.6H650V214.0H649V212.4H648V210.9H647V209.4H646V208.0H645V206.5H644V205.2H643V204.8H642V204.3H641V203.9H640V203.5H639V203.2H638V202.8H637V202.4H636V202.0H635V201.6H634V201.2H633V200.9H632V200.3H631V199.1H630V198.0H629V196.9H628V195.8H627V193.8H626V192.4H625V192.0H624V193.4H623V194.9H622V195.5H621V195.6H620V195.7H619V195.7H618V195.8H617V195.8H616V195.7H615V195.6H614V195.4H613V195.3H612V195.2H611V195.1H610V195.1H609V195.1H608V196.2H607V198.0H606V200.0H605V202.5H604V205.0H603V203.5H602V200.3H601V197.0H600V194.3H599V191.6H598V191.2H597V191.4H596V191.6H595V191.8H594V192.0H593V192.1H592V192.3H591V192.5H590V192.7H589V192.9H588V193.0H587V193.2H586V193.4H585V193.6H584V193.8H583V194.0H582V194.0H581V194.1H580V194.1H579V194.1H578V194.2H577V194.2H576V194.3H575V194.3H574V194.4H573V194.4H572V194.5H571V194.5H570V195.4H569V196.2H568V194.1H567V190.7H566V188.1H565V192.2H564V196.2H563V195.6H562V192.5H561V190.7H560V194.6H559V198.3H558V196.1H557V192.8H556V192.9H555V196.6H554V200.2H553V198.5H552V196.2H551V195.3H550V198.0H549V199.4H548V197.7H547V198.2H546V200.2H545V200.3H544V199.8H543V201.0H542V201.4H541V200.1H540V199.4H539V201.2H538V203.2H537V204.6H536V204.0H535V203.5H534V203.7H533V205.1H532V206.4H531V206.9H530V206.4H529V205.8H528V206.0H527V206.8H526V207.7H525V208.0H524V208.1H523V208.3H522V208.4H521V208.6H520V208.8H519V208.8H518V208.9H517V209.0H516V209.1H515V209.2H514V209.3H513V209.4H512V209.4H511V209.5H510V209.6H509V209.7H508V210.0H507V212.5H506V214.9H505V217.4H504V219.7H503V220.0H502V220.4H501V220.8H500V221.1H499V221.5H498V221.8H497V222.2H496V222.6H495V222.9H494V223.3H493V223.6H492V224.3H491V225.8H490V227.3H489V230.4H488V233.5H487V236.7H486V239.5H485V242.2H484V245.0H483V247.8H482V250.9H481V255.8H480V260.6H479V264.9H478V266.7H477V268.5H476V270.2H475V272.0H474V273.8H473V276.0H472V278.3H471V280.6H470V283.0H469V287.1H468V295.4H467V300.3H466V300.5H465V300.7H464V300.8H463V300.8H462V300.7H461V300.7H460V300.7H459V300.6H458V300.6H457V300.6H456V300.5H455V300.5H454V300.5H453V300.5H452V300.4H451V300.4H450V300.4H449V300.3H448V300.3H447V300.3H446V300.2H445V300.2H444V300.2H443V300.2H442V300.1H441V300.1H440V300.1H439V300.0H438V300.0H437V300.0H436V299.8H435V299.7H434V299.6H433V299.5H432V299.3H431V299.2H430V299.1H429V299.0H428V298.8H427V298.7H426V298.6H425V298.5H424V298.3H423V298.2H422V298.1H421V298.0H420V297.9H419V297.8H418V297.7H417V297.6H416V297.5H415V297.4H414V297.3H413V297.2H412V297.1H411V297.0H410V296.9H409V296.5H408V296.2H407V295.8H406V295.4H405V295.1H404V294.7H403V294.3H402V294.0H401V293.6H400V293.3H399V292.9H398V292.5H397V292.2H396V291.8H395V291.0H394V290.2H393V289.4H392V288.6H391V287.8H390V287.0H389V286.2H388V285.4H387V284.6H386V283.8H385V283.0H384V282.2H383V281.5H382V280.6H381V279.8H380V279.0H379V278.2H378V277.4H377V276.6H376V275.8H375V275.0H374V274.0H373V273.0H372V271.9H371V270.8H370V269.8H369V268.4H368V266.9H367V265.3H366V263.7H365V262.2H364V260.7H363V259.0H362V257.4H361V255.8H360V254.1H359V252.7H358V251.2H357V249.8H356V248.4H355V247.4H354V246.6H353V245.8H352V245.5H351V247.4H350V249.3H349V251.3H348V253.7H347V256.2H346V258.6H345V261.5H344V264.3H343V267.2H342V270.0H341V272.8H340V275.6H339V278.8H338V281.9H337V285.1H336V288.3H335V290.9H334V293.5H333V295.9H332V298.4H331V300.8H330V301.7H329V302.6H328V303.4H327V304.2H326V305.1H325V305.1H324V305.1H323V305.1H322V305.1H321V305.1H320V305.1H319V305.1H318V305.1H317V305.1H316V305.1H315V305.1H314V305.1H313V305.1H312V305.1H311V305.1H310V305.1H309V305.1H308V305.1H307V305.1H306V305.1H305V305.1H304V305.1H303V305.1H302V305.1H301V305.1H300V305.1H299V305.1H298V305.1H297V305.1H296V305.1H295V305.1H294V305.1H293V305.1H292V305.1H291V305.1H290V305.1H289V305.1H288V305.1H287V305.1H286V305.1H285V305.1H284V305.1H283V305.1H282V305.1H281V305.1H280V305.1H279V305.1H278V305.1H277V305.1H276V305.1H275V305.1H274V305.1H273V305.1H272V305.1H271V305.1H270V305.1H269V305.1H268V305.1H267V305.1H266V305.1H265V305.1H264V305.1H263V305.1H262V305.1H261V305.1H260V305.1H259V305.1H258V305.1H257V305.1H256V305.1H255V305.1H254V305.1H253V305.1H252V305.1H251V305.1H250V305.1H249V305.1H248V305.1H247V305.1H246V305.1H245V305.1H244V305.1H243V305.1H242V305.1H241V305.1H240V305.1H239V305.1H238V305.1H237V305.1H236V305.1H235V305.1H234V305.1H233V305.1H232V305.1H231V305.1H230V305.1H229V305.1H228V305.1H227V305.1H226V305.1H225V305.1H224V305.1H223V305.1H222V305.1H221V305.1H220V305.1H219V305.1H218V305.1H217V305.1H216V305.1H215V305.1H214V305.1H213V305.1H212V305.1H211V305.1H210V305.1H209V305.1H208V305.1H207V305.1H206V305.1H205V305.1H204V305.1H203V305.1H202V305.1H201V305.1H200V305.1H199V305.1H198V305.1H197V305.1H196V305.1H195V305.1H194V305.1H193V305.1H192V305.1H191V305.1H190V305.1H189V305.1H188V305.1H187V305.1H186V305.1H185V305.1H184V305.1H183V305.1H182V305.1H181V305.1H180V305.1H179V305.1H178V305.1H177V305.1H176V305.1H175V305.1H174V305.1H173V305.1H172V305.1H171V305.1H170V305.1H169V305.1H168V305.1H167V305.1H166V305.1H165V305.1H164V305.1H163V305.1H162V305.1H161V305.1H160V305.1H159V305.1H158V305.1H157V305.1H156V305.1H155V305.1H154V305.1H153V305.1H152V305.1H151V305.1H150V305.1H149V305.1H148V305.1H147V305.1H146V305.1H145V305.1H144V305.1H143V305.1H142V305.1H141V305.1H140V305.1H139V305.1H138V305.1H137V305.1H136V305.1H135V305.1H134V305.1H133V305.1H132V305.1H131V305.1H130V305.1H129V305.1H128V305.1H127V305.1H126V305.1H125V305.1H124V305.1H123V305.1H122V305.1H121V305.1H120V305.1H119V305.1H118V305.1H117V305.1H116V305.1H115V305.1H114V305.1H113V305.1H112V305.1H111V305.1H110V305.1H109V305.1H108V305.1H107V305.1H106V305.1H105V305.1H104V305.1H103V305.1H102V305.1H101V305.1H100V305.1H99V305.1H98V305.1H97V305.1H96V305.1H95V305.1H94V305.1H93V305.1H92V305.1H91V305.1H90V305.1H89V305.1H88V305.1H87V305.1H86V305.1H85V305.1H84V305.1H83V305.1H82V305.1H81V305.1H80V305.1H79V305.1H78V305.1H77V305.1H76V305.1H75V305.1H74V305.1H73V305.1H72V305.1H71V305.1H70V305.1H69V305.1H68V305.1H67V305.1H66V305.1H65V305.1H64V305.1H63V305.1H62V305.1H61V305.1H60V305.1H59V305.1H58V305.1H57V305.1H56V305.1H55V305.1H54V305.1H53V305.1H52V305.1H51V305.1H50V305.1H49V305.1H48V305.1H47V305.1H46V305.1H45V305.1H44V305.1H43V305.1H42V305.1H41V305.1H40V305.1H39V305.1H38V305.1H37V305.1H36V305.1H35V305.1H34V305.1H33V305.1H32V305.1H31V305.1H30V305.1H29V305.1H28V305.1H27V305.1H26V305.1H25V305.1H24V305.1H23V305.1H22V305.1H21V305.1H20V305.1H19V305.1H18V305.1H17V305.1H16V305.1H15V305.1H14V305.1H13V305.1H12V305.1H11V305.1H10V305.1H9V305.1H8V305.1H7V305.1H6V305.1H5V305.1H4V305.1H3V305.1H2Z" fill="#00bcbc"/>
<path d="M2,285.2H3V285.2H4V285.2H5V285.2H6V285.2H7V285.2H8V285.2H9V285.2H10V285.2H11V285.2H12V285.2H13V285.2H14V285.2H15V285.2H16V285.2H17V285.2H18V285.2H19V285.2H20V285.2H21V285.2H22V285.2H23V285.2H24V285.2H25V285.2H26V285.2H27V285.2H28V285.2H29V285.2H30V285.2H31V285.2H32V285.2H33V285.2H34V285.2H35V285.2H36V285.2H37V285.2H38V285.2H39V285.2H40V285.2H41V285.2H42V285.2H43V285.2H44V285.2H45V285.2H46V285.2H47V285.2H48V285.2H49V285.2H50V285.2H51V285.2H52V285.2H53V285.2H54V285.2H55V285.2H56V285.2H57V285.2H58V285.2H59V285.2H60V285.2H61V285.2H62V285.2H63V285.2H64V285.2H65V285.2H66V285.2H67V285.2H68V285.2H69V285.2H70V285.2H71V285.2H72V285.2H73V285.2H74V285.2H75V285.2H76V285.2H77V285.2H78V285.2H79V285.2H80V285.2H81V285.2H82V285.2H83V285.2H84V285.2H85V285.2H86V285.2H87V285.2H88V285.2H89V285.2H90V285.2H91V285.2H92V285.2H93V285.2H94V285.2H95V285.2H96V285.2H97V285.2H98V285.2H99V285.2H100V285.2H101V285.2H102V285.2H103V285.2H104V285.2H105V285.2H106V285.2H107V285.2H108V285.2H109V285.2H110V285.2H111V285.2H112V285.2H113V285.2H114V285.2H115V285.2H116V285.2H117V285.2H118V285.2H119V285.2H120V285.2H121V285.2H122V285.2H123V285.2H124V285.2H125V285.2H126V285.2H127V285.2H128V285.2H129V285.2H130V285.2H131V285.2H132V285.2H133V285.2H134V285.2H135V285.2H136V285.2H137V285.2H138V285.2H139V285.2H140V285.2H141V285.2H142V285.2H143V285.2H144V285.2H145V285.2H146V285.2H147V285.2H148V285.2H149V285.2H150V285.2H151V285.2H152V285.2H153V285.2H154V285.2H155V285.2H156V285.2H157V285.2H158V285.2H159V285.2H160V285.2H161V285.2H162V285.2H163V285.2H164V285.2H165V285.2H166V285.2H167V285.2H168V285.2H169V285.2H170V285.2H171V285.2H172V285.2H173V285.2H174V285.2H175V285.2H176V285.2H177V285.2H178V285.2H179V285.2H180V285.2H181V285.2H182V285.2H183V285.2H184V285.2H185V285.2H186V285.2H187V285.2H188V285.2H189V285.2H190V285.2H191V285.2H192V285.2H193V285.2H194V285.2H195V285.2H196V285.2H197V285.2H198V285.2H199V285.2H200V285.2H201V285.2H202V285.2H203V285.2H204V285.2H205V285.2H206V285.2H207V285.2H208V285.2H209V285.2H210V285.2H211V285.2H212V285.2H213V285.2H214V285.2H215V285.2H216V285.2H217V285.2H218V285.2H219V285.2H220V285.2H221V285.2H222V285.2H223V285.2H224V285.2H225V285.2H226V285.2H227V285.2H228V285.2H229V285.2H230V285.2H231V285.2H232V285.2H233V285.2H234V285.2H235V285.2H236V285.2H237V285.2H238V285.2H239V285.2H240V285.2H241V285.2H242V285.2H243V285.2H244V285.2H245V285.2H246V285.2H247V285.2H248V285.2H249V285.2H250V285.2H251V285.2H252V285.2H253V285.2H254V285.2H255V285.2H256V285.2H257V285.2H258V285.2H259V285.2H260V285.2H261V285.2H262V285.2H263V285.2H264V285.2H265V285.2H266V285.2H267V285.2H268V285.2H269V285.2H270V285.2H271V285.2H272V285.2H273V285.2H274V285.2H275V285.2H276V285.2H277V285.2H278V285.2H279V285.2H280V285.2H281V285.2H282V285.2H283V285.2H284V285.2H285V285.2H286V285.2H287V285.2H288V285.2H289V285.2H290V285.2H291V285.2H292V285.2H293V285.2H294V285.2H295V285.2H296V285.2H297V285.2H298V285.2H299V285.2H300V285.2H301V285.2H302V285.2H303V285.2H304V285.2H305V285.2H306V285.2H307V285.2H308V285.2H309V285.2H310V285.2H311V285.2H312V285.2H313V285.2H314V285.2H315V285.2H316V285.2H317V285.2H318V285.2H319V285.2H320V285.2H321V285.2H322V285.2H323V285.2H324V285.2H325V285.2H326V284.1H327V283.1H328V282.0H329V280.9H330V279.1H331V277.0H332V274.9H333V272.9H334V269.5H335V266.1H336V262.7H337V259.2H338V255.8H339V252.4H340V249.0H341V245.3H342V241.5H343V238.1H344V235.3H345V232.4H346V230.7H347V229.1H348V227.9H349V226.8H350V226.1H351V225.5H352V225.6H353V226.0H354V226.5H355V227.5H356V228.6H357V229.8H358V231.1H359V232.3H360V233.6H361V235.1H362V236.7H363V238.2H364V239.8H365V241.8H366V243.8H367V245.9H368V247.6H369V248.9H370V250.2H371V251.5H372V252.8H373V253.6H374V254.4H375V255.2H376V256.0H377V256.8H378V257.5H379V258.3H380V259.1H381V259.9H382V260.7H383V261.4H384V262.1H385V262.8H386V263.6H387V264.3H388V265.0H389V265.7H390V266.5H391V267.2H392V267.9H393V268.6H394V269.3H395V270.1H396V270.5H397V270.9H398V271.3H399V271.7H400V272.1H401V272.5H402V272.9H403V273.3H404V273.7H405V274.1H406V274.5H407V274.9H408V275.3H409V275.7H410V275.8H411V275.9H412V276.1H413V276.2H414V276.4H415V276.5H416V276.6H417V276.8H418V276.9H419V277.0H420V277.2H421V277.3H422V277.4H423V277.6H424V277.7H425V277.9H426V278.0H427V278.1H428V278.3H429V278.4H430V278.5H431V278.7H432V278.8H433V278.9H434V279.1H435V279.2H436V279.4H437V279.4H438V279.5H439V279.5H440V279.6H441V279.6H442V279.7H443V279.7H444V279.8H445V279.9H446V279.9H447V280.0H448V280.0H449V280.1H450V280.1H451V280.2H452V280.3H453V280.3H454V280.4H455V280.4H456V280.5H457V280.5H458V280.6H459V280.7H460V280.7H461V280.8H462V280.8H463V280.9H464V279.9H465V278.1H466V276.4H467V273.9H468V269.8H469V265.8H470V262.1H471V258.4H472V255.7H473V253.3H474V251.1H475V248.8H476V246.6H477V244.3H478V241.2H479V237.5H480V233.7H481V229.9H482V226.4H483V223.7H484V221.2H485V218.6H486V216.0H487V213.4H488V211.3H489V209.3H490V207.6H491V205.9H492V205.1H493V204.5H494V203.9H495V203.4H496V202.8H497V202.3H498V201.7H499V201.2H500V200.6H501V200.0H502V199.5H503V198.9H504V197.0H505V194.9H506V192.9H507V190.8H508V189.1H509V188.9H510V188.7H511V188.6H512V188.4H513V188.3H514V188.1H515V187.9H516V187.8H517V187.6H518V187.5H519V187.3H520V187.1H521V186.9H522V186.7H523V186.5H524V186.3H525V185.9H526V184.8H527V183.6H528V183.4H529V184.1H530V184.8H531V184.2H532V182.5H533V180.7H534V181.1H535V182.3H536V183.5H537V182.3H538V180.2H539V178.2H540V179.2H541V180.8H542V180.3H543V178.8H544V179.5H545V179.3H546V176.8H547V176.1H548V178.4H549V176.7H550V173.2H551V174.4H552V177.5H553V179.8H554V175.1H555V170.4H556V170.2H557V174.6H558V177.6H559V172.8H560V168.0H561V170.4H562V174.6H563V175.5H564V170.4H565V165.2H566V168.8H567V173.3H568V176.3H569V175.3H570V174.4H571V174.1H572V174.1H573V174.0H574V173.9H575V173.8H576V173.7H577V173.7H578V173.6H579V173.5H580V173.4H581V173.3H582V173.3H583V173.1H584V173.0H585V172.9H586V172.7H587V172.6H588V172.5H589V172.3H590V172.2H591V172.0H592V171.9H593V171.8H594V171.6H595V171.5H596V171.4H597V171.2H598V171.6H599V174.2H600V176.8H601V179.8H602V182.9H603V184.3H604V181.7H605V179.2H606V177.3H607V176.1H608V175.0H609V174.0H610V173.5H611V173.6H612V173.8H613V173.9H614V174.1H615V174.2H616V174.3H617V174.5H618V174.6H619V174.7H620V174.8H621V174.9H622V174.3H623V172.6H624V170.9H625V171.7H626V173.7H627V175.7H628V176.0H629V176.3H630V177.0H631V177.8H632V178.6H633V179.3H634V180.1H635V180.8H636V181.5H637V182.3H638V183.0H639V183.7H640V184.6H641V185.5H642V186.5H643V187.4H644V188.4H645V189.5H646V190.6H647V191.7H648V193.3H649V194.9H650V196.5H651V198.1H652V199.7H653V201.3H654V202.9H655V204.6H656V205.8H657V206.9H658V208.1H659V209.2H660V210.4H661V211.5H662V212.7H663V213.8H664V214.7H665V215.6H666V216.4H667V217.2H668V217.7H669V218.1H670V218.5H671V218.8H672V219.2H673V219.6H674V219.9H675V220.3H676V220.7H677V221.1H678V221.4H679V221.8H680V222.2H681V222.5H682V222.9H683V223.9H684V225.0H685V226.2H686V227.4H687V228.5H688V229.7H689V230.5H690V230.9H691V231.3H692V231.7H693V232.0H694V232.3H695V232.7H696V233.0H697V233.4H698V233.7H699V234.1H700V234.4H701V234.8H702V235.1H703V235.5H704V235.7H705V235.9H706V236.2H707V236.4H708V236.6H709V236.8H710V237.0H711V237.2H712V237.5H713V237.7H714V237.9H715V238.1H716V238.3H717V238.5H718V238.7H719V239.0H720V239.2H721V239.4H722V239.6H723V240.8H724V242.3H725V243.8H726V245.3H727V246.8H728V248.3H729V249.2H730V249.5H731V249.8H732V250.1H733V250.5H734V250.8H735V251.1H736V251.0H737V251.0H738V250.9H739V250.9H740V250.8H741V250.8H742V250.7H743V250.7H744V250.6H745V250.6H746V250.5H747V250.5H748V250.4H749V250.3H750V250.3H751V250.2H752V250.2H753V250.1H754V250.1H755V250.2H756V250.4H757V250.5H758V250.7H759V250.8H760V251.0H761V251.1H762V251.3H763V251.4H764V251.6H765V251.7H766V251.9H767V252.0H768V252.2H769V252.3H770V252.5H771V252.6H772V252.8H773V252.9H774V253.1H775V253.3H776V253.9H777V254.5H778V255.1H779V255.8H780V256.4H781V257.0H782V257.6H783V258.2H784V258.5H785V258.4H786V258.3H787V258.2H788V258.2H789V258.1H790V258.0H791V258.0H792V257.9H793V257.8H794V257.7H795V257.7H796V257.6H797V257.5H798V257.5H799V257.4H800V257.3H801V257.2H802V257.2H803V257.1H804V257.0H805V257.0H806V256.9H807V256.8H808V256.7H809V256.7H810V275.2V275.2H809V275.2H808V275.3H807V275.3H806V275.4H805V275.4H804V275.5H803V275.5H802V275.6H801V275.6H800V275.7H799V275.7H798V275.8H797V275.8H796V275.9H795V275.9H794V276.0H793V276.0H792V276.1H791V276.1H790V276.2H789V276.2H788V276.3H787V276.3H786V276.4H785V276.4H784V276.2H783V275.6H782V275.0H781V274.3H780V273.7H779V273.1H778V272.5H777V271.8H776V271.2H775V271.0H774V270.9H773V270.7H772V270.6H771V270.4H770V270.3H769V270.1H768V270.0H767V269.8H766V269.6H765V269.5H764V269.3H763V269.2H762V269.0H761V268.9H760V268.7H759V268.6H758V268.4H757V268.3H756V268.1H755V268.0H754V268.0H753V268.1H752V268.1H751V268.2H750V268.2H749V268.3H748V268.4H747V268.4H746V268.5H745V268.5H744V268.6H743V268.6H742V268.7H741V268.8H740V268.8H739V268.9H738V268.9H737V269.0H736V269.0H735V268.8H734V268.4H733V268.1H732V267.8H731V267.4H730V267.1H729V266.3H728V264.9H727V263.5H726V262.2H725V260.8H724V259.4H723V258.3H722V258.1H721V257.9H720V257.8H719V257.6H718V257.4H717V257.2H716V257.0H715V256.8H714V256.7H713V256.5H712V256.3H711V256.1H710V255.9H709V255.7H708V255.6H707V255.4H706V255.2H705V255.0H704V254.8H703V254.5H702V254.1H701V253.8H700V253.5H699V253.1H698V252.8H697V252.5H696V252.2H695V251.8H694V251.5H693V251.2H692V250.9H691V250.2H690V249.3H689V248.3H688V247.3H687V246.2H686V245.2H685V244.2H684V243.1H683V242.2H682V241.8H681V241.4H680V240.9H679V240.5H678V240.1H677V239.7H676V239.2H675V238.8H674V238.4H673V238.0H672V237.5H671V237.1H670V236.7H669V236.3H668V235.8H667V235.3H666V234.6H665V233.4H664V232.2H663V231.0H662V229.8H661V228.6H660V227.3H659V226.1H658V224.9H657V223.4H656V221.9H655V220.2H654V218.6H653V217.0H652V215.4H651V213.8H650V212.2H649V210.6H648V209.1H647V207.7H646V206.2H645V204.8H644V203.5H643V203.0H642V202.6H641V202.1H640V201.7H639V201.3H638V200.9H637V200.4H636V200.0H635V199.6H634V199.2H633V198.8H632V198.2H631V197.0H630V195.9H629V194.9H628V193.9H627V191.9H626V190.5H625V190.0H624V191.5H623V193.0H622V193.6H621V193.7H620V193.7H619V193.8H618V193.8H617V193.8H616V193.7H615V193.6H614V193.4H613V193.3H612V193.2H611V193.1H610V193.1H609V193.2H608V194.3H607V196.1H606V198.0H605V200.5H604V203.1H603V201.6H602V198.4H601V195.1H600V192.4H599V189.8H598V189.4H597V189.5H596V189.7H595V189.9H594V190.1H593V190.2H592V190.4H591V190.6H590V190.8H589V191.0H588V191.1H587V191.3H586V191.5H585V191.7H584V191.9H583V192.0H582V192.1H581V192.1H580V192.2H579V192.2H578V192.3H577V192.3H576V192.4H575V192.4H574V192.5H573V192.5H572V192.6H571V192.7H570V193.5H569V194.4H568V192.2H567V188.7H566V186.0H565V190.1H564V194.3H563V193.7H562V190.4H561V188.6H560V192.5H559V196.4H558V194.1H557V190.6H556V190.8H555V194.6H554V198.3H553V196.6H552V194.1H551V193.2H550V196.0H549V197.4H548V195.7H547V196.2H546V198.2H545V198.4H544V197.9H543V199.1H542V199.5H541V198.2H540V197.4H539V199.3H538V201.3H537V202.6H536V202.0H535V201.4H534V201.5H533V203.0H532V204.4H531V204.9H530V204.3H529V203.7H528V203.9H527V204.8H526V205.7H525V206.0H524V206.1H523V206.3H522V206.4H521V206.6H520V206.8H519V206.8H518V206.9H517V207.0H516V207.1H515V207.2H514V207.3H513V207.4H512V207.5H511V207.6H510V207.7H509V207.8H508V208.2H507V210.6H506V213.1H505V215.5H504V217.8H503V218.1H502V218.5H501V218.9H500V219.3H499V219.6H498V220.0H497V220.4H496V220.8H495V221.2H494V221.5H493V221.9H492V222.6H491V224.1H490V225.6H489V228.6H488V231.6H487V234.7H486V237.5H485V240.3H484V243.0H483V245.8H482V249.0H481V253.7H480V258.5H479V262.7H478V264.6H477V266.4H476V268.2H475V270.0H474V271.9H473V274.1H472V276.4H471V278.9H470V281.4H469V285.5H468V293.3H467V298.1H466V298.4H465V298.7H464V298.9H463V298.9H462V298.9H461V298.8H460V298.8H459V298.8H458V298.7H457V298.7H456V298.7H455V298.6H454V298.6H453V298.6H452V298.5H451V298.5H450V298.5H449V298.4H448V298.4H447V298.4H446V298.3H445V298.3H444V298.3H443V298.2H442V298.2H441V298.2H440V298.1H439V298.1H438V298.1H437V298.1H436V297.9H435V297.8H434V297.7H433V297.5H432V297.4H431V297.3H430V297.2H429V297.0H428V296.9H427V296.8H426V296.7H425V296.5H424V296.4H423V296.3H422V296.1H421V296.0H420V295.9H419V295.8H418V295.7H417V295.6H416V295.5H415V295.4H414V295.3H413V295.2H412V295.1H411V295.0H410V294.9H409V294.5H408V294.2H407V293.8H406V293.4H405V293.1H404V292.7H403V292.3H402V292.0H401V291.6H400V291.2H399V290.9H398V290.5H397V290.1H396V289.8H395V289.0H394V288.2H393V287.4H392V286.6H391V285.8H390V285.0H389V284.3H388V283.5H387V282.7H386V281.9H385V281.1H384V280.3H383V279.5H382V278.7H381V277.9H380V277.1H379V276.3H378V275.5H377V274.7H376V273.9H375V273.1H374V272.1H373V271.1H372V270.0H371V268.9H370V267.8H369V266.4H368V264.9H367V263.3H366V261.7H365V260.1H364V258.6H363V257.0H362V255.3H361V253.7H360V252.1H359V250.7H358V249.2H357V247.8H356V246.5H355V245.5H354V244.7H353V243.9H352V243.6H351V245.4H350V247.2H349V249.2H348V251.4H347V253.8H346V256.2H345V259.0H344V261.9H343V264.8H342V267.7H341V270.6H340V273.4H339V276.6H338V279.8H337V283.0H336V286.2H335V288.9H334V291.6H333V294.0H332V296.4H331V298.8H330V299.8H329V300.7H328V301.5H327V302.4H326V303.2H325V303.2H324V303.2H323V303.2H322V303.2H321V303.2H320V303.2H319V303.2H318V303.2H317V303.2H316V303.2H315V303.2H314V303.2H313V303.2H312V303.2H311V303.2H310V303.2H309V303.2H308V303.2H307V303.2H306V303.2H305V303.2H304V303.2H303V303.2H302V303.2H301V303.2H300V303.2H299V303.2H298V303.2H297V303.2H296V303.2H295V303.2H294V303.2H293V303.2H292V303.2H291V303.2H290V303.2H289V303.2H288V303.2H287V303.2H286V303.2H285V303.2H284V303.2H283V303.2H282V303.2H281V303.2H280V303.2H279V303.2H278V303.2H277V303.2H276V303.2H275V303.2H274V303.2H273V303.2H272V303.2H271V303.2H270V303.2H269V303.2H268V303.2H267V303.2H266V303.2H265V303.2H264V303.2H263V303.2H262V303.2H261V303.2H260V303.2H259V303.2H258V303.2H257V303.2H256V303.2H255V303.2H254V303.2H253V303.2H252V303.2H251V303.2H250V303.2H249V303.2H248V303.2H247V303.2H246V303.2H245V303.2H244V303.2H243V303.2H242V303.2H241V303.2H240V303.2H239V303.2H238V303.2H237V303.2H236V303.2H235V303.2H234V303.2H233V303.2H232V303.2H231V303.2H230V303.2H229V303.2H228V303.2H227V303.2H226V303.2H225V303.2H224V303.2H223V303.2H222V303.2H221V303.2H220V303.2H219V303.2H218V303.2H217V303.2H216V303.2H215V303.2H214V303.2H213V303.2H212V303.2H211V303.2H210V303.2H209V303.2H208V303.2H207V303.2H206V303.2H205V303.2H204V303.2H203V303.2H202V303.2H201V303.2H200V303.2H199V303.2H198V303.2H197V303.2H196V303.2H195V303.2H194V303.2H193V303.2H192V303.2H191V303.2H190V303.2H189V303.2H188V303.2H187V303.2H186V303.2H185V303.2H184V303.2H183V303.2H182V303.2H181V303.2H180V303.2H179V303.2H178V303.2H177V303.2H176V303.2H175V303.2H174V303.2H173V303.2H172V303.2H171V303.2H170V303.2H169V303.2H168V303.2H167V303.2H166V303.2H165V303.2H164V303.2H163V303.2H162V303.2H161V303.2H160V303.2H159V303.2H158V303.2H157V303.2H156V303.2H155V303.2H154V303.2H153V303.2H152V303.2H151V303.2H150V303.2H149V303.2H148V303.2H147V303.2H146V303.2H145V303.2H144V303.2H143V303.2H142V303.2H141V303.2H140V303.2H139V303.2H138V303.2H137V303.2H136V303.2H135V303.2H134V303.2H133V303.2H132V303.2H131V303.2H130V303.2H129V303.2H128V303.2H127V303.2H126V303.2H125V303.2H124V303.2H123V303.2H122V303.2H121V303.2H120V303.2H119V303.2H118V303.2H117V303.2H116V303.2H115V303.2H114V303.2H113V303.2H112V303.2H111V303.2H110V303.2H109V303.2H108V303.2H107V303.2H106V303.2H105V303.2H104V303.2H103V303.2H102V303.2H101V303.2H100V303.2H99V303.2H98V303.2H97V303.2H96V303.2H95V303.2H94V303.2H93V303.2H92V303.2H91V303.2H90V303.2H89V303.2H88V303.2H87V303.2H86V303.2H85V303.2H84V303.2H83V303.2H82V303.2H81V303.2H80V303.2H79V303.2H78V303.2H77V303.2H76V303.2H75V303.2H74V303.2H73V303.2H72V303.2H71V303.2H70V303.2H69V303.2H68V303.2H67V303.2H66V303.2H65V303.2H64V303.2H63V303.2H62V303.2H61V303.2H60V303.2H59V303.2H58V303.2H57V303.2H56V303.2H55V303.2H54V303.2H53V303.2H52V303.2H51V303.2H50V303.2H49V303.2H48V303.2H47V303.2H46V303.2H45V303.2H44V303.2H43V303.2H42V303.2H41V303.2H40V303.2H39V303.2H38V303.2H37V303.2H36V303.2H35V303.2H34V303.2H33V303.2H32V303.2H31V303.2H30V303.2H29V303.2H28V303.2H27V303.2H26V303.2H25V303.2H24V303.2H23V303.2H22V303.2H21V303.2H20V303.2H19V303.2H18V303.2H17V303.2H16V303.2H15V303.2H14V303.2H13V303.2H12V303.2H11V303.2H10V303.2H9V303.2H8V303.2H7V303.2H6V303.2H5V303.2H4V303.2H3V303.2H2Z" fill="#00dcdc"/>
<path d="M2,286.5H3V286.5H4V286.5H5V286.5H6V286.5H7V286.5H8V286.5H9V286.5H10V286.5H11V286.5H12V286.5H13V286.5H14V286.5H15V286.5H16V286.5H17V286.5H18V286.5H19V286.5H20V286.5H21V286.5H22V286.5H23V286.5H24V286.5H25V286.5H26V286.5H27V286.5H28V286.5H29V286.5H30V286.5H31V286.5H32V286.5H33V286.5H34V286.5H35V286.5H36V286.5H37V286.5H38V286.5H39V286.5H40V286.5H41V286.5H42V286.5H43V286.5H44V286.5H45V286.5H46V286.5H47V286.5H48V286.5H49V286.5H50V286.5H51V286.5H52V286.5H53V286.5H54V286.5H55V286.5H56V286.5H57V286.5H58V286.5H59V286.5H60V286.5H61V286.5H62V286.5H63V286.5H64V286.5H65V286.5H66V286.5H67V286.5H68V286.5H69V286.5H70V286.5H71V286.5H72V286.5H73V286.5H74V286.5H75V286.5H76V286.5H77V286.5H78V286.5H79V286.5H80V286.5H81V286.5H82V286.5H83V286.5H84V286.5H85V286.5H86V286.5H87V286.5H88V286.5H89V286.5H90V286.5H91V286.5H92V286.5H93V286.5H94V286.5H95V286.5H96V286.5H97V286.5H98V286.5H99V286.5H100V286.5H101V286.5H102V286.5H103V286.5H104V286.5H105V286.5H106V286.5H107V286.5H108V286.5H109V286.5H110V286.5H111V286.5H112V286.5H113V286.5H114V286.5H115V286.5H116V286.5H117V286.5H118V286.5H119V286.5H120V286.5H121V286.5H122V286.5H123V286.5H124V286.5H125V286.5H126V286.5H127V286.5H128V286.5H129V286.5H130V286.5H131V286.5H132V286.5H133V286.5H134V286.5H135V286.5H136V286.5H137V286.5H138V286.5H139V286.5H140V286.5H141V286.5H142V286.5H143V286.5H144V286.5H145V286.5H146V286.5H147V286.5H148V286.5H149V286.5H150V286.5H151V286.5H152V286.5H153V286.5H154V286.5H155V286.5H156V286.5H157V286.5H158V286.5H159V286.5H160V286.5H161V286.5H162V286.5H163V286.5H164V286.5H165V286.5H166V286.5H167V286.5H168V286.5H169V286.5H170V286.5H171V286.5H172V286.5H173V286.5H174V286.5H175V286.5H176V286.5H177V286.5H178V286.5H179V286.5H180V286.5H181V286.5H182V286.5H183V286.5H184V286.5H185V286.5H186V286.5H187V286.5H188V286.5H189V286.5H190V286.5H191V286.5H192V286.5H193V286.5H194V286.5H195V286.5H196V286.5H197V286.5H198V286.5H199V286.5H200V286.5H201V286.5H202V286.5H203V286.5H204V286.5H205V286.5H206V286.5H207V286.5H208V286.5H209V286.5H210V286.5H211V286.5H212V286.5H213V286.5H214V286.5H215V286.5H216V286.5H217V286.5H218V286.5H219V286.5H220V286.5H221V286.5H222V286.5H223V286.5H224V286.5H225V286.5H226V286.5H227V286.5H228V286.5H229V286.5H230V286.5H231V286.5H232V286.5H233V286.5H234V286.5H235V286.5H236V286.5H237V286.5H238V286.5H239V286.5H240V286.5H241V286.5H242V286.5H243V286.5H244V286.5H245V286.5H246V286.5H247V286.5H248V286.5H249V286.5H250V286.5H251V286.5H252V286.5H253V286.5H254V286.5H255V286.5H256V286.5H257V286.5H258V286.5H259V286.5H260V286.5H261V286.5H262V286.5H263V286.5H264V286.5H265V286.5H266V286.5H267V286.5H268V286.5H269V286.5H270V286.5H271V286.5H272V286.5H273V286.5H274V286.5H275V286.5H276V286.5H277V286.5H278V286.5H279V286.5H280V286.5H281V286.5H282V286.5H283V286.5H284V286.5H285V286.5H286V286.5H287V286.5H288V286.5H289V286.5H290V286.5H291V286.5H292V286.5H293V286.5H294V286.5H295V286.5H296V286.5H297V286.5H298V286.5H299V286.5H300V286.5H301V286.5H302V286.5H303V286.5H304V286.5H305V286.5H306V286.5H307V286.5H308V286.5H309V286.5H310V286.5H311V286.5H312V286.5H313V286.5H314V286.5H315V286.5H316V286.5H317V286.5H318V286.5H319V286.5H320V286.5H321V286.5H322V286.5H323V286.5H324V286.5H325V286.5H326V285.5H327V284.4H328V283.3H329V282.3H330V280.5H331V278.4H332V276.3H333V274.2H334V270.9H335V267.6H336V264.2H337V260.7H338V257.3H339V253.9H340V250.6H341V246.9H342V243.2H343V239.9H344V237.0H345V234.2H346V232.4H347V230.7H348V229.5H349V228.3H350V227.5H351V226.8H352V226.9H353V227.4H354V227.9H355V228.9H356V230.0H357V231.2H358V232.5H359V233.8H360V235.1H361V236.6H362V238.1H363V239.7H364V241.3H365V243.3H366V245.3H367V247.3H368V248.9H369V250.3H370V251.6H371V252.8H372V254.1H373V254.9H374V255.8H375V256.6H376V257.3H377V258.1H378V258.9H379V259.7H380V260.5H381V261.3H382V262.1H383V262.8H384V263.5H385V264.2H386V265.0H387V265.7H388V266.4H389V267.1H390V267.9H391V268.6H392V269.3H393V270.1H394V270.8H395V271.5H396V271.9H397V272.3H398V272.7H399V273.1H400V273.5H401V273.9H402V274.3H403V274.7H404V275.1H405V275.5H406V275.9H407V276.3H408V276.7H409V277.1H410V277.2H411V277.3H412V277.5H413V277.6H414V277.8H415V277.9H416V278.0H417V278.2H418V278.3H419V278.4H420V278.6H421V278.7H422V278.8H423V279.0H424V279.1H425V279.2H426V279.4H427V279.5H428V279.6H429V279.8H430V279.9H431V280.0H432V280.2H433V280.3H434V280.5H435V280.6H436V280.7H437V280.8H438V280.8H439V280.9H440V280.9H441V281.0H442V281.1H443V281.1H444V281.2H445V281.2H446V281.3H447V281.3H448V281.4H449V281.4H450V281.5H451V281.6H452V281.6H453V281.7H454V281.7H455V281.8H456V281.8H457V281.9H458V281.9H459V282.0H460V282.1H461V282.1H462V282.2H463V282.2H464V281.3H465V279.6H466V278.0H467V275.3H468V270.9H469V266.9H470V263.3H471V259.7H472V257.0H473V254.7H474V252.5H475V250.3H476V248.1H477V245.8H478V242.8H479V239.1H480V235.2H481V231.3H482V227.8H483V225.1H484V222.6H485V220.0H486V217.4H487V214.7H488V212.5H489V210.5H490V208.8H491V207.2H492V206.3H493V205.8H494V205.2H495V204.7H496V204.1H497V203.6H498V203.0H499V202.5H500V201.9H501V201.4H502V200.9H503V200.3H504V198.4H505V196.3H506V194.2H507V192.1H508V190.4H509V190.3H510V190.1H511V190.0H512V189.8H513V189.7H514V189.5H515V189.4H516V189.2H517V189.0H518V188.9H519V188.7H520V188.5H521V188.3H522V188.1H523V187.9H524V187.7H525V187.3H526V186.2H527V185.1H528V184.9H529V185.6H530V186.3H531V185.7H532V184.0H533V182.3H534V182.6H535V183.7H536V184.9H537V183.7H538V181.6H539V179.6H540V180.5H541V182.2H542V181.7H543V180.2H544V180.9H545V180.7H546V178.2H547V177.6H548V179.8H549V178.1H550V174.7H551V175.8H552V178.9H553V181.1H554V176.5H555V171.9H556V171.7H557V176.0H558V179.0H559V174.2H560V169.5H561V171.9H562V176.0H563V176.9H564V171.8H565V166.8H566V170.3H567V174.7H568V177.6H569V176.6H570V175.7H571V175.5H572V175.4H573V175.3H574V175.3H575V175.2H576V175.1H577V175.0H578V175.0H579V174.9H580V174.8H581V174.7H582V174.6H583V174.5H584V174.4H585V174.2H586V174.1H587V174.0H588V173.8H589V173.7H590V173.5H591V173.4H592V173.3H593V173.1H594V173.0H595V172.8H596V172.7H597V172.6H598V173.0H599V175.6H600V178.1H601V181.2H602V184.3H603V185.7H604V183.1H605V180.6H606V178.7H607V177.4H608V176.3H609V175.4H610V174.9H611V175.1H612V175.2H613V175.3H614V175.5H615V175.6H616V175.8H617V175.9H618V176.0H619V176.1H620V176.2H621V176.3H622V175.7H623V174.0H624V172.3H625V173.1H626V175.0H627V177.0H628V177.4H629V177.7H630V178.5H631V179.3H632V180.1H633V180.8H634V181.5H635V182.2H636V182.9H637V183.6H638V184.3H639V185.1H640V185.9H641V186.8H642V187.7H643V188.6H644V189.6H645V190.7H646V191.9H647V193.0H648V194.6H649V196.2H650V197.8H651V199.4H652V201.0H653V202.6H654V204.2H655V205.8H656V207.1H657V208.3H658V209.4H659V210.6H660V211.7H661V212.9H662V214.0H663V215.1H664V216.1H665V217.0H666V217.8H667V218.6H668V219.1H669V219.5H670V219.8H671V220.2H672V220.6H673V221.0H674V221.3H675V221.7H676V222.1H677V222.5H678V222.8H679V223.2H680V223.6H681V223.9H682V224.3H683V225.3H684V226.5H685V227.6H686V228.7H687V229.9H688V231.0H689V231.8H690V232.3H691V232.7H692V233.1H693V233.4H694V233.8H695V234.1H696V234.5H697V234.8H698V235.2H699V235.5H700V235.9H701V236.2H702V236.5H703V236.9H704V237.1H705V237.4H706V237.6H707V237.8H708V238.0H709V238.2H710V238.4H711V238.6H712V238.9H713V239.1H714V239.3H715V239.5H716V239.7H717V239.9H718V240.1H719V240.3H720V240.6H721V240.8H722V241.0H723V242.2H724V243.7H725V245.2H726V246.6H727V248.1H728V249.6H729V250.5H730V250.8H731V251.1H732V251.5H733V251.8H734V252.1H735V252.4H736V252.4H737V252.3H738V252.2H739V252.2H740V252.1H741V252.1H742V252.0H743V252.0H744V251.9H745V251.9H746V251.8H747V251.8H748V251.7H749V251.7H750V251.6H751V251.6H752V251.5H753V251.4H754V251.4H755V251.6H756V251.7H757V251.9H758V252.0H759V252.2H760V252.3H761V252.5H762V252.6H763V252.7H764V252.9H765V253.0H766V253.2H767V253.3H768V253.5H769V253.6H770V253.8H771V253.9H772V254.1H773V254.2H774V254.4H775V254.6H776V255.2H777V255.8H778V256.4H779V257.1H780V257.7H781V258.3H782V258.9H783V259.6H784V259.8H785V259.7H786V259.6H787V259.6H788V259.5H789V259.4H790V259.4H791V259.3H792V259.2H793V259.1H794V259.1H795V259.0H796V258.9H797V258.9H798V258.8H799V258.7H800V258.7H801V258.6H802V258.5H803V258.4H804V258.4H805V258.3H806V258.2H807V258.2H808V258.1H809V258.0H810V273.0V273.0H809V273.1H808V273.1H807V273.2H806V273.2H805V273.3H804V273.3H803V273.4H802V273.4H801V273.5H800V273.5H799V273.6H798V273.6H797V273.7H796V273.7H795V273.8H794V273.8H793V273.9H792V273.9H791V274.0H790V274.0H789V274.1H788V274.1H787V274.2H786V274.3H785V274.3H784V274.1H783V273.5H782V272.8H781V272.2H780V271.6H779V271.0H778V270.3H777V269.7H776V269.1H775V268.9H774V268.7H773V268.6H772V268.4H771V268.3H770V268.1H769V268.0H768V267.8H767V267.7H766V267.5H765V267.4H764V267.2H763V267.1H762V266.9H761V266.8H760V266.6H759V266.5H758V266.3H757V266.2H756V266.0H755V265.9H754V265.9H753V266.0H752V266.0H751V266.1H750V266.1H749V266.2H748V266.3H747V266.3H746V266.4H745V266.4H744V266.5H743V266.5H742V266.6H741V266.6H740V266.7H739V266.8H738V266.8H737V266.9H736V266.9H735V266.6H734V266.3H733V266.0H732V265.7H731V265.3H730V265.0H729V264.1H728V262.8H727V261.4H726V260.0H725V258.6H724V257.3H723V256.1H722V255.9H721V255.7H720V255.6H719V255.4H718V255.2H717V255.0H716V254.8H715V254.6H714V254.4H713V254.2H712V254.1H711V253.9H710V253.7H709V253.5H708V253.3H707V253.1H706V252.9H705V252.7H704V252.5H703V252.2H702V251.9H701V251.5H700V251.2H699V250.9H698V250.5H697V250.2H696V249.9H695V249.5H694V249.2H693V248.9H692V248.6H691V247.9H690V247.1H689V246.1H688V245.1H687V244.0H686V243.0H685V241.9H684V240.9H683V239.9H682V239.5H681V239.1H680V238.7H679V238.3H678V237.8H677V237.4H676V237.0H675V236.6H674V236.2H673V235.8H672V235.3H671V234.9H670V234.5H669V234.1H668V233.6H667V233.1H666V232.4H665V231.2H664V230.1H663V228.9H662V227.6H661V226.4H660V225.2H659V224.0H658V222.8H657V221.3H656V219.8H655V218.2H654V216.6H653V215.0H652V213.4H651V211.8H650V210.2H649V208.6H648V207.0H647V205.7H646V204.3H645V202.9H644V201.6H643V201.1H642V200.6H641V200.1H640V199.6H639V199.1H638V198.7H637V198.2H636V197.8H635V197.3H634V196.9H633V196.4H632V195.8H631V194.7H630V193.6H629V192.7H628V191.8H627V189.7H626V188.3H625V187.7H624V189.3H623V190.8H622V191.4H621V191.4H620V191.5H619V191.5H618V191.5H617V191.5H616V191.4H615V191.3H614V191.1H613V191.0H612V190.9H611V190.8H610V190.9H609V191.1H608V192.2H607V193.9H606V195.8H605V198.3H604V200.9H603V199.4H602V196.2H601V193.0H600V190.3H599V187.6H598V187.2H597V187.4H596V187.6H595V187.7H594V187.9H593V188.1H592V188.3H591V188.4H590V188.6H589V188.8H588V189.0H587V189.1H586V189.3H585V189.5H584V189.7H583V189.8H582V189.9H581V189.9H580V190.0H579V190.0H578V190.1H577V190.1H576V190.2H575V190.2H574V190.3H573V190.4H572V190.4H571V190.5H570V191.4H569V192.2H568V190.0H567V186.3H566V183.5H565V187.8H564V192.1H563V191.4H562V188.1H561V186.2H560V190.2H559V194.2H558V191.8H557V188.2H556V188.4H555V192.3H554V196.1H553V194.3H552V191.8H551V190.9H550V193.8H549V195.2H548V193.4H547V193.9H546V196.0H545V196.2H544V195.6H543V196.8H542V197.3H541V195.9H540V195.2H539V197.0H538V199.1H537V200.4H536V199.7H535V199.0H534V199.1H533V200.6H532V202.0H531V202.5H530V201.9H529V201.4H528V201.5H527V202.4H526V203.3H525V203.6H524V203.8H523V204.0H522V204.1H521V204.3H520V204.5H519V204.6H518V204.7H517V204.8H516V204.9H515V205.0H514V205.1H513V205.2H512V205.3H511V205.4H510V205.5H509V205.6H508V206.1H507V208.5H506V210.9H505V213.3H504V215.5H503V215.9H502V216.3H501V216.7H500V217.1H499V217.5H498V217.9H497V218.3H496V218.7H495V219.1H494V219.5H493V219.9H492V220.7H491V222.2H490V223.7H489V226.5H488V229.5H487V232.5H486V235.3H485V238.0H484V240.8H483V243.5H482V246.7H481V251.4H480V256.0H479V260.1H478V262.2H477V264.1H476V265.9H475V267.8H474V269.7H473V272.0H472V274.3H471V276.9H470V279.5H469V283.6H468V291.1H467V295.5H466V296.0H465V296.5H464V296.8H463V296.8H462V296.7H461V296.7H460V296.7H459V296.6H458V296.6H457V296.6H456V296.5H455V296.5H454V296.5H453V296.4H452V296.4H451V296.3H450V296.3H449V296.3H448V296.2H447V296.2H446V296.2H445V296.1H444V296.1H443V296.1H442V296.0H441V296.0H440V296.0H439V295.9H438V295.9H437V295.9H436V295.7H435V295.6H434V295.5H433V295.3H432V295.2H431V295.1H430V295.0H429V294.8H428V294.7H427V294.6H426V294.4H425V294.3H424V294.2H423V294.1H422V293.9H421V293.8H420V293.7H419V293.6H418V293.5H417V293.4H416V293.3H415V293.2H414V293.1H413V293.0H412V292.9H411V292.7H410V292.6H409V292.3H408V291.9H407V291.5H406V291.2H405V290.8H404V290.4H403V290.1H402V289.7H401V289.3H400V288.9H399V288.6H398V288.2H397V287.8H396V287.5H395V286.7H394V285.9H393V285.1H392V284.3H391V283.6H390V282.8H389V282.0H388V281.2H387V280.4H386V279.6H385V278.9H384V278.1H383V277.3H382V276.5H381V275.7H380V274.9H379V274.1H378V273.3H377V272.5H376V271.7H375V270.9H374V269.9H373V268.9H372V267.8H371V266.7H370V265.6H369V264.2H368V262.7H367V261.0H366V259.4H365V257.7H364V256.2H363V254.6H362V252.9H361V251.3H360V249.8H359V248.3H358V247.0H357V245.6H356V244.2H355V243.2H354V242.5H353V241.7H352V241.5H351V243.1H350V244.8H349V246.7H348V248.8H347V251.1H346V253.4H345V256.2H344V259.1H343V262.1H342V265.1H341V268.1H340V271.0H339V274.2H338V277.4H337V280.6H336V283.8H335V286.6H334V289.4H333V291.7H332V294.1H331V296.5H330V297.6H329V298.5H328V299.3H327V300.2H326V301.1H325V301.1H324V301.1H323V301.1H322V301.1H321V301.1H320V301.1H319V301.1H318V301.1H317V301.1H316V301.1H315V301.1H314V301.1H313V301.1H312V301.1H311V301.1H310V301.1H309V301.1H308V301.1H307V301.1H306V301.1H305V301.1H304V301.1H303V301.1H302V301.1H301V301.1H300V301.1H299V301.1H298V301.1H297V301.1H296V301.1H295V301.1H294V301.1H293V301.1H292V301.1H291V301.1H290V301.1H289V301.1H288V301.1H287V301.1H286V301.1H285V301.1H284V301.1H283V301.1H282V301.1H281V301.1H280V301.1H279V301.1H278V301.1H277V301.1H276V301.1H275V301.1H274V301.1H273V301.1H272V301.1H271V301.1H270V301.1H269V301.1H268V301.1H267V301.1H266V301.1H265V301.1H264V301.1H263V301.1H262V301.1H261V301.1H260V301.1H259V301.1H258V301.1H257V301.1H256V301.1H255V301.1H254V301.1H253V301.1H252V301.1H251V301.1H250V301.1H249V301.1H248V301.1H247V301.1H246V301.1H245V301.1H244V301.1H243V301.1H242V301.1H241V301.1H240V301.1H239V301.1H238V301.1H237V301.1H236V301.1H235V301.1H234V301.1H233V301.1H232V301.1H231V301.1H230V301.1H229V301.1H228V301.1H227V301.1H226V301.1H225V301.1H224V301.1H223V301.1H222V301.1H221V301.1H220V301.1H219V301.1H218V301.1H217V301.1H216V301.1H215V301.1H214V301.1H213V301.1H212V301.1H211V301.1H210V301.1H209V301.1H208V301.1H207V301.1H206V301.1H205V301.1H204V301.1H203V301.1H202V301.1H201V301.1H200V301.1H199V301.1H198V301.1H197V301.1H196V301.1H195V301.1H194V301.1H193V301.1H192V301.1H191V301.1H190V301.1H189V301.1H188V301.1H187V301.1H186V301.1H185V301.1H184V301.1H183V301.1H182V301.1H181V301.1H180V301.1H179V301.1H178V301.1H177V301.1H176V301.1H175V301.1H174V301.1H173V301.1H172V301.1H171V301.1H170V301.1H169V301.1H168V301.1H167V301.1H166V301.1H165V301.1H164V301.1H163V301.1H162V301.1H161V301.1H160V301.1H159V301.1H158V301.1H157V301.1H156V301.1H155V301.1H154V301.1H153V301.1H152V301.1H151V301.1H150V301.1H149V301.1H148V301.1H147V301.1H146V301.1H145V301.1H144V301.1H143V301.1H142V301.1H141V301.1H140V301.1H139V301.1H138V301.1H137V301.1H136V301.1H135V301.1H134V301.1H133V301.1H132V301.1H131V301.1H130V301.1H129V301.1H128V301.1H127V301.1H126V301.1H125V301.1H124V301.1H123V301.1H122V301.1H121V301.1H120V301.1H119V301.1H118V301.1H117V301.1H116V301.1H115V301.1H114V301.1H113V301.1H112V301.1H111V301.1H110V301.1H109V301.1H108V301.1H107V301.1H106V301.1H105V301.1H104V301.1H103V301.1H102V301.1H101V301.1H100V301.1H99V301.1H98V301.1H97V301.1H96V301.1H95V301.1H94V301.1H93V301.1H92V301.1H91V301.1H90V301.1H89V301.1H88V301.1H87V301.1H86V301.1H85V301.1H84V301.1H83V301.1H82V301.1H81V301.1H80V301.1H79V301.1H78V301.1H77V301.1H76V301.1H75V301.1H74V301.1H73V301.1H72V301.1H71V301.1H70V301.1H69V301.1H68V301.1H67V301.1H66V301.1H65V301.1H64V301.1H63V301.1H62V301.1H61V301.1H60V301.1H59V301.1H58V301.1H57V301.1H56V301.1H55V301.1H54V301.1H53V301.1H52V301.1H51V301.1H50V301.1H49V301.1H48V301.1H47V301.1H46V301.1H45V301.1H44V301.1H43V301.1H42V301.1H41V301.1H40V301.1H39V301.1H38V301.1H37V301.1H36V301.1H35V301.1H34V301.1H33V301.1H32V301.1H31V301.1H30V301.1H29V301.1H28V301.1H27V301.1H26V301.1H25V301.1H24V301.1H23V301.1H22V301.1H21V301.1H20V301.1H19V301.1H18V301.1H17V301.1H16V301.1H15V301.1H14V301.1H13V301.1H12V301.1H11V301.1H10V301.1H9V301.1H8V301.1H7V301.1H6V301.1H5V301.1H4V301.1H3V301.1H2Z" fill="#00f6f6"/>
</g>
<rect x="617.0" y="141.5" width="1.2" height="73" fill="#000" opacity="0.7"/>
<rect x="623.6" y="140" width="1.1" height="73" fill="#000" opacity="0.6"/>
<g opacity="0.60">
<path d="M82.1,9.8h1.8v1.1h-1.8zM82.1,16.6h1.8v1.1h-1.8zM82.1,23.4h1.8v1.1h-1.8zM82.1,30.2h1.8v1.1h-1.8zM82.1,37.0h1.8v1.1h-1.8zM82.1,43.7h1.8v1.1h-1.8zM82.1,50.5h1.8v1.1h-1.8zM82.1,57.3h1.8v1.1h-1.8zM82.1,64.1h1.8v1.1h-1.8zM82.1,70.8h1.8v1.1h-1.8zM82.1,77.6h1.8v1.1h-1.8zM82.1,84.4h1.8v1.1h-1.8zM82.1,91.2h1.8v1.1h-1.8zM82.1,98.0h1.8v1.1h-1.8zM82.1,104.8h1.8v1.1h-1.8zM82.1,111.5h1.8v1.1h-1.8zM82.1,118.3h1.8v1.1h-1.8zM82.1,125.1h1.8v1.1h-1.8zM82.1,131.9h1.8v1.1h-1.8zM82.1,138.6h1.8v1.1h-1.8zM82.1,145.4h1.8v1.1h-1.8zM82.1,152.2h1.8v1.1h-1.8zM82.1,159.0h1.8v1.1h-1.8zM82.1,165.8h1.8v1.1h-1.8zM82.1,172.5h1.8v1.1h-1.8zM82.1,179.3h1.8v1.1h-1.8zM82.1,186.1h1.8v1.1h-1.8zM82.1,192.9h1.8v1.1h-1.8zM82.1,199.7h1.8v1.1h-1.8zM82.1,206.4h1.8v1.1h-1.8zM82.1,213.2h1.8v1.1h-1.8zM82.1,220.0h1.8v1.1h-1.8zM82.1,226.8h1.8v1.1h-1.8zM82.1,233.6h1.8v1.1h-1.8zM82.1,240.3h1.8v1.1h-1.8zM82.1,247.1h1.8v1.1h-1.8zM82.1,253.9h1.8v1.1h-1.8zM82.1,260.7h1.8v1.1h-1.8zM82.1,267.5h1.8v1.1h-1.8zM82.1,274.2h1.8v1.1h-1.8zM82.1,281.0h1.8v1.1h-1.8zM82.1,287.8h1.8v1.1h-1.8zM82.1,294.6h1.8v1.1h-1.8zM82.1,301.4h1.8v1.1h-1.8zM82.1,308.2h1.8v1.1h-1.8zM82.1,314.9h1.8v1.1h-1.8zM82.1,321.7h1.8v1.1h-1.8zM82.1,328.5h1.8v1.1h-1.8zM82.1,335.3h1.8v1.1h-1.8zM162.8,9.8h1.8v1.1h-1.8zM162.8,16.6h1.8v1.1h-1.8zM162.8,23.4h1.8v1.1h-1.8zM162.8,30.2h1.8v1.1h-1.8zM162.8,37.0h1.8v1.1h-1.8zM162.8,43.7h1.8v1.1h-1.8zM162.8,50.5h1.8v1.1h-1.8zM162.8,57.3h1.8v1.1h-1.8zM162.8,64.1h1.8v1.1h-1.8zM162.8,70.8h1.8v1.1h-1.8zM162.8,77.6h1.8v1.1h-1.8zM162.8,84.4h1.8v1.1h-1.8zM162.8,91.2h1.8v1.1h-1.8zM162.8,98.0h1.8v1.1h-1.8zM162.8,104.8h1.8v1.1h-1.8zM162.8,111.5h1.8v1.1h-1.8zM162.8,118.3h1.8v1.1h-1.8zM162.8,125.1h1.8v1.1h-1.8zM162.8,131.9h1.8v1.1h-1.8zM162.8,138.6h1.8v1.1h-1.8zM162.8,145.4h1.8v1.1h-1.8zM162.8,152.2h1.8v1.1h-1.8zM162.8,159.0h1.8v1.1h-1.8zM162.8,165.8h1.8v1.1h-1.8zM162.8,172.5h1.8v1.1h-1.8zM162.8,179.3h1.8v1.1h-1.8zM162.8,186.1h1.8v1.1h-1.8zM162.8,192.9h1.8v1.1h-1.8zM162.8,199.7h1.8v1.1h-1.8zM162.8,206.4h1.8v1.1h-1.8zM162.8,213.2h1.8v1.1h-1.8zM162.8,220.0h1.8v1.1h-1.8zM162.8,226.8h1.8v1.1h-1.8zM162.8,233.6h1.8v1.1h-1.8zM162.8,240.3h1.8v1.1h-1.8zM162.8,247.1h1.8v1.1h-1.8zM162.8,253.9h1.8v1.1h-1.8zM162.8,260.7h1.8v1.1h-1.8zM162.8,267.5h1.8v1.1h-1.8zM162.8,274.2h1.8v1.1h-1.8zM162.8,281.0h1.8v1.1h-1.8zM162.8,287.8h1.8v1.1h-1.8zM162.8,294.6h1.8v1.1h-1.8zM162.8,301.4h1.8v1.1h-1.8zM162.8,308.2h1.8v1.1h-1.8zM162.8,314.9h1.8v1.1h-1.8zM162.8,321.7h1.8v1.1h-1.8zM162.8,328.5h1.8v1.1h-1.8zM162.8,335.3h1.8v1.1h-1.8zM243.5,9.8h1.8v1.1h-1.8zM243.5,16.6h1.8v1.1h-1.8zM243.5,23.4h1.8v1.1h-1.8zM243.5,30.2h1.8v1.1h-1.8zM243.5,37.0h1.8v1.1h-1.8zM243.5,43.7h1.8v1.1h-1.8zM243.5,50.5h1.8v1.1h-1.8zM243.5,57.3h1.8v1.1h-1.8zM243.5,64.1h1.8v1.1h-1.8zM243.5,70.8h1.8v1.1h-1.8zM243.5,77.6h1.8v1.1h-1.8zM243.5,84.4h1.8v1.1h-1.8zM243.5,91.2h1.8v1.1h-1.8zM243.5,98.0h1.8v1.1h-1.8zM243.5,104.8h1.8v1.1h-1.8zM243.5,111.5h1.8v1.1h-1.8zM243.5,118.3h1.8v1.1h-1.8zM243.5,125.1h1.8v1.1h-1.8zM243.5,131.9h1.8v1.1h-1.8zM243.5,138.6h1.8v1.1h-1.8zM243.5,145.4h1.8v1.1h-1.8zM243.5,152.2h1.8v1.1h-1.8zM243.5,159.0h1.8v1.1h-1.8zM243.5,165.8h1.8v1.1h-1.8zM243.5,172.5h1.8v1.1h-1.8zM243.5,179.3h1.8v1.1h-1.8zM243.5,186.1h1.8v1.1h-1.8zM243.5,192.9h1.8v1.1h-1.8zM243.5,199.7h1.8v1.1h-1.8zM243.5,206.4h1.8v1.1h-1.8zM243.5,213.2h1.8v1.1h-1.8zM243.5,220.0h1.8v1.1h-1.8zM243.5,226.8h1.8v1.1h-1.8zM243.5,233.6h1.8v1.1h-1.8zM243.5,240.3h1.8v1.1h-1.8zM243.5,247.1h1.8v1.1h-1.8zM243.5,253.9h1.8v1.1h-1.8zM243.5,260.7h1.8v1.1h-1.8zM243.5,267.5h1.8v1.1h-1.8zM243.5,274.2h1.8v1.1h-1.8zM243.5,281.0h1.8v1.1h-1.8zM243.5,287.8h1.8v1.1h-1.8zM243.5,294.6h1.8v1.1h-1.8zM243.5,301.4h1.8v1.1h-1.8zM243.5,308.2h1.8v1.1h-1.8zM243.5,314.9h1.8v1.1h-1.8zM243.5,321.7h1.8v1.1h-1.8zM243.5,328.5h1.8v1.1h-1.8zM243.5,335.3h1.8v1.1h-1.8zM324.2,9.8h1.8v1.1h-1.8zM324.2,16.6h1.8v1.1h-1.8zM324.2,23.4h1.8v1.1h-1.8zM324.2,30.2h1.8v1.1h-1.8zM324.2,37.0h1.8v1.1h-1.8zM324.2,43.7h1.8v1.1h-1.8zM324.2,50.5h1.8v1.1h-1.8zM324.2,57.3h1.8v1.1h-1.8zM324.2,64.1h1.8v1.1h-1.8zM324.2,70.8h1.8v1.1h-1.8zM324.2,77.6h1.8v1.1h-1.8zM324.2,84.4h1.8v1.1h-1.8zM324.2,91.2h1.8v1.1h-1.8zM324.2,98.0h1.8v1.1h-1.8zM324.2,104.8h1.8v1.1h-1.8zM324.2,111.5h1.8v1.1h-1.8zM324.2,118.3h1.8v1.1h-1.8zM324.2,125.1h1.8v1.1h-1.8zM324.2,131.9h1.8v1.1h-1.8zM324.2,138.6h1.8v1.1h-1.8zM324.2,145.4h1.8v1.1h-1.8zM324.2,152.2h1.8v1.1h-1.8zM324.2,159.0h1.8v1.1h-1.8zM324.2,165.8h1.8v1.1h-1.8zM324.2,172.5h1.8v1.1h-1.8zM324.2,179.3h1.8v1.1h-1.8zM324.2,186.1h1.8v1.1h-1.8zM324.2,192.9h1.8v1.1h-1.8zM324.2,199.7h1.8v1.1h-1.8zM324.2,206.4h1.8v1.1h-1.8zM324.2,213.2h1.8v1.1h-1.8zM324.2,220.0h1.8v1.1h-1.8zM324.2,226.8h1.8v1.1h-1.8zM324.2,233.6h1.8v1.1h-1.8zM324.2,240.3h1.8v1.1h-1.8zM324.2,247.1h1.8v1.1h-1.8zM324.2,253.9h1.8v1.1h-1.8zM324.2,260.7h1.8v1.1h-1.8zM324.2,267.5h1.8v1.1h-1.8zM324.2,274.2h1.8v1.1h-1.8zM324.2,281.0h1.8v1.1h-1.8zM324.2,287.8h1.8v1.1h-1.8zM324.2,294.6h1.8v1.1h-1.8zM324.2,301.4h1.8v1.1h-1.8zM324.2,308.2h1.8v1.1h-1.8zM324.2,314.9h1.8v1.1h-1.8zM324.2,321.7h1.8v1.1h-1.8zM324.2,328.5h1.8v1.1h-1.8zM324.2,335.3h1.8v1.1h-1.8zM485.6,9.8h1.8v1.1h-1.8zM485.6,16.6h1.8v1.1h-1.8zM485.6,23.4h1.8v1.1h-1.8zM485.6,30.2h1.8v1.1h-1.8zM485.6,37.0h1.8v1.1h-1.8zM485.6,43.7h1.8v1.1h-1.8zM485.6,50.5h1.8v1.1h-1.8zM485.6,57.3h1.8v1.1h-1.8zM485.6,64.1h1.8v1.1h-1.8zM485.6,70.8h1.8v1.1h-1.8zM485.6,77.6h1.8v1.1h-1.8zM485.6,84.4h1.8v1.1h-1.8zM485.6,91.2h1.8v1.1h-1.8zM485.6,98.0h1.8v1.1h-1.8zM485.6,104.8h1.8v1.1h-1.8zM485.6,111.5h1.8v1.1h-1.8zM485.6,118.3h1.8v1.1h-1.8zM485.6,125.1h1.8v1.1h-1.8zM485.6,131.9h1.8v1.1h-1.8zM485.6,138.6h1.8v1.1h-1.8zM485.6,145.4h1.8v1.1h-1.8zM485.6,152.2h1.8v1.1h-1.8zM485.6,159.0h1.8v1.1h-1.8zM485.6,165.8h1.8v1.1h-1.8zM485.6,172.5h1.8v1.1h-1.8zM485.6,179.3h1.8v1.1h-1.8zM485.6,186.1h1.8v1.1h-1.8zM485.6,192.9h1.8v1.1h-1.8zM485.6,199.7h1.8v1.1h-1.8zM485.6,206.4h1.8v1.1h-1.8zM485.6,213.2h1.8v1.1h-1.8zM485.6,220.0h1.8v1.1h-1.8zM485.6,226.8h1.8v1.1h-1.8zM485.6,233.6h1.8v1.1h-1.8zM485.6,240.3h1.8v1.1h-1.8zM485.6,247.1h1.8v1.1h-1.8zM485.6,253.9h1.8v1.1h-1.8zM485.6,260.7h1.8v1.1h-1.8zM485.6,267.5h1.8v1.1h-1.8zM485.6,274.2h1.8v1.1h-1.8zM485.6,281.0h1.8v1.1h-1.8zM485.6,287.8h1.8v1.1h-1.8zM485.6,294.6h1.8v1.1h-1.8zM485.6,301.4h1.8v1.1h-1.8zM485.6,308.2h1.8v1.1h-1.8zM485.6,314.9h1.8v1.1h-1.8zM485.6,321.7h1.8v1.1h-1.8zM485.6,328.5h1.8v1.1h-1.8zM485.6,335.3h1.8v1.1h-1.8zM566.3,9.8h1.8v1.1h-1.8zM566.3,16.6h1.8v1.1h-1.8zM566.3,23.4h1.8v1.1h-1.8zM566.3,30.2h1.8v1.1h-1.8zM566.3,37.0h1.8v1.1h-1.8zM566.3,43.7h1.8v1.1h-1.8zM566.3,50.5h1.8v1.1h-1.8zM566.3,57.3h1.8v1.1h-1.8zM566.3,64.1h1.8v1.1h-1.8zM566.3,70.8h1.8v1.1h-1.8zM566.3,77.6h1.8v1.1h-1.8zM566.3,84.4h1.8v1.1h-1.8zM566.3,91.2h1.8v1.1h-1.8zM566.3,98.0h1.8v1.1h-1.8zM566.3,104.8h1.8v1.1h-1.8zM566.3,111.5h1.8v1.1h-1.8zM566.3,118.3h1.8v1.1h-1.8zM566.3,125.1h1.8v1.1h-1.8zM566.3,131.9h1.8v1.1h-1.8zM566.3,138.6h1.8v1.1h-1.8zM566.3,145.4h1.8v1.1h-1.8zM566.3,152.2h1.8v1.1h-1.8zM566.3,159.0h1.8v1.1h-1.8zM566.3,165.8h1.8v1.1h-1.8zM566.3,172.5h1.8v1.1h-1.8zM566.3,179.3h1.8v1.1h-1.8zM566.3,186.1h1.8v1.1h-1.8zM566.3,192.9h1.8v1.1h-1.8zM566.3,199.7h1.8v1.1h-1.8zM566.3,206.4h1.8v1.1h-1.8zM566.3,213.2h1.8v1.1h-1.8zM566.3,220.0h1.8v1.1h-1.8zM566.3,226.8h1.8v1.1h-1.8zM566.3,233.6h1.8v1.1h-1.8zM566.3,240.3h1.8v1.1h-1.8zM566.3,247.1h1.8v1.1h-1.8zM566.3,253.9h1.8v1.1h-1.8zM566.3,260.7h1.8v1.1h-1.8zM566.3,267.5h1.8v1.1h-1.8zM566.3,274.2h1.8v1.1h-1.8zM566.3,281.0h1.8v1.1h-1.8zM566.3,287.8h1.8v1.1h-1.8zM566.3,294.6h1.8v1.1h-1.8zM566.3,301.4h1.8v1.1h-1.8zM566.3,308.2h1.8v1.1h-1.8zM566.3,314.9h1.8v1.1h-1.8zM566.3,321.7h1.8v1.1h-1.8zM566.3,328.5h1.8v1.1h-1.8zM566.3,335.3h1.8v1.1h-1.8zM647.0,9.8h1.8v1.1h-1.8zM647.0,16.6h1.8v1.1h-1.8zM647.0,23.4h1.8v1.1h-1.8zM647.0,30.2h1.8v1.1h-1.8zM647.0,37.0h1.8v1.1h-1.8zM647.0,43.7h1.8v1.1h-1.8zM647.0,50.5h1.8v1.1h-1.8zM647.0,57.3h1.8v1.1h-1.8zM647.0,64.1h1.8v1.1h-1.8zM647.0,70.8h1.8v1.1h-1.8zM647.0,77.6h1.8v1.1h-1.8zM647.0,84.4h1.8v1.1h-1.8zM647.0,91.2h1.8v1.1h-1.8zM647.0,98.0h1.8v1.1h-1.8zM647.0,104.8h1.8v1.1h-1.8zM647.0,111.5h1.8v1.1h-1.8zM647.0,118.3h1.8v1.1h-1.8zM647.0,125.1h1.8v1.1h-1.8zM647.0,131.9h1.8v1.1h-1.8zM647.0,138.6h1.8v1.1h-1.8zM647.0,145.4h1.8v1.1h-1.8zM647.0,152.2h1.8v1.1h-1.8zM647.0,159.0h1.8v1.1h-1.8zM647.0,165.8h1.8v1.1h-1.8zM647.0,172.5h1.8v1.1h-1.8zM647.0,179.3h1.8v1.1h-1.8zM647.0,186.1h1.8v1.1h-1.8zM647.0,192.9h1.8v1.1h-1.8zM647.0,199.7h1.8v1.1h-1.8zM647.0,206.4h1.8v1.1h-1.8zM647.0,213.2h1.8v1.1h-1.8zM647.0,220.0h1.8v1.1h-1.8zM647.0,226.8h1.8v1.1h-1.8zM647.0,233.6h1.8v1.1h-1.8zM647.0,240.3h1.8v1.1h-1.8zM647.0,247.1h1.8v1.1h-1.8zM647.0,253.9h1.8v1.1h-1.8zM647.0,260.7h1.8v1.1h-1.8zM647.0,267.5h1.8v1.1h-1.8zM647.0,274.2h1.8v1.1h-1.8zM647.0,281.0h1.8v1.1h-1.8zM647.0,287.8h1.8v1.1h-1.8zM647.0,294.6h1.8v1.1h-1.8zM647.0,301.4h1.8v1.1h-1.8zM647.0,308.2h1.8v1.1h-1.8zM647.0,314.9h1.8v1.1h-1.8zM647.0,321.7h1.8v1.1h-1.8zM647.0,328.5h1.8v1.1h-1.8zM647.0,335.3h1.8v1.1h-1.8zM727.7,9.8h1.8v1.1h-1.8zM727.7,16.6h1.8v1.1h-1.8zM727.7,23.4h1.8v1.1h-1.8zM727.7,30.2h1.8v1.1h-1.8zM727.7,37.0h1.8v1.1h-1.8zM727.7,43.7h1.8v1.1h-1.8zM727.7,50.5h1.8v1.1h-1.8zM727.7,57.3h1.8v1.1h-1.8zM727.7,64.1h1.8v1.1h-1.8zM727.7,70.8h1.8v1.1h-1.8zM727.7,77.6h1.8v1.1h-1.8zM727.7,84.4h1.8v1.1h-1.8zM727.7,91.2h1.8v1.1h-1.8zM727.7,98.0h1.8v1.1h-1.8zM727.7,104.8h1.8v1.1h-1.8zM727.7,111.5h1.8v1.1h-1.8zM727.7,118.3h1.8v1.1h-1.8zM727.7,125.1h1.8v1.1h-1.8zM727.7,131.9h1.8v1.1h-1.8zM727.7,138.6h1.8v1.1h-1.8zM727.7,145.4h1.8v1.1h-1.8zM727.7,152.2h1.8v1.1h-1.8zM727.7,159.0h1.8v1.1h-1.8zM727.7,165.8h1.8v1.1h-1.8zM727.7,172.5h1.8v1.1h-1.8zM727.7,179.3h1.8v1.1h-1.8zM727.7,186.1h1.8v1.1h-1.8zM727.7,192.9h1.8v1.1h-1.8zM727.7,199.7h1.8v1.1h-1.8zM727.7,206.4h1.8v1.1h-1.8zM727.7,213.2h1.8v1.1h-1.8zM727.7,220.0h1.8v1.1h-1.8zM727.7,226.8h1.8v1.1h-1.8zM727.7,233.6h1.8v1.1h-1.8zM727.7,240.3h1.8v1.1h-1.8zM727.7,247.1h1.8v1.1h-1.8zM727.7,253.9h1.8v1.1h-1.8zM727.7,260.7h1.8v1.1h-1.8zM727.7,267.5h1.8v1.1h-1.8zM727.7,274.2h1.8v1.1h-1.8zM727.7,281.0h1.8v1.1h-1.8zM727.7,287.8h1.8v1.1h-1.8zM727.7,294.6h1.8v1.1h-1.8zM727.7,301.4h1.8v1.1h-1.8zM727.7,308.2h1.8v1.1h-1.8zM727.7,314.9h1.8v1.1h-1.8zM727.7,321.7h1.8v1.1h-1.8zM727.7,328.5h1.8v1.1h-1.8zM727.7,335.3h1.8v1.1h-1.8zM17.5,37.0h1.8v1.1h-1.8zM33.7,37.0h1.8v1.1h-1.8zM49.8,37.0h1.8v1.1h-1.8zM66.0,37.0h1.8v1.1h-1.8zM82.1,37.0h1.8v1.1h-1.8zM98.2,37.0h1.8v1.1h-1.8zM114.4,37.0h1.8v1.1h-1.8zM130.5,37.0h1.8v1.1h-1.8zM146.7,37.0h1.8v1.1h-1.8zM162.8,37.0h1.8v1.1h-1.8zM178.9,37.0h1.8v1.1h-1.8zM195.1,37.0h1.8v1.1h-1.8zM211.2,37.0h1.8v1.1h-1.8zM227.4,37.0h1.8v1.1h-1.8zM243.5,37.0h1.8v1.1h-1.8zM259.6,37.0h1.8v1.1h-1.8zM275.8,37.0h1.8v1.1h-1.8zM291.9,37.0h1.8v1.1h-1.8zM308.1,37.0h1.8v1.1h-1.8zM324.2,37.0h1.8v1.1h-1.8zM340.3,37.0h1.8v1.1h-1.8zM356.5,37.0h1.8v1.1h-1.8zM372.6,37.0h1.8v1.1h-1.8zM388.8,37.0h1.8v1.1h-1.8zM404.9,37.0h1.8v1.1h-1.8zM421.0,37.0h1.8v1.1h-1.8zM437.2,37.0h1.8v1.1h-1.8zM453.3,37.0h1.8v1.1h-1.8zM469.5,37.0h1.8v1.1h-1.8zM485.6,37.0h1.8v1.1h-1.8zM501.7,37.0h1.8v1.1h-1.8zM517.9,37.0h1.8v1.1h-1.8zM534.0,37.0h1.8v1.1h-1.8zM550.2,37.0h1.8v1.1h-1.8zM566.3,37.0h1.8v1.1h-1.8zM582.4,37.0h1.8v1.1h-1.8zM598.6,37.0h1.8v1.1h-1.8zM614.7,37.0h1.8v1.1h-1.8zM630.9,37.0h1.8v1.1h-1.8zM647.0,37.0h1.8v1.1h-1.8zM663.1,37.0h1.8v1.1h-1.8zM679.3,37.0h1.8v1.1h-1.8zM695.4,37.0h1.8v1.1h-1.8zM711.6,37.0h1.8v1.1h-1.8zM727.7,37.0h1.8v1.1h-1.8zM743.8,37.0h1.8v1.1h-1.8zM760.0,37.0h1.8v1.1h-1.8zM776.1,37.0h1.8v1.1h-1.8zM792.3,37.0h1.8v1.1h-1.8zM17.5,70.8h1.8v1.1h-1.8zM33.7,70.8h1.8v1.1h-1.8zM49.8,70.8h1.8v1.1h-1.8zM66.0,70.8h1.8v1.1h-1.8zM82.1,70.8h1.8v1.1h-1.8zM98.2,70.8h1.8v1.1h-1.8zM114.4,70.8h1.8v1.1h-1.8zM130.5,70.8h1.8v1.1h-1.8zM146.7,70.8h1.8v1.1h-1.8zM162.8,70.8h1.8v1.1h-1.8zM178.9,70.8h1.8v1.1h-1.8zM195.1,70.8h1.8v1.1h-1.8zM211.2,70.8h1.8v1.1h-1.8zM227.4,70.8h1.8v1.1h-1.8zM243.5,70.8h1.8v1.1h-1.8zM259.6,70.8h1.8v1.1h-1.8zM275.8,70.8h1.8v1.1h-1.8zM291.9,70.8h1.8v1.1h-1.8zM308.1,70.8h1.8v1.1h-1.8zM324.2,70.8h1.8v1.1h-1.8zM340.3,70.8h1.8v1.1h-1.8zM356.5,70.8h1.8v1.1h-1.8zM372.6,70.8h1.8v1.1h-1.8zM388.8,70.8h1.8v1.1h-1.8zM404.9,70.8h1.8v1.1h-1.8zM421.0,70.8h1.8v1.1h-1.8zM437.2,70.8h1.8v1.1h-1.8zM453.3,70.8h1.8v1.1h-1.8zM469.5,70.8h1.8v1.1h-1.8zM485.6,70.8h1.8v1.1h-1.8zM501.7,70.8h1.8v1.1h-1.8zM517.9,70.8h1.8v1.1h-1.8zM534.0,70.8h1.8v1.1h-1.8zM550.2,70.8h1.8v1.1h-1.8zM566.3,70.8h1.8v1.1h-1.8zM582.4,70.8h1.8v1.1h-1.8zM598.6,70.8h1.8v1.1h-1.8zM614.7,70.8h1.8v1.1h-1.8zM630.9,70.8h1.8v1.1h-1.8zM647.0,70.8h1.8v1.1h-1.8zM663.1,70.8h1.8v1.1h-1.8zM679.3,70.8h1.8v1.1h-1.8zM695.4,70.8h1.8v1.1h-1.8zM711.6,70.8h1.8v1.1h-1.8zM727.7,70.8h1.8v1.1h-1.8zM743.8,70.8h1.8v1.1h-1.8zM760.0,70.8h1.8v1.1h-1.8zM776.1,70.8h1.8v1.1h-1.8zM792.3,70.8h1.8v1.1h-1.8zM17.5,104.7h1.8v1.1h-1.8zM33.7,104.7h1.8v1.1h-1.8zM49.8,104.7h1.8v1.1h-1.8zM66.0,104.7h1.8v1.1h-1.8zM82.1,104.7h1.8v1.1h-1.8zM98.2,104.7h1.8v1.1h-1.8zM114.4,104.7h1.8v1.1h-1.8zM130.5,104.7h1.8v1.1h-1.8zM146.7,104.7h1.8v1.1h-1.8zM162.8,104.7h1.8v1.1h-1.8zM178.9,104.7h1.8v1.1h-1.8zM195.1,104.7h1.8v1.1h-1.8zM211.2,104.7h1.8v1.1h-1.8zM227.4,104.7h1.8v1.1h-1.8zM243.5,104.7h1.8v1.1h-1.8zM259.6,104.7h1.8v1.1h-1.8zM275.8,104.7h1.8v1.1h-1.8zM291.9,104.7h1.8v1.1h-1.8zM308.1,104.7h1.8v1.1h-1.8zM324.2,104.7h1.8v1.1h-1.8zM340.3,104.7h1.8v1.1h-1.8zM356.5,104.7h1.8v1.1h-1.8zM372.6,104.7h1.8v1.1h-1.8zM388.8,104.7h1.8v1.1h-1.8zM404.9,104.7h1.8v1.1h-1.8zM421.0,104.7h1.8v1.1h-1.8zM437.2,104.7h1.8v1.1h-1.8zM453.3,104.7h1.8v1.1h-1.8zM469.5,104.7h1.8v1.1h-1.8zM485.6,104.7h1.8v1.1h-1.8zM501.7,104.7h1.8v1.1h-1.8zM517.9,104.7h1.8v1.1h-1.8zM534.0,104.7h1.8v1.1h-1.8zM550.2,104.7h1.8v1.1h-1.8zM566.3,104.7h1.8v1.1h-1.8zM582.4,104.7h1.8v1.1h-1.8zM598.6,104.7h1.8v1.1h-1.8zM614.7,104.7h1.8v1.1h-1.8zM630.9,104.7h1.8v1.1h-1.8zM647.0,104.7h1.8v1.1h-1.8zM663.1,104.7h1.8v1.1h-1.8zM679.3,104.7h1.8v1.1h-1.8zM695.4,104.7h1.8v1.1h-1.8zM711.6,104.7h1.8v1.1h-1.8zM727.7,104.7h1.8v1.1h-1.8zM743.8,104.7h1.8v1.1h-1.8zM760.0,104.7h1.8v1.1h-1.8zM776.1,104.7h1.8v1.1h-1.8zM792.3,104.7h1.8v1.1h-1.8zM17.5,138.6h1.8v1.1h-1.8zM33.7,138.6h1.8v1.1h-1.8zM49.8,138.6h1.8v1.1h-1.8zM66.0,138.6h1.8v1.1h-1.8zM82.1,138.6h1.8v1.1h-1.8zM98.2,138.6h1.8v1.1h-1.8zM114.4,138.6h1.8v1.1h-1.8zM130.5,138.6h1.8v1.1h-1.8zM146.7,138.6h1.8v1.1h-1.8zM162.8,138.6h1.8v1.1h-1.8zM178.9,138.6h1.8v1.1h-1.8zM195.1,138.6h1.8v1.1h-1.8zM211.2,138.6h1.8v1.1h-1.8zM227.4,138.6h1.8v1.1h-1.8zM243.5,138.6h1.8v1.1h-1.8zM259.6,138.6h1.8v1.1h-1.8zM275.8,138.6h1.8v1.1h-1.8zM291.9,138.6h1.8v1.1h-1.8zM308.1,138.6h1.8v1.1h-1.8zM324.2,138.6h1.8v1.1h-1.8zM340.3,138.6h1.8v1.1h-1.8zM356.5,138.6h1.8v1.1h-1.8zM372.6,138.6h1.8v1.1h-1.8zM388.8,138.6h1.8v1.1h-1.8zM404.9,138.6h1.8v1.1h-1.8zM421.0,138.6h1.8v1.1h-1.8zM437.2,138.6h1.8v1.1h-1.8zM453.3,138.6h1.8v1.1h-1.8zM469.5,138.6h1.8v1.1h-1.8zM485.6,138.6h1.8v1.1h-1.8zM501.7,138.6h1.8v1.1h-1.8zM517.9,138.6h1.8v1.1h-1.8zM534.0,138.6h1.8v1.1h-1.8zM550.2,138.6h1.8v1.1h-1.8zM566.3,138.6h1.8v1.1h-1.8zM582.4,138.6h1.8v1.1h-1.8zM598.6,138.6h1.8v1.1h-1.8zM614.7,138.6h1.8v1.1h-1.8zM630.9,138.6h1.8v1.1h-1.8zM647.0,138.6h1.8v1.1h-1.8zM663.1,138.6h1.8v1.1h-1.8zM679.3,138.6h1.8v1.1h-1.8zM695.4,138.6h1.8v1.1h-1.8zM711.6,138.6h1.8v1.1h-1.8zM727.7,138.6h1.8v1.1h-1.8zM743.8,138.6h1.8v1.1h-1.8zM760.0,138.6h1.8v1.1h-1.8zM776.1,138.6h1.8v1.1h-1.8zM792.3,138.6h1.8v1.1h-1.8zM17.5,206.4h1.8v1.1h-1.8zM33.7,206.4h1.8v1.1h-1.8zM49.8,206.4h1.8v1.1h-1.8zM66.0,206.4h1.8v1.1h-1.8zM82.1,206.4h1.8v1.1h-1.8zM98.2,206.4h1.8v1.1h-1.8zM114.4,206.4h1.8v1.1h-1.8zM130.5,206.4h1.8v1.1h-1.8zM146.7,206.4h1.8v1.1h-1.8zM162.8,206.4h1.8v1.1h-1.8zM178.9,206.4h1.8v1.1h-1.8zM195.1,206.4h1.8v1.1h-1.8zM211.2,206.4h1.8v1.1h-1.8zM227.4,206.4h1.8v1.1h-1.8zM243.5,206.4h1.8v1.1h-1.8zM259.6,206.4h1.8v1.1h-1.8zM275.8,206.4h1.8v1.1h-1.8zM291.9,206.4h1.8v1.1h-1.8zM308.1,206.4h1.8v1.1h-1.8zM324.2,206.4h1.8v1.1h-1.8zM340.3,206.4h1.8v1.1h-1.8zM356.5,206.4h1.8v1.1h-1.8zM372.6,206.4h1.8v1.1h-1.8zM388.8,206.4h1.8v1.1h-1.8zM404.9,206.4h1.8v1.1h-1.8zM421.0,206.4h1.8v1.1h-1.8zM437.2,206.4h1.8v1.1h-1.8zM453.3,206.4h1.8v1.1h-1.8zM469.5,206.4h1.8v1.1h-1.8zM485.6,206.4h1.8v1.1h-1.8zM501.7,206.4h1.8v1.1h-1.8zM517.9,206.4h1.8v1.1h-1.8zM534.0,206.4h1.8v1.1h-1.8zM550.2,206.4h1.8v1.1h-1.8zM566.3,206.4h1.8v1.1h-1.8zM582.4,206.4h1.8v1.1h-1.8zM598.6,206.4h1.8v1.1h-1.8zM614.7,206.4h1.8v1.1h-1.8zM630.9,206.4h1.8v1.1h-1.8zM647.0,206.4h1.8v1.1h-1.8zM663.1,206.4h1.8v1.1h-1.8zM679.3,206.4h1.8v1.1h-1.8zM695.4,206.4h1.8v1.1h-1.8zM711.6,206.4h1.8v1.1h-1.8zM727.7,206.4h1.8v1.1h-1.8zM743.8,206.4h1.8v1.1h-1.8zM760.0,206.4h1.8v1.1h-1.8zM776.1,206.4h1.8v1.1h-1.8zM792.3,206.4h1.8v1.1h-1.8zM17.5,240.3h1.8v1.1h-1.8zM33.7,240.3h1.8v1.1h-1.8zM49.8,240.3h1.8v1.1h-1.8zM66.0,240.3h1.8v1.1h-1.8zM82.1,240.3h1.8v1.1h-1.8zM98.2,240.3h1.8v1.1h-1.8zM114.4,240.3h1.8v1.1h-1.8zM130.5,240.3h1.8v1.1h-1.8zM146.7,240.3h1.8v1.1h-1.8zM162.8,240.3h1.8v1.1h-1.8zM178.9,240.3h1.8v1.1h-1.8zM195.1,240.3h1.8v1.1h-1.8zM211.2,240.3h1.8v1.1h-1.8zM227.4,240.3h1.8v1.1h-1.8zM243.5,240.3h1.8v1.1h-1.8zM259.6,240.3h1.8v1.1h-1.8zM275.8,240.3h1.8v1.1h-1.8zM291.9,240.3h1.8v1.1h-1.8zM308.1,240.3h1.8v1.1h-1.8zM324.2,240.3h1.8v1.1h-1.8zM340.3,240.3h1.8v1.1h-1.8zM356.5,240.3h1.8v1.1h-1.8zM372.6,240.3h1.8v1.1h-1.8zM388.8,240.3h1.8v1.1h-1.8zM404.9,240.3h1.8v1.1h-1.8zM421.0,240.3h1.8v1.1h-1.8zM437.2,240.3h1.8v1.1h-1.8zM453.3,240.3h1.8v1.1h-1.8zM469.5,240.3h1.8v1.1h-1.8zM485.6,240.3h1.8v1.1h-1.8zM501.7,240.3h1.8v1.1h-1.8zM517.9,240.3h1.8v1.1h-1.8zM534.0,240.3h1.8v1.1h-1.8zM550.2,240.3h1.8v1.1h-1.8zM566.3,240.3h1.8v1.1h-1.8zM582.4,240.3h1.8v1.1h-1.8zM598.6,240.3h1.8v1.1h-1.8zM614.7,240.3h1.8v1.1h-1.8zM630.9,240.3h1.8v1.1h-1.8zM647.0,240.3h1.8v1.1h-1.8zM663.1,240.3h1.8v1.1h-1.8zM679.3,240.3h1.8v1.1h-1.8zM695.4,240.3h1.8v1.1h-1.8zM711.6,240.3h1.8v1.1h-1.8zM727.7,240.3h1.8v1.1h-1.8zM743.8,240.3h1.8v1.1h-1.8zM760.0,240.3h1.8v1.1h-1.8zM776.1,240.3h1.8v1.1h-1.8zM792.3,240.3h1.8v1.1h-1.8zM17.5,274.2h1.8v1.1h-1.8zM33.7,274.2h1.8v1.1h-1.8zM49.8,274.2h1.8v1.1h-1.8zM66.0,274.2h1.8v1.1h-1.8zM82.1,274.2h1.8v1.1h-1.8zM98.2,274.2h1.8v1.1h-1.8zM114.4,274.2h1.8v1.1h-1.8zM130.5,274.2h1.8v1.1h-1.8zM146.7,274.2h1.8v1.1h-1.8zM162.8,274.2h1.8v1.1h-1.8zM178.9,274.2h1.8v1.1h-1.8zM195.1,274.2h1.8v1.1h-1.8zM211.2,274.2h1.8v1.1h-1.8zM227.4,274.2h1.8v1.1h-1.8zM243.5,274.2h1.8v1.1h-1.8zM259.6,274.2h1.8v1.1h-1.8zM275.8,274.2h1.8v1.1h-1.8zM291.9,274.2h1.8v1.1h-1.8zM308.1,274.2h1.8v1.1h-1.8zM324.2,274.2h1.8v1.1h-1.8zM340.3,274.2h1.8v1.1h-1.8zM356.5,274.2h1.8v1.1h-1.8zM372.6,274.2h1.8v1.1h-1.8zM388.8,274.2h1.8v1.1h-1.8zM404.9,274.2h1.8v1.1h-1.8zM421.0,274.2h1.8v1.1h-1.8zM437.2,274.2h1.8v1.1h-1.8zM453.3,274.2h1.8v1.1h-1.8zM469.5,274.2h1.8v1.1h-1.8zM485.6,274.2h1.8v1.1h-1.8zM501.7,274.2h1.8v1.1h-1.8zM517.9,274.2h1.8v1.1h-1.8zM534.0,274.2h1.8v1.1h-1.8zM550.2,274.2h1.8v1.1h-1.8zM566.3,274.2h1.8v1.1h-1.8zM582.4,274.2h1.8v1.1h-1.8zM598.6,274.2h1.8v1.1h-1.8zM614.7,274.2h1.8v1.1h-1.8zM630.9,274.2h1.8v1.1h-1.8zM647.0,274.2h1.8v1.1h-1.8zM663.1,274.2h1.8v1.1h-1.8zM679.3,274.2h1.8v1.1h-1.8zM695.4,274.2h1.8v1.1h-1.8zM711.6,274.2h1.8v1.1h-1.8zM727.7,274.2h1.8v1.1h-1.8zM743.8,274.2h1.8v1.1h-1.8zM760.0,274.2h1.8v1.1h-1.8zM776.1,274.2h1.8v1.1h-1.8zM792.3,274.2h1.8v1.1h-1.8zM17.5,308.1h1.8v1.1h-1.8zM33.7,308.1h1.8v1.1h-1.8zM49.8,308.1h1.8v1.1h-1.8zM66.0,308.1h1.8v1.1h-1.8zM82.1,308.1h1.8v1.1h-1.8zM98.2,308.1h1.8v1.1h-1.8zM114.4,308.1h1.8v1.1h-1.8zM130.5,308.1h1.8v1.1h-1.8zM146.7,308.1h1.8v1.1h-1.8zM162.8,308.1h1.8v1.1h-1.8zM178.9,308.1h1.8v1.1h-1.8zM195.1,308.1h1.8v1.1h-1.8zM211.2,308.1h1.8v1.1h-1.8zM227.4,308.1h1.8v1.1h-1.8zM243.5,308.1h1.8v1.1h-1.8zM259.6,308.1h1.8v1.1h-1.8zM275.8,308.1h1.8v1.1h-1.8zM291.9,308.1h1.8v1.1h-1.8zM308.1,308.1h1.8v1.1h-1.8zM324.2,308.1h1.8v1.1h-1.8zM340.3,308.1h1.8v1.1h-1.8zM356.5,308.1h1.8v1.1h-1.8zM372.6,308.1h1.8v1.1h-1.8zM388.8,308.1h1.8v1.1h-1.8zM404.9,308.1h1.8v1.1h-1.8zM421.0,308.1h1.8v1.1h-1.8zM437.2,308.1h1.8v1.1h-1.8zM453.3,308.1h1.8v1.1h-1.8zM469.5,308.1h1.8v1.1h-1.8zM485.6,308.1h1.8v1.1h-1.8zM501.7,308.1h1.8v1.1h-1.8zM517.9,308.1h1.8v1.1h-1.8zM534.0,308.1h1.8v1.1h-1.8zM550.2,308.1h1.8v1.1h-1.8zM566.3,308.1h1.8v1.1h-1.8zM582.4,308.1h1.8v1.1h-1.8zM598.6,308.1h1.8v1.1h-1.8zM614.7,308.1h1.8v1.1h-1.8zM630.9,308.1h1.8v1.1h-1.8zM647.0,308.1h1.8v1.1h-1.8zM663.1,308.1h1.8v1.1h-1.8zM679.3,308.1h1.8v1.1h-1.8zM695.4,308.1h1.8v1.1h-1.8zM711.6,308.1h1.8v1.1h-1.8zM727.7,308.1h1.8v1.1h-1.8zM743.8,308.1h1.8v1.1h-1.8zM760.0,308.1h1.8v1.1h-1.8zM776.1,308.1h1.8v1.1h-1.8zM792.3,308.1h1.8v1.1h-1.8z" fill="#8c856b"/>
<rect x="404.9" y="3" width="1.15" height="340" fill="#b7aa85"/>
<rect x="2" y="172.2" width="807" height="1.5" fill="#6e6a54"/>
<path d="M17.3,169.6h1.6v6.4h-1.6zM33.5,169.6h1.6v6.4h-1.6zM49.6,169.6h1.6v6.4h-1.6zM65.8,169.6h1.6v6.4h-1.6zM98.0,169.6h1.6v6.4h-1.6zM114.2,169.6h1.6v6.4h-1.6zM130.3,169.6h1.6v6.4h-1.6zM146.5,169.6h1.6v6.4h-1.6zM178.7,169.6h1.6v6.4h-1.6zM194.9,169.6h1.6v6.4h-1.6zM211.0,169.6h1.6v6.4h-1.6zM227.2,169.6h1.6v6.4h-1.6zM259.4,169.6h1.6v6.4h-1.6zM275.6,169.6h1.6v6.4h-1.6zM291.7,169.6h1.6v6.4h-1.6zM307.9,169.6h1.6v6.4h-1.6zM340.1,169.6h1.6v6.4h-1.6zM356.3,169.6h1.6v6.4h-1.6zM372.4,169.6h1.6v6.4h-1.6zM388.6,169.6h1.6v6.4h-1.6zM420.8,169.6h1.6v6.4h-1.6zM437.0,169.6h1.6v6.4h-1.6zM453.1,169.6h1.6v6.4h-1.6zM469.3,169.6h1.6v6.4h-1.6zM501.5,169.6h1.6v6.4h-1.6zM517.7,169.6h1.6v6.4h-1.6zM533.8,169.6h1.6v6.4h-1.6zM550.0,169.6h1.6v6.4h-1.6zM582.2,169.6h1.6v6.4h-1.6zM598.4,169.6h1.6v6.4h-1.6zM614.5,169.6h1.6v6.4h-1.6zM630.7,169.6h1.6v6.4h-1.6zM662.9,169.6h1.6v6.4h-1.6zM679.1,169.6h1.6v6.4h-1.6zM695.2,169.6h1.6v6.4h-1.6zM711.4,169.6h1.6v6.4h-1.6zM743.6,169.6h1.6v6.4h-1.6zM759.8,169.6h1.6v6.4h-1.6zM775.9,169.6h1.6v6.4h-1.6zM792.1,169.6h1.6v6.4h-1.6z" fill="#cfc5a3"/>
<path d="M82.0,167.3h1.4v11h-1.4zM162.7,167.3h1.4v11h-1.4zM243.4,167.3h1.4v11h-1.4zM324.1,167.3h1.4v11h-1.4zM485.5,167.3h1.4v11h-1.4zM566.2,167.3h1.4v11h-1.4zM646.9,167.3h1.4v11h-1.4zM727.6,167.3h1.4v11h-1.4z" fill="#e9dfbb"/>
<path d="M402.5,9.5h6v1.7h-6zM402.5,16.3h6v1.7h-6zM402.5,23.1h6v1.7h-6zM402.5,29.9h6v1.7h-6zM402.5,43.4h6v1.7h-6zM402.5,50.2h6v1.7h-6zM402.5,57.0h6v1.7h-6zM402.5,63.8h6v1.7h-6zM402.5,77.3h6v1.7h-6zM402.5,84.1h6v1.7h-6zM402.5,90.9h6v1.7h-6zM402.5,97.7h6v1.7h-6zM402.5,111.2h6v1.7h-6zM402.5,118.0h6v1.7h-6zM402.5,124.8h6v1.7h-6zM402.5,131.6h6v1.7h-6zM402.5,145.1h6v1.7h-6zM402.5,151.9h6v1.7h-6zM402.5,158.7h6v1.7h-6zM402.5,165.5h6v1.7h-6zM402.5,179.0h6v1.7h-6zM402.5,185.8h6v1.7h-6zM402.5,192.6h6v1.7h-6zM402.5,199.4h6v1.7h-6zM402.5,212.9h6v1.7h-6zM402.5,219.7h6v1.7h-6zM402.5,226.5h6v1.7h-6zM402.5,233.3h6v1.7h-6zM402.5,246.8h6v1.7h-6zM402.5,253.6h6v1.7h-6zM402.5,260.4h6v1.7h-6zM402.5,267.2h6v1.7h-6zM402.5,280.7h6v1.7h-6zM402.5,287.5h6v1.7h-6zM402.5,294.3h6v1.7h-6zM402.5,301.1h6v1.7h-6zM402.5,314.6h6v1.7h-6zM402.5,321.4h6v1.7h-6zM402.5,328.2h6v1.7h-6zM402.5,335.0h6v1.7h-6z" fill="#827b61"/>
<path d="M399.8,37.0h11.4v1.1h-11.4zM399.8,70.8h11.4v1.1h-11.4zM399.8,104.8h11.4v1.1h-11.4zM399.8,138.6h11.4v1.1h-11.4zM399.8,206.4h11.4v1.1h-11.4zM399.8,240.3h11.4v1.1h-11.4zM399.8,274.2h11.4v1.1h-11.4zM399.8,308.2h11.4v1.1h-11.4z" fill="#ffffdc"/>
<rect x="2.6" y="3.9" width="805.8" height="338.6" fill="none" stroke="#b4ad93" stroke-width="0.7"/>
<path d="M17.3,4h1.7v5h-1.7zM17.3,337.5h1.7v5h-1.7zM33.4,4h1.7v5h-1.7zM33.4,337.5h1.7v5h-1.7zM49.6,4h1.7v5h-1.7zM49.6,337.5h1.7v5h-1.7zM65.7,4h1.7v5h-1.7zM65.7,337.5h1.7v5h-1.7zM98.0,4h1.7v5h-1.7zM98.0,337.5h1.7v5h-1.7zM114.1,4h1.7v5h-1.7zM114.1,337.5h1.7v5h-1.7zM130.3,4h1.7v5h-1.7zM130.3,337.5h1.7v5h-1.7zM146.4,4h1.7v5h-1.7zM146.4,337.5h1.7v5h-1.7zM178.7,4h1.7v5h-1.7zM178.7,337.5h1.7v5h-1.7zM194.8,4h1.7v5h-1.7zM194.8,337.5h1.7v5h-1.7zM211.0,4h1.7v5h-1.7zM211.0,337.5h1.7v5h-1.7zM227.1,4h1.7v5h-1.7zM227.1,337.5h1.7v5h-1.7zM259.4,4h1.7v5h-1.7zM259.4,337.5h1.7v5h-1.7zM275.5,4h1.7v5h-1.7zM275.5,337.5h1.7v5h-1.7zM291.7,4h1.7v5h-1.7zM291.7,337.5h1.7v5h-1.7zM307.8,4h1.7v5h-1.7zM307.8,337.5h1.7v5h-1.7zM340.1,4h1.7v5h-1.7zM340.1,337.5h1.7v5h-1.7zM356.2,4h1.7v5h-1.7zM356.2,337.5h1.7v5h-1.7zM372.4,4h1.7v5h-1.7zM372.4,337.5h1.7v5h-1.7zM388.5,4h1.7v5h-1.7zM388.5,337.5h1.7v5h-1.7zM420.8,4h1.7v5h-1.7zM420.8,337.5h1.7v5h-1.7zM436.9,4h1.7v5h-1.7zM436.9,337.5h1.7v5h-1.7zM453.1,4h1.7v5h-1.7zM453.1,337.5h1.7v5h-1.7zM469.2,4h1.7v5h-1.7zM469.2,337.5h1.7v5h-1.7zM501.5,4h1.7v5h-1.7zM501.5,337.5h1.7v5h-1.7zM517.6,4h1.7v5h-1.7zM517.6,337.5h1.7v5h-1.7zM533.8,4h1.7v5h-1.7zM533.8,337.5h1.7v5h-1.7zM549.9,4h1.7v5h-1.7zM549.9,337.5h1.7v5h-1.7zM582.2,4h1.7v5h-1.7zM582.2,337.5h1.7v5h-1.7zM598.3,4h1.7v5h-1.7zM598.3,337.5h1.7v5h-1.7zM614.5,4h1.7v5h-1.7zM614.5,337.5h1.7v5h-1.7zM630.6,4h1.7v5h-1.7zM630.6,337.5h1.7v5h-1.7zM662.9,4h1.7v5h-1.7zM662.9,337.5h1.7v5h-1.7zM679.0,4h1.7v5h-1.7zM679.0,337.5h1.7v5h-1.7zM695.2,4h1.7v5h-1.7zM695.2,337.5h1.7v5h-1.7zM711.3,4h1.7v5h-1.7zM711.3,337.5h1.7v5h-1.7zM743.6,4h1.7v5h-1.7zM743.6,337.5h1.7v5h-1.7zM759.7,4h1.7v5h-1.7zM759.7,337.5h1.7v5h-1.7zM775.9,4h1.7v5h-1.7zM775.9,337.5h1.7v5h-1.7zM792.0,4h1.7v5h-1.7zM792.0,337.5h1.7v5h-1.7z" fill="#b1a785"/>
<path d="M81.8,4h1.8v9.5h-1.8zM81.8,333.0h1.8v9.5h-1.8zM162.5,4h1.8v9.5h-1.8zM162.5,333.0h1.8v9.5h-1.8zM243.2,4h1.8v9.5h-1.8zM243.2,333.0h1.8v9.5h-1.8zM323.9,4h1.8v9.5h-1.8zM323.9,333.0h1.8v9.5h-1.8zM404.6,4h1.8v9.5h-1.8zM404.6,333.0h1.8v9.5h-1.8zM485.3,4h1.8v9.5h-1.8zM485.3,333.0h1.8v9.5h-1.8zM566.0,4h1.8v9.5h-1.8zM566.0,333.0h1.8v9.5h-1.8zM646.7,4h1.8v9.5h-1.8zM646.7,333.0h1.8v9.5h-1.8zM727.4,4h1.8v9.5h-1.8zM727.4,333.0h1.8v9.5h-1.8z" fill="#b7ad8c"/>
<path d="M3,9.5h4.6v1.7h-4.6zM804.2,9.5h4.6v1.7h-4.6zM3,16.3h4.6v1.7h-4.6zM804.2,16.3h4.6v1.7h-4.6zM3,23.1h4.6v1.7h-4.6zM804.2,23.1h4.6v1.7h-4.6zM3,29.9h4.6v1.7h-4.6zM804.2,29.9h4.6v1.7h-4.6zM3,43.4h4.6v1.7h-4.6zM804.2,43.4h4.6v1.7h-4.6zM3,50.2h4.6v1.7h-4.6zM804.2,50.2h4.6v1.7h-4.6zM3,57.0h4.6v1.7h-4.6zM804.2,57.0h4.6v1.7h-4.6zM3,63.8h4.6v1.7h-4.6zM804.2,63.8h4.6v1.7h-4.6zM3,77.3h4.6v1.7h-4.6zM804.2,77.3h4.6v1.7h-4.6zM3,84.1h4.6v1.7h-4.6zM804.2,84.1h4.6v1.7h-4.6zM3,90.9h4.6v1.7h-4.6zM804.2,90.9h4.6v1.7h-4.6zM3,97.7h4.6v1.7h-4.6zM804.2,97.7h4.6v1.7h-4.6zM3,111.2h4.6v1.7h-4.6zM804.2,111.2h4.6v1.7h-4.6zM3,118.0h4.6v1.7h-4.6zM804.2,118.0h4.6v1.7h-4.6zM3,124.8h4.6v1.7h-4.6zM804.2,124.8h4.6v1.7h-4.6zM3,131.6h4.6v1.7h-4.6zM804.2,131.6h4.6v1.7h-4.6zM3,145.1h4.6v1.7h-4.6zM804.2,145.1h4.6v1.7h-4.6zM3,151.9h4.6v1.7h-4.6zM804.2,151.9h4.6v1.7h-4.6zM3,158.7h4.6v1.7h-4.6zM804.2,158.7h4.6v1.7h-4.6zM3,165.5h4.6v1.7h-4.6zM804.2,165.5h4.6v1.7h-4.6zM3,179.0h4.6v1.7h-4.6zM804.2,179.0h4.6v1.7h-4.6zM3,185.8h4.6v1.7h-4.6zM804.2,185.8h4.6v1.7h-4.6zM3,192.6h4.6v1.7h-4.6zM804.2,192.6h4.6v1.7h-4.6zM3,199.4h4.6v1.7h-4.6zM804.2,199.4h4.6v1.7h-4.6zM3,212.9h4.6v1.7h-4.6zM804.2,212.9h4.6v1.7h-4.6zM3,219.7h4.6v1.7h-4.6zM804.2,219.7h4.6v1.7h-4.6zM3,226.5h4.6v1.7h-4.6zM804.2,226.5h4.6v1.7h-4.6zM3,233.3h4.6v1.7h-4.6zM804.2,233.3h4.6v1.7h-4.6zM3,246.8h4.6v1.7h-4.6zM804.2,246.8h4.6v1.7h-4.6zM3,253.6h4.6v1.7h-4.6zM804.2,253.6h4.6v1.7h-4.6zM3,260.4h4.6v1.7h-4.6zM804.2,260.4h4.6v1.7h-4.6zM3,267.2h4.6v1.7h-4.6zM804.2,267.2h4.6v1.7h-4.6zM3,280.7h4.6v1.7h-4.6zM804.2,280.7h4.6v1.7h-4.6zM3,287.5h4.6v1.7h-4.6zM804.2,287.5h4.6v1.7h-4.6zM3,294.3h4.6v1.7h-4.6zM804.2,294.3h4.6v1.7h-4.6zM3,301.1h4.6v1.7h-4.6zM804.2,301.1h4.6v1.7h-4.6zM3,314.6h4.6v1.7h-4.6zM804.2,314.6h4.6v1.7h-4.6zM3,321.4h4.6v1.7h-4.6zM804.2,321.4h4.6v1.7h-4.6zM3,328.2h4.6v1.7h-4.6zM804.2,328.2h4.6v1.7h-4.6zM3,335.0h4.6v1.7h-4.6zM804.2,335.0h4.6v1.7h-4.6z" fill="#827b61"/>
<path d="M3,37.0h9.5v1.1h-9.5zM799.3,37.0h9.5v1.1h-9.5zM3,70.8h9.5v1.1h-9.5zM799.3,70.8h9.5v1.1h-9.5zM3,104.8h9.5v1.1h-9.5zM799.3,104.8h9.5v1.1h-9.5zM3,138.6h9.5v1.1h-9.5zM799.3,138.6h9.5v1.1h-9.5zM3,172.5h9.5v1.1h-9.5zM799.3,172.5h9.5v1.1h-9.5zM3,206.4h9.5v1.1h-9.5zM799.3,206.4h9.5v1.1h-9.5zM3,240.3h9.5v1.1h-9.5zM799.3,240.3h9.5v1.1h-9.5zM3,274.2h9.5v1.1h-9.5zM799.3,274.2h9.5v1.1h-9.5zM3,308.2h9.5v1.1h-9.5zM799.3,308.2h9.5v1.1h-9.5z" fill="#ffffdc"/>
</g>
<g shape-rendering="crispEdges">
<rect x="324.1" y="4" width="1.8" height="339" fill="#905c00"/>
<rect x="2" y="200" width="807" height="2" fill="#b07200"/>
<rect x="2" y="161" width="805" height="1" fill="#6a4400"/>
<rect x="2" y="162" width="805" height="1" fill="#7a4e00"/>
<path d="M3,162h2v1h-2zM6,162h2v1h-2zM9,162h2v1h-2zM12,162h2v1h-2zM15,162h2v1h-2zM18,162h2v1h-2zM21,162h2v1h-2zM24,162h2v1h-2zM27,162h2v1h-2zM30,162h2v1h-2zM33,162h2v1h-2zM36,162h2v1h-2zM39,162h2v1h-2zM42,162h2v1h-2zM45,162h2v1h-2zM48,162h2v1h-2zM51,162h2v1h-2zM54,162h2v1h-2zM57,162h2v1h-2zM60,162h2v1h-2zM63,162h2v1h-2zM66,162h2v1h-2zM69,162h2v1h-2zM72,162h2v1h-2zM75,162h2v1h-2zM78,162h2v1h-2zM81,162h2v1h-2zM84,162h2v1h-2zM87,162h2v1h-2zM90,162h2v1h-2zM93,162h2v1h-2zM96,162h2v1h-2zM99,162h2v1h-2zM102,162h2v1h-2zM105,162h2v1h-2zM108,162h2v1h-2zM111,162h2v1h-2zM114,162h2v1h-2zM117,162h2v1h-2zM120,162h2v1h-2zM123,162h2v1h-2zM126,162h2v1h-2zM129,162h2v1h-2zM132,162h2v1h-2zM135,162h2v1h-2zM138,162h2v1h-2zM141,162h2v1h-2zM144,162h2v1h-2zM147,162h2v1h-2zM150,162h2v1h-2zM153,162h2v1h-2zM156,162h2v1h-2zM159,162h2v1h-2zM162,162h2v1h-2zM165,162h2v1h-2zM168,162h2v1h-2zM171,162h2v1h-2zM174,162h2v1h-2zM177,162h2v1h-2zM180,162h2v1h-2zM183,162h2v1h-2zM186,162h2v1h-2zM189,162h2v1h-2zM192,162h2v1h-2zM195,162h2v1h-2zM198,162h2v1h-2zM201,162h2v1h-2zM204,162h2v1h-2zM207,162h2v1h-2zM210,162h2v1h-2zM213,162h2v1h-2zM216,162h2v1h-2zM219,162h2v1h-2zM222,162h2v1h-2zM225,162h2v1h-2zM228,162h2v1h-2zM231,162h2v1h-2zM234,162h2v1h-2zM237,162h2v1h-2zM240,162h2v1h-2zM243,162h2v1h-2zM246,162h2v1h-2zM249,162h2v1h-2zM252,162h2v1h-2zM255,162h2v1h-2zM258,162h2v1h-2zM261,162h2v1h-2zM264,162h2v1h-2zM267,162h2v1h-2zM270,162h2v1h-2zM273,162h2v1h-2zM276,162h2v1h-2zM279,162h2v1h-2zM282,162h2v1h-2zM285,162h2v1h-2zM288,162h2v1h-2zM291,162h2v1h-2zM294,162h2v1h-2zM297,162h2v1h-2zM300,162h2v1h-2zM303,162h2v1h-2zM306,162h2v1h-2zM309,162h2v1h-2zM312,162h2v1h-2zM315,162h2v1h-2zM318,162h2v1h-2zM321,162h2v1h-2zM324,162h2v1h-2zM327,162h2v1h-2zM330,162h2v1h-2zM333,162h2v1h-2zM336,162h2v1h-2zM339,162h2v1h-2zM342,162h2v1h-2zM345,162h2v1h-2zM348,162h2v1h-2zM351,162h2v1h-2zM354,162h2v1h-2zM357,162h2v1h-2zM360,162h2v1h-2zM363,162h2v1h-2zM366,162h2v1h-2zM369,162h2v1h-2zM372,162h2v1h-2zM375,162h2v1h-2zM378,162h2v1h-2zM381,162h2v1h-2zM384,162h2v1h-2zM387,162h2v1h-2zM390,162h2v1h-2zM393,162h2v1h-2zM396,162h2v1h-2zM399,162h2v1h-2zM402,162h2v1h-2zM405,162h2v1h-2zM408,162h2v1h-2zM411,162h2v1h-2zM414,162h2v1h-2zM417,162h2v1h-2zM420,162h2v1h-2zM423,162h2v1h-2zM426,162h2v1h-2zM429,162h2v1h-2zM432,162h2v1h-2zM435,162h2v1h-2zM438,162h2v1h-2zM441,162h2v1h-2zM444,162h2v1h-2zM447,162h2v1h-2zM450,162h2v1h-2zM453,162h2v1h-2zM456,162h2v1h-2zM459,162h2v1h-2zM462,162h2v1h-2zM465,162h2v1h-2zM468,162h2v1h-2zM471,162h2v1h-2zM474,162h2v1h-2zM477,162h2v1h-2zM480,162h2v1h-2zM483,162h2v1h-2zM486,162h2v1h-2zM489,162h2v1h-2zM492,162h2v1h-2zM495,162h2v1h-2zM498,162h2v1h-2zM501,162h2v1h-2zM504,162h2v1h-2zM507,162h2v1h-2zM510,162h2v1h-2zM513,162h2v1h-2zM516,162h2v1h-2zM519,162h2v1h-2zM522,162h2v1h-2zM525,162h2v1h-2zM528,162h2v1h-2zM531,162h2v1h-2zM534,162h2v1h-2zM537,162h2v1h-2zM540,162h2v1h-2zM543,162h2v1h-2zM546,162h2v1h-2zM549,162h2v1h-2zM552,162h2v1h-2zM555,162h2v1h-2zM558,162h2v1h-2zM561,162h2v1h-2zM564,162h2v1h-2zM567,162h2v1h-2zM570,162h2v1h-2zM573,162h2v1h-2zM576,162h2v1h-2zM579,162h2v1h-2zM582,162h2v1h-2zM585,162h2v1h-2zM588,162h2v1h-2zM591,162h2v1h-2zM594,162h2v1h-2zM597,162h2v1h-2zM600,162h2v1h-2zM603,162h2v1h-2zM606,162h2v1h-2zM609,162h2v1h-2zM612,162h2v1h-2zM615,162h2v1h-2zM618,162h2v1h-2zM621,162h2v1h-2zM624,162h2v1h-2zM627,162h2v1h-2zM630,162h2v1h-2zM633,162h2v1h-2zM636,162h2v1h-2zM639,162h2v1h-2zM642,162h2v1h-2zM645,162h2v1h-2zM648,162h2v1h-2zM651,162h2v1h-2zM654,162h2v1h-2zM657,162h2v1h-2zM660,162h2v1h-2zM663,162h2v1h-2zM666,162h2v1h-2zM669,162h2v1h-2zM672,162h2v1h-2zM675,162h2v1h-2zM678,162h2v1h-2zM681,162h2v1h-2zM684,162h2v1h-2zM687,162h2v1h-2zM690,162h2v1h-2zM693,162h2v1h-2zM696,162h2v1h-2zM699,162h2v1h-2zM702,162h2v1h-2zM705,162h2v1h-2zM708,162h2v1h-2zM711,162h2v1h-2zM714,162h2v1h-2zM717,162h2v1h-2zM720,162h2v1h-2zM723,162h2v1h-2zM726,162h2v1h-2zM729,162h2v1h-2zM732,162h2v1h-2zM735,162h2v1h-2zM738,162h2v1h-2zM741,162h2v1h-2zM744,162h2v1h-2zM747,162h2v1h-2zM750,162h2v1h-2zM753,162h2v1h-2zM756,162h2v1h-2zM759,162h2v1h-2zM762,162h2v1h-2zM765,162h2v1h-2zM768,162h2v1h-2zM771,162h2v1h-2zM774,162h2v1h-2zM777,162h2v1h-2zM780,162h2v1h-2zM783,162h2v1h-2zM786,162h2v1h-2zM789,162h2v1h-2zM792,162h2v1h-2zM795,162h2v1h-2zM798,162h2v1h-2zM801,162h2v1h-2zM804,162h2v1h-2z" fill="#f0a200"/>
</g><g>
<rect x="2" y="219.2" width="807" height="1.8" fill="#005252"/>
<path d="M2.50,218.8h1.3v1.4h-1.3zM5.16,218.8h1.3v1.4h-1.3zM7.82,218.8h1.3v1.4h-1.3zM10.48,218.8h1.3v1.4h-1.3zM13.14,218.8h1.3v1.4h-1.3zM15.80,218.8h1.3v1.4h-1.3zM18.46,218.8h1.3v1.4h-1.3zM21.12,218.8h1.3v1.4h-1.3zM23.78,218.8h1.3v1.4h-1.3zM26.44,218.8h1.3v1.4h-1.3zM29.10,218.8h1.3v1.4h-1.3zM31.76,218.8h1.3v1.4h-1.3zM34.42,218.8h1.3v1.4h-1.3zM37.08,218.8h1.3v1.4h-1.3zM39.74,218.8h1.3v1.4h-1.3zM42.40,218.8h1.3v1.4h-1.3zM45.06,218.8h1.3v1.4h-1.3zM47.72,218.8h1.3v1.4h-1.3zM50.38,218.8h1.3v1.4h-1.3zM53.04,218.8h1.3v1.4h-1.3zM55.70,218.8h1.3v1.4h-1.3zM58.36,218.8h1.3v1.4h-1.3zM61.02,218.8h1.3v1.4h-1.3zM63.68,218.8h1.3v1.4h-1.3zM66.34,218.8h1.3v1.4h-1.3zM69.00,218.8h1.3v1.4h-1.3zM71.66,218.8h1.3v1.4h-1.3zM74.32,218.8h1.3v1.4h-1.3zM76.98,218.8h1.3v1.4h-1.3zM79.64,218.8h1.3v1.4h-1.3zM82.30,218.8h1.3v1.4h-1.3zM84.96,218.8h1.3v1.4h-1.3zM87.62,218.8h1.3v1.4h-1.3zM90.28,218.8h1.3v1.4h-1.3zM92.94,218.8h1.3v1.4h-1.3zM95.60,218.8h1.3v1.4h-1.3zM98.26,218.8h1.3v1.4h-1.3zM100.92,218.8h1.3v1.4h-1.3zM103.58,218.8h1.3v1.4h-1.3zM106.24,218.8h1.3v1.4h-1.3zM108.90,218.8h1.3v1.4h-1.3zM111.56,218.8h1.3v1.4h-1.3zM114.22,218.8h1.3v1.4h-1.3zM116.88,218.8h1.3v1.4h-1.3zM119.54,218.8h1.3v1.4h-1.3zM122.20,218.8h1.3v1.4h-1.3zM124.86,218.8h1.3v1.4h-1.3zM127.52,218.8h1.3v1.4h-1.3zM130.18,218.8h1.3v1.4h-1.3zM132.84,218.8h1.3v1.4h-1.3zM135.50,218.8h1.3v1.4h-1.3zM138.16,218.8h1.3v1.4h-1.3zM140.82,218.8h1.3v1.4h-1.3zM143.48,218.8h1.3v1.4h-1.3zM146.14,218.8h1.3v1.4h-1.3zM148.80,218.8h1.3v1.4h-1.3zM151.46,218.8h1.3v1.4h-1.3zM154.12,218.8h1.3v1.4h-1.3zM156.78,218.8h1.3v1.4h-1.3zM159.44,218.8h1.3v1.4h-1.3zM162.10,218.8h1.3v1.4h-1.3zM164.76,218.8h1.3v1.4h-1.3zM167.42,218.8h1.3v1.4h-1.3zM170.08,218.8h1.3v1.4h-1.3zM172.74,218.8h1.3v1.4h-1.3zM175.40,218.8h1.3v1.4h-1.3zM178.06,218.8h1.3v1.4h-1.3zM180.72,218.8h1.3v1.4h-1.3zM183.38,218.8h1.3v1.4h-1.3zM186.04,218.8h1.3v1.4h-1.3zM188.70,218.8h1.3v1.4h-1.3zM191.36,218.8h1.3v1.4h-1.3zM194.02,218.8h1.3v1.4h-1.3zM196.68,218.8h1.3v1.4h-1.3zM199.34,218.8h1.3v1.4h-1.3zM202.00,218.8h1.3v1.4h-1.3zM204.66,218.8h1.3v1.4h-1.3zM207.32,218.8h1.3v1.4h-1.3zM209.98,218.8h1.3v1.4h-1.3zM212.64,218.8h1.3v1.4h-1.3zM215.30,218.8h1.3v1.4h-1.3zM217.96,218.8h1.3v1.4h-1.3zM220.62,218.8h1.3v1.4h-1.3zM223.28,218.8h1.3v1.4h-1.3zM225.94,218.8h1.3v1.4h-1.3zM228.60,218.8h1.3v1.4h-1.3zM231.26,218.8h1.3v1.4h-1.3zM233.92,218.8h1.3v1.4h-1.3zM236.58,218.8h1.3v1.4h-1.3zM239.24,218.8h1.3v1.4h-1.3zM241.90,218.8h1.3v1.4h-1.3zM244.56,218.8h1.3v1.4h-1.3zM247.22,218.8h1.3v1.4h-1.3zM249.88,218.8h1.3v1.4h-1.3zM252.54,218.8h1.3v1.4h-1.3zM255.20,218.8h1.3v1.4h-1.3zM257.86,218.8h1.3v1.4h-1.3zM260.52,218.8h1.3v1.4h-1.3zM263.18,218.8h1.3v1.4h-1.3zM265.84,218.8h1.3v1.4h-1.3zM268.50,218.8h1.3v1.4h-1.3zM271.16,218.8h1.3v1.4h-1.3zM273.82,218.8h1.3v1.4h-1.3zM276.48,218.8h1.3v1.4h-1.3zM279.14,218.8h1.3v1.4h-1.3zM281.80,218.8h1.3v1.4h-1.3zM284.46,218.8h1.3v1.4h-1.3zM287.12,218.8h1.3v1.4h-1.3zM289.78,218.8h1.3v1.4h-1.3zM292.44,218.8h1.3v1.4h-1.3zM295.10,218.8h1.3v1.4h-1.3zM297.76,218.8h1.3v1.4h-1.3zM300.42,218.8h1.3v1.4h-1.3zM303.08,218.8h1.3v1.4h-1.3zM305.74,218.8h1.3v1.4h-1.3zM308.40,218.8h1.3v1.4h-1.3zM311.06,218.8h1.3v1.4h-1.3zM313.72,218.8h1.3v1.4h-1.3zM316.38,218.8h1.3v1.4h-1.3zM319.04,218.8h1.3v1.4h-1.3zM321.70,218.8h1.3v1.4h-1.3zM324.36,218.8h1.3v1.4h-1.3zM327.02,218.8h1.3v1.4h-1.3zM329.68,218.8h1.3v1.4h-1.3zM332.34,218.8h1.3v1.4h-1.3zM335.00,218.8h1.3v1.4h-1.3zM337.66,218.8h1.3v1.4h-1.3zM340.32,218.8h1.3v1.4h-1.3zM342.98,218.8h1.3v1.4h-1.3zM345.64,218.8h1.3v1.4h-1.3zM348.30,218.8h1.3v1.4h-1.3zM350.96,218.8h1.3v1.4h-1.3zM353.62,218.8h1.3v1.4h-1.3zM356.28,218.8h1.3v1.4h-1.3zM358.94,218.8h1.3v1.4h-1.3zM361.60,218.8h1.3v1.4h-1.3zM364.26,218.8h1.3v1.4h-1.3zM366.92,218.8h1.3v1.4h-1.3zM369.58,218.8h1.3v1.4h-1.3zM372.24,218.8h1.3v1.4h-1.3zM374.90,218.8h1.3v1.4h-1.3zM377.56,218.8h1.3v1.4h-1.3zM380.22,218.8h1.3v1.4h-1.3zM382.88,218.8h1.3v1.4h-1.3zM385.54,218.8h1.3v1.4h-1.3zM388.20,218.8h1.3v1.4h-1.3zM390.86,218.8h1.3v1.4h-1.3zM393.52,218.8h1.3v1.4h-1.3zM396.18,218.8h1.3v1.4h-1.3zM398.84,218.8h1.3v1.4h-1.3zM401.50,218.8h1.3v1.4h-1.3zM404.16,218.8h1.3v1.4h-1.3zM406.82,218.8h1.3v1.4h-1.3zM409.48,218.8h1.3v1.4h-1.3zM412.14,218.8h1.3v1.4h-1.3zM414.80,218.8h1.3v1.4h-1.3zM417.46,218.8h1.3v1.4h-1.3zM420.12,218.8h1.3v1.4h-1.3zM422.78,218.8h1.3v1.4h-1.3zM425.44,218.8h1.3v1.4h-1.3zM428.10,218.8h1.3v1.4h-1.3zM430.76,218.8h1.3v1.4h-1.3zM433.42,218.8h1.3v1.4h-1.3zM436.08,218.8h1.3v1.4h-1.3zM438.74,218.8h1.3v1.4h-1.3zM441.40,218.8h1.3v1.4h-1.3zM444.06,218.8h1.3v1.4h-1.3zM446.72,218.8h1.3v1.4h-1.3zM449.38,218.8h1.3v1.4h-1.3zM452.04,218.8h1.3v1.4h-1.3zM454.70,218.8h1.3v1.4h-1.3zM457.36,218.8h1.3v1.4h-1.3zM460.02,218.8h1.3v1.4h-1.3zM462.68,218.8h1.3v1.4h-1.3zM465.34,218.8h1.3v1.4h-1.3zM468.00,218.8h1.3v1.4h-1.3zM470.66,218.8h1.3v1.4h-1.3zM473.32,218.8h1.3v1.4h-1.3zM475.98,218.8h1.3v1.4h-1.3zM478.64,218.8h1.3v1.4h-1.3zM481.30,218.8h1.3v1.4h-1.3zM483.96,218.8h1.3v1.4h-1.3zM486.62,218.8h1.3v1.4h-1.3zM489.28,218.8h1.3v1.4h-1.3zM491.94,218.8h1.3v1.4h-1.3zM494.60,218.8h1.3v1.4h-1.3zM497.26,218.8h1.3v1.4h-1.3zM499.92,218.8h1.3v1.4h-1.3zM502.58,218.8h1.3v1.4h-1.3zM505.24,218.8h1.3v1.4h-1.3zM507.90,218.8h1.3v1.4h-1.3zM510.56,218.8h1.3v1.4h-1.3zM513.22,218.8h1.3v1.4h-1.3zM515.88,218.8h1.3v1.4h-1.3zM518.54,218.8h1.3v1.4h-1.3zM521.20,218.8h1.3v1.4h-1.3zM523.86,218.8h1.3v1.4h-1.3zM526.52,218.8h1.3v1.4h-1.3zM529.18,218.8h1.3v1.4h-1.3zM531.84,218.8h1.3v1.4h-1.3zM534.50,218.8h1.3v1.4h-1.3zM537.16,218.8h1.3v1.4h-1.3zM539.82,218.8h1.3v1.4h-1.3zM542.48,218.8h1.3v1.4h-1.3zM545.14,218.8h1.3v1.4h-1.3zM547.80,218.8h1.3v1.4h-1.3zM550.46,218.8h1.3v1.4h-1.3zM553.12,218.8h1.3v1.4h-1.3zM555.78,218.8h1.3v1.4h-1.3zM558.44,218.8h1.3v1.4h-1.3zM561.10,218.8h1.3v1.4h-1.3zM563.76,218.8h1.3v1.4h-1.3zM566.42,218.8h1.3v1.4h-1.3zM569.08,218.8h1.3v1.4h-1.3zM571.74,218.8h1.3v1.4h-1.3zM574.40,218.8h1.3v1.4h-1.3zM577.06,218.8h1.3v1.4h-1.3zM579.72,218.8h1.3v1.4h-1.3zM582.38,218.8h1.3v1.4h-1.3zM585.04,218.8h1.3v1.4h-1.3zM587.70,218.8h1.3v1.4h-1.3zM590.36,218.8h1.3v1.4h-1.3zM593.02,218.8h1.3v1.4h-1.3zM595.68,218.8h1.3v1.4h-1.3zM598.34,218.8h1.3v1.4h-1.3zM601.00,218.8h1.3v1.4h-1.3zM603.66,218.8h1.3v1.4h-1.3zM606.32,218.8h1.3v1.4h-1.3zM608.98,218.8h1.3v1.4h-1.3zM611.64,218.8h1.3v1.4h-1.3zM614.30,218.8h1.3v1.4h-1.3zM616.96,218.8h1.3v1.4h-1.3zM619.62,218.8h1.3v1.4h-1.3zM622.28,218.8h1.3v1.4h-1.3zM624.94,218.8h1.3v1.4h-1.3zM627.60,218.8h1.3v1.4h-1.3zM630.26,218.8h1.3v1.4h-1.3zM632.92,218.8h1.3v1.4h-1.3zM635.58,218.8h1.3v1.4h-1.3zM638.24,218.8h1.3v1.4h-1.3zM640.90,218.8h1.3v1.4h-1.3zM643.56,218.8h1.3v1.4h-1.3zM646.22,218.8h1.3v1.4h-1.3zM648.88,218.8h1.3v1.4h-1.3zM651.54,218.8h1.3v1.4h-1.3zM654.20,218.8h1.3v1.4h-1.3zM656.86,218.8h1.3v1.4h-1.3zM659.52,218.8h1.3v1.4h-1.3zM662.18,218.8h1.3v1.4h-1.3zM664.84,218.8h1.3v1.4h-1.3zM667.50,218.8h1.3v1.4h-1.3zM670.16,218.8h1.3v1.4h-1.3zM672.82,218.8h1.3v1.4h-1.3zM675.48,218.8h1.3v1.4h-1.3zM678.14,218.8h1.3v1.4h-1.3zM680.80,218.8h1.3v1.4h-1.3zM683.46,218.8h1.3v1.4h-1.3zM686.12,218.8h1.3v1.4h-1.3zM688.78,218.8h1.3v1.4h-1.3zM691.44,218.8h1.3v1.4h-1.3zM694.10,218.8h1.3v1.4h-1.3zM696.76,218.8h1.3v1.4h-1.3zM699.42,218.8h1.3v1.4h-1.3zM702.08,218.8h1.3v1.4h-1.3zM704.74,218.8h1.3v1.4h-1.3zM707.40,218.8h1.3v1.4h-1.3zM710.06,218.8h1.3v1.4h-1.3zM712.72,218.8h1.3v1.4h-1.3zM715.38,218.8h1.3v1.4h-1.3zM718.04,218.8h1.3v1.4h-1.3zM720.70,218.8h1.3v1.4h-1.3zM723.36,218.8h1.3v1.4h-1.3zM726.02,218.8h1.3v1.4h-1.3zM728.68,218.8h1.3v1.4h-1.3zM731.34,218.8h1.3v1.4h-1.3zM734.00,218.8h1.3v1.4h-1.3zM736.66,218.8h1.3v1.4h-1.3zM739.32,218.8h1.3v1.4h-1.3zM741.98,218.8h1.3v1.4h-1.3zM744.64,218.8h1.3v1.4h-1.3zM747.30,218.8h1.3v1.4h-1.3zM749.96,218.8h1.3v1.4h-1.3zM752.62,218.8h1.3v1.4h-1.3zM755.28,218.8h1.3v1.4h-1.3zM757.94,218.8h1.3v1.4h-1.3zM760.60,218.8h1.3v1.4h-1.3zM763.26,218.8h1.3v1.4h-1.3zM765.92,218.8h1.3v1.4h-1.3zM768.58,218.8h1.3v1.4h-1.3zM771.24,218.8h1.3v1.4h-1.3zM773.90,218.8h1.3v1.4h-1.3zM776.56,218.8h1.3v1.4h-1.3zM779.22,218.8h1.3v1.4h-1.3zM781.88,218.8h1.3v1.4h-1.3zM784.54,218.8h1.3v1.4h-1.3zM787.20,218.8h1.3v1.4h-1.3zM789.86,218.8h1.3v1.4h-1.3zM792.52,218.8h1.3v1.4h-1.3zM795.18,218.8h1.3v1.4h-1.3zM797.84,218.8h1.3v1.4h-1.3zM800.50,218.8h1.3v1.4h-1.3zM803.16,218.8h1.3v1.4h-1.3zM805.82,218.8h1.3v1.4h-1.3z" fill="#009898"/>
</g><g shape-rendering="crispEdges">
</g><g>
<path d="M350.9,4.00h1.2v1.5h-1.2zM350.9,6.67h1.2v1.5h-1.2zM350.9,9.34h1.2v1.5h-1.2zM350.9,12.01h1.2v1.5h-1.2zM350.9,14.68h1.2v1.5h-1.2zM350.9,17.35h1.2v1.5h-1.2zM350.9,20.02h1.2v1.5h-1.2zM350.9,22.69h1.2v1.5h-1.2zM350.9,25.36h1.2v1.5h-1.2zM350.9,28.03h1.2v1.5h-1.2zM350.9,30.70h1.2v1.5h-1.2zM350.9,33.37h1.2v1.5h-1.2zM350.9,36.04h1.2v1.5h-1.2zM350.9,38.71h1.2v1.5h-1.2zM350.9,41.38h1.2v1.5h-1.2zM350.9,44.05h1.2v1.5h-1.2zM350.9,46.72h1.2v1.5h-1.2zM350.9,49.39h1.2v1.5h-1.2zM350.9,52.06h1.2v1.5h-1.2zM350.9,54.73h1.2v1.5h-1.2zM350.9,57.40h1.2v1.5h-1.2zM350.9,60.07h1.2v1.5h-1.2zM350.9,62.74h1.2v1.5h-1.2zM350.9,65.41h1.2v1.5h-1.2zM350.9,68.08h1.2v1.5h-1.2zM350.9,70.75h1.2v1.5h-1.2zM350.9,73.42h1.2v1.5h-1.2zM350.9,76.09h1.2v1.5h-1.2zM350.9,78.76h1.2v1.5h-1.2zM350.9,81.43h1.2v1.5h-1.2zM350.9,84.10h1.2v1.5h-1.2zM350.9,86.77h1.2v1.5h-1.2zM350.9,89.44h1.2v1.5h-1.2zM350.9,92.11h1.2v1.5h-1.2zM350.9,94.78h1.2v1.5h-1.2zM350.9,97.45h1.2v1.5h-1.2zM350.9,100.12h1.2v1.5h-1.2zM350.9,102.79h1.2v1.5h-1.2zM350.9,105.46h1.2v1.5h-1.2zM350.9,108.13h1.2v1.5h-1.2zM350.9,110.80h1.2v1.5h-1.2zM350.9,113.47h1.2v1.5h-1.2zM350.9,116.14h1.2v1.5h-1.2zM350.9,118.81h1.2v1.5h-1.2zM350.9,121.48h1.2v1.5h-1.2zM350.9,124.15h1.2v1.5h-1.2zM350.9,126.82h1.2v1.5h-1.2zM350.9,129.49h1.2v1.5h-1.2zM350.9,132.16h1.2v1.5h-1.2zM350.9,134.83h1.2v1.5h-1.2zM350.9,137.50h1.2v1.5h-1.2zM350.9,140.17h1.2v1.5h-1.2zM350.9,142.84h1.2v1.5h-1.2zM350.9,145.51h1.2v1.5h-1.2zM350.9,148.18h1.2v1.5h-1.2zM350.9,150.85h1.2v1.5h-1.2zM350.9,153.52h1.2v1.5h-1.2zM350.9,156.19h1.2v1.5h-1.2zM350.9,158.86h1.2v1.5h-1.2zM350.9,161.53h1.2v1.5h-1.2zM350.9,164.20h1.2v1.5h-1.2zM350.9,166.87h1.2v1.5h-1.2zM350.9,169.54h1.2v1.5h-1.2zM350.9,172.21h1.2v1.5h-1.2zM350.9,174.88h1.2v1.5h-1.2zM350.9,177.55h1.2v1.5h-1.2zM350.9,180.22h1.2v1.5h-1.2zM350.9,182.89h1.2v1.5h-1.2zM350.9,185.56h1.2v1.5h-1.2zM350.9,188.23h1.2v1.5h-1.2zM350.9,190.90h1.2v1.5h-1.2zM350.9,193.57h1.2v1.5h-1.2zM350.9,196.24h1.2v1.5h-1.2zM350.9,198.91h1.2v1.5h-1.2zM350.9,201.58h1.2v1.5h-1.2zM350.9,204.25h1.2v1.5h-1.2zM350.9,206.92h1.2v1.5h-1.2zM350.9,209.59h1.2v1.5h-1.2zM350.9,212.26h1.2v1.5h-1.2zM350.9,214.93h1.2v1.5h-1.2zM350.9,217.60h1.2v1.5h-1.2zM350.9,220.27h1.2v1.5h-1.2zM350.9,222.94h1.2v1.5h-1.2zM350.9,225.61h1.2v1.5h-1.2zM350.9,228.28h1.2v1.5h-1.2zM350.9,230.95h1.2v1.5h-1.2zM350.9,233.62h1.2v1.5h-1.2zM350.9,236.29h1.2v1.5h-1.2zM350.9,238.96h1.2v1.5h-1.2zM350.9,241.63h1.2v1.5h-1.2zM350.9,244.30h1.2v1.5h-1.2zM350.9,246.97h1.2v1.5h-1.2zM350.9,249.64h1.2v1.5h-1.2zM350.9,252.31h1.2v1.5h-1.2zM350.9,254.98h1.2v1.5h-1.2zM350.9,257.65h1.2v1.5h-1.2zM350.9,260.32h1.2v1.5h-1.2zM350.9,262.99h1.2v1.5h-1.2zM350.9,265.66h1.2v1.5h-1.2zM350.9,268.33h1.2v1.5h-1.2zM350.9,271.00h1.2v1.5h-1.2zM350.9,273.67h1.2v1.5h-1.2zM350.9,276.34h1.2v1.5h-1.2zM350.9,279.01h1.2v1.5h-1.2zM350.9,281.68h1.2v1.5h-1.2zM350.9,284.35h1.2v1.5h-1.2zM350.9,287.02h1.2v1.5h-1.2zM350.9,289.69h1.2v1.5h-1.2zM350.9,292.36h1.2v1.5h-1.2zM350.9,295.03h1.2v1.5h-1.2zM350.9,297.70h1.2v1.5h-1.2zM350.9,300.37h1.2v1.5h-1.2zM350.9,303.04h1.2v1.5h-1.2zM350.9,305.71h1.2v1.5h-1.2zM350.9,308.38h1.2v1.5h-1.2zM350.9,311.05h1.2v1.5h-1.2zM350.9,313.72h1.2v1.5h-1.2zM350.9,316.39h1.2v1.5h-1.2zM350.9,319.06h1.2v1.5h-1.2zM350.9,321.73h1.2v1.5h-1.2zM350.9,324.40h1.2v1.5h-1.2zM350.9,327.07h1.2v1.5h-1.2zM350.9,329.74h1.2v1.5h-1.2zM350.9,332.41h1.2v1.5h-1.2zM350.9,335.08h1.2v1.5h-1.2zM350.9,337.75h1.2v1.5h-1.2zM350.9,340.42h1.2v1.5h-1.2z" fill="#00b0b0"/>
</g><g shape-rendering="crispEdges">
</g>
<circle cx="346" cy="11.3" r="4.4" fill="#f0c000" stroke="#8a6a00" stroke-width="0.8"/>
<text x="346" y="14.2" text-anchor="middle" style="font-size:9px;fill:#302000">a</text>
<circle cx="12" cy="212.5" r="4.4" fill="#f0c000" stroke="#8a6a00" stroke-width="0.8"/>
<text x="12.2" y="215.6" text-anchor="middle" style="font-size:9px;fill:#302000">b</text>
<path d="M369.6,3.5H378.4L374,11.9z" fill="#f48484"/>
<path d="M793,207.7L800.5,204.3V211z" fill="#ffff00"/><rect x="800" y="207" width="9" height="1.2" fill="#ffff00"/>
<path d="M554,154.2H563L558.5,160.8z" fill="none" stroke="#a06800" stroke-width="0.9"/>
<rect x="-10" y="-10" width="831" height="10.9" fill="#28287a"/>
<rect x="-10" y="0.9" width="831" height="2.9" fill="#ff9e00"/>
<rect x="-10" y="0.9" width="12.5" height="344.1" fill="#ff9e00"/>
<rect x="808.8" y="0.9" width="12.2" height="344.1" fill="#ff9e00"/>
<rect x="-10" y="342.7" width="831" height="2.3" fill="#ff9e00"/>
<circle cx="0.5" cy="308.3" r="7.4" fill="#00f0f0" stroke="#ffa000" stroke-width="1.5"/>
<path d="M8.6,303.6L16.5,308.6L8.6,313.6z" fill="#00f0f0"/>
<rect x="2.5" y="347.5" width="806.3" height="163.2" fill="#000"/>
<rect x="6.5" y="349.5" width="226.0" height="56.0" rx="5" ry="5" fill="none" stroke="#b4b4b4" stroke-width="1"/>
<rect x="13.5" y="355.2" width="26.6" height="10.8" rx="5.4" fill="url(#gb)"/>
<rect x="14.7" y="356.4" width="24.2" height="8.5" rx="4.2" fill="url(#gy)"/>
<text transform="translate(27.0 362.7) scale(1.00 1)" text-anchor="middle" style="font-size:7.6px;fill:#000;letter-spacing:0.5px">C1</text>
<rect x="13.5" y="372.2" width="26.6" height="10.8" rx="5.4" fill="url(#gb)"/>
<rect x="14.7" y="373.4" width="24.2" height="8.5" rx="4.2" fill="url(#gc)"/>
<text transform="translate(27.0 379.7) scale(1.00 1)" text-anchor="middle" style="font-size:7.6px;fill:#000;letter-spacing:0.5px">C2</text>
<rect x="13.5" y="389.0" width="26.6" height="10.8" rx="5.4" fill="url(#gb)"/>
<rect x="14.7" y="390.2" width="24.2" height="8.5" rx="4.2" fill="url(#go)"/>
<text transform="translate(27.0 396.5) scale(1.00 1)" text-anchor="middle" style="font-size:7.6px;fill:#000;letter-spacing:0.5px">M1</text>
<text transform="translate(42.9 363.4) scale(0.985 0.970)">2.0V/div</text>
<text transform="translate(42.9 380.4) scale(0.985 0.970)">1.0A/div</text>
<text transform="translate(42.9 397.4) scale(0.985 0.970)">10.0W</text>
<text transform="translate(83.5 397.4) scale(0.985 0.970)">1.0ms</text>
<text transform="translate(135.7 363.4) scale(0.985 0.970)">1MΩ</text>
<text transform="translate(135.7 380.4) scale(0.985 0.970)">50Ω</text>
<rect x="161" y="354.5" width="45" height="12" fill="#fff"/>
<text x="162.6" y="360.8" style="font-size:6.6px;font-weight:normal;fill:#000">B</text>
<text x="165.7" y="365.4" style="font-size:8.6px;font-weight:normal;fill:#000">W</text>
<text transform="translate(174.3 363.2) scale(0.93 0.97)" style="fill:#000">:500M</text>
<rect x="161" y="371.5" width="45" height="12" fill="#fff"/>
<text x="162.6" y="377.8" style="font-size:6.6px;font-weight:normal;fill:#000">B</text>
<text x="165.7" y="382.4" style="font-size:8.6px;font-weight:normal;fill:#000">W</text>
<text transform="translate(174.3 380.2) scale(0.93 0.97)" style="fill:#000">:200M</text>
<rect x="236.5" y="349.5" width="217.5" height="74.0" rx="5" ry="5" fill="none" stroke="#b4b4b4" stroke-width="1"/>
<rect x="242.3" y="356.1" width="29.0" height="11.8" rx="5.9" fill="url(#gb)"/>
<rect x="243.5" y="357.3" width="26.6" height="9.5" rx="4.8" fill="url(#go)"/>
<text transform="translate(256.9 364.1) scale(1.00 1)" text-anchor="middle" style="font-size:7.2px;fill:#080808;letter-spacing:0.2px">V1</text>
<rect x="347.3" y="356.1" width="28.8" height="11.8" rx="5.9" fill="url(#gb)"/>
<rect x="348.5" y="357.3" width="26.4" height="9.5" rx="4.8" fill="url(#go)"/>
<text transform="translate(361.8 364.1) scale(1.00 1)" text-anchor="middle" style="font-size:7.2px;fill:#080808;letter-spacing:0.2px">t1</text>
<text transform="translate(274.7 365.1) scale(0.985 0.970)">31.738W</text>
<text transform="translate(379.9 365.1) scale(0.985 0.970)">-610µs</text>
<rect x="242.3" y="373.1" width="29.0" height="11.8" rx="5.9" fill="url(#gb)"/>
<rect x="243.5" y="374.3" width="26.6" height="9.5" rx="4.8" fill="url(#gc)"/>
<text transform="translate(256.9 381.1) scale(1.00 1)" text-anchor="middle" style="font-size:7.2px;fill:#080808;letter-spacing:0.2px">V2</text>
<rect x="347.3" y="373.1" width="28.8" height="11.8" rx="5.9" fill="url(#gb)"/>
<rect x="348.5" y="374.3" width="26.4" height="9.5" rx="4.8" fill="url(#gc)"/>
<text transform="translate(361.8 381.1) scale(1.00 1)" text-anchor="middle" style="font-size:7.2px;fill:#080808;letter-spacing:0.2px">t2</text>
<text transform="translate(274.7 382.1) scale(0.985 0.970)">2.613A</text>
<text transform="translate(379.9 382.1) scale(0.985 0.970)">-280µs</text>
<rect x="242.3" y="390.1" width="29.0" height="11.8" rx="5.9" fill="url(#gb)"/>
<rect x="243.5" y="391.3" width="26.6" height="9.5" rx="4.8" fill="url(#gg)"/>
<text transform="translate(256.9 398.1) scale(1.00 1)" text-anchor="middle" style="font-size:7.2px;fill:#080808;letter-spacing:0.2px">ΔV</text>
<rect x="347.3" y="390.1" width="28.8" height="11.8" rx="5.9" fill="url(#gb)"/>
<rect x="348.5" y="391.3" width="26.4" height="9.5" rx="4.8" fill="url(#gg)"/>
<text transform="translate(361.8 398.1) scale(1.00 1)" text-anchor="middle" style="font-size:7.2px;fill:#080808;letter-spacing:0.2px">Δt</text>
<text transform="translate(274.9 399.1) scale(0.985 0.970)">-29.125?</text>
<text transform="translate(379.5 399.1) scale(0.985 0.970)">330µs</text>
<rect x="242.3" y="407.1" width="29.0" height="11.8" rx="5.9" fill="url(#gb)"/>
<rect x="243.5" y="408.3" width="26.6" height="9.5" rx="4.8" fill="url(#gg)"/>
<text transform="translate(256.9 415.1) scale(1.00 1)" text-anchor="middle" style="font-size:7.2px;fill:#080808;letter-spacing:0.2px">ΔV/Δt</text>
<rect x="347.3" y="407.1" width="28.8" height="11.8" rx="5.9" fill="url(#gb)"/>
<rect x="348.5" y="408.3" width="26.4" height="9.5" rx="4.8" fill="url(#gg)"/>
<text transform="translate(361.8 415.1) scale(1.00 1)" text-anchor="middle" style="font-size:7.2px;fill:#080808;letter-spacing:0.2px">1/Δt</text>
<text transform="translate(274.9 416.1) scale(0.985 0.970)">-88.256k?/s</text>
<text transform="translate(379.5 416.1) scale(0.985 0.970)">3.03kHz</text>
<g shape-rendering="crispEdges" fill="none" stroke="#c8c8c8" stroke-width="1">
<rect x="273.5" y="354.5" width="68.0" height="68"/>
<path d="M273.5,371.5H341.5"/>
<path d="M273.5,388.5H341.5"/>
<path d="M273.5,405.5H341.5"/>
<rect x="378.5" y="354.5" width="68.0" height="68"/>
<path d="M378.5,371.5H446.5"/>
<path d="M378.5,388.5H446.5"/>
<path d="M378.5,405.5H446.5"/>
</g>
<rect x="466.5" y="349.5" width="149.0" height="19.0" rx="5" ry="5" fill="none" stroke="#b4b4b4" stroke-width="1"/>
<rect x="470.5" y="355.2" width="12.6" height="11.4" fill="#dcdcdc" stroke="#f09000" stroke-width="1"/>
<text x="471.8" y="364.3" style="fill:#000">A</text>
<text x="479" y="361.5" style="fill:#000;font-size:7px">'</text>
<rect x="485.3" y="355.4" width="26.2" height="10.8" rx="5.4" fill="url(#gb)"/>
<rect x="486.5" y="356.6" width="23.8" height="8.5" rx="4.2" fill="url(#gy)"/>
<text transform="translate(498.6 362.9) scale(1.00 1)" text-anchor="middle" style="font-size:7.6px;fill:#000;letter-spacing:0.5px">C1</text>
<path d="M514,365.3H517.5L521.5,356.3H525" fill="none" stroke="#fff" stroke-width="1.2"/>
<text transform="translate(527.3 363.6) scale(0.985 0.970)">5.96V</text>
<rect x="619.5" y="349.5" width="185.5" height="74.0" rx="5" ry="5" fill="none" stroke="#b4b4b4" stroke-width="1"/>
<text transform="translate(625.5 363.3) scale(0.985 0.970)">1.0ms/div</text>
<text transform="translate(678.1 363.3) scale(0.985 0.970)">1.0GS/s</text>
<text transform="translate(746.5 363.3) scale(0.985 0.970)">1.0ns/pt</text>
<text transform="translate(625.5 380.2) scale(0.985 0.970)" style="fill:#ff0000">Stopped</text>
<text transform="translate(684.3 380.2) scale(0.985 0.970)">Single Seq</text>
<text transform="translate(625.5 397.0) scale(0.985 0.970)">1 acqs</text>
<text transform="translate(738.1 397.0) scale(0.985 0.970)">RL:10.0M</text>
<text transform="translate(625.5 413.8) scale(0.985 0.970)">Auto</text>
<text transform="translate(659.1 413.8) scale(0.985 0.970)">January 01, 2006</text>
<text transform="translate(759.7 413.8) scale(0.985 0.970)" style="fill:#ffa000">21:36:24</text>
<rect x="6.5" y="431.5" width="456.0" height="69.0" rx="5" ry="5" fill="none" stroke="#b4b4b4" stroke-width="1"/>
<rect x="148.5" y="453.5" width="64" height="45" fill="#262626"/>
<rect x="269.5" y="453.5" width="56" height="45" fill="#262626"/>
<g shape-rendering="crispEdges" fill="none" stroke="#c8c8c8" stroke-width="1">
<rect x="91.5" y="453.5" width="368" height="45"/>
<path d="M148.5,453.5V498.5"/>
<path d="M212.5,453.5V498.5"/>
<path d="M269.5,453.5V498.5"/>
<path d="M325.5,453.5V498.5"/>
<path d="M382.5,453.5V498.5"/>
<path d="M430.5,453.5V498.5"/>
<path d="M91.5,468.5H459.5"/>
<path d="M91.5,483.5H459.5"/>
</g>
<text transform="translate(106.0 446.8) scale(0.985 0.970)">Value</text>
<text transform="translate(167.1 446.8) scale(0.985 0.970)">Mean</text>
<text transform="translate(231.8 446.8) scale(0.985 0.970)">Min</text>
<text transform="translate(287.1 446.8) scale(0.985 0.970)">Max</text>
<text transform="translate(337.8 446.8) scale(0.985 0.970)">St Dev</text>
<text transform="translate(391.2 446.8) scale(0.985 0.970)">Count</text>
<text transform="translate(435.2 446.8) scale(0.985 0.970)">Info</text>
<rect x="12.9" y="454.0" width="26.8" height="10.8" rx="5.4" fill="url(#gb)"/>
<rect x="14.1" y="455.2" width="24.4" height="8.5" rx="4.2" fill="url(#gy)"/>
<text transform="translate(26.5 461.5) scale(1.00 1)" text-anchor="middle" style="font-size:7.6px;fill:#000;letter-spacing:0.5px">C1</text>
<text transform="translate(44.5 463.1) scale(0.985 0.970)">Max</text>
<text transform="translate(92.6 463.1) scale(0.985 0.970)">12.4V</text>
<text transform="translate(149.6 463.1) scale(0.985 0.970)">12.4</text>
<text transform="translate(213.6 463.1) scale(0.985 0.970)">12.4</text>
<text transform="translate(270.6 463.1) scale(0.985 0.970)">12.4</text>
<text transform="translate(326.6 463.1) scale(0.985 0.970)">0.0</text>
<text transform="translate(383.6 463.1) scale(0.985 0.970)">1.0</text>
<rect x="12.9" y="469.2" width="26.8" height="10.8" rx="5.4" fill="url(#gb)"/>
<rect x="14.1" y="470.4" width="24.4" height="8.5" rx="4.2" fill="url(#gc)"/>
<text transform="translate(26.5 476.7) scale(1.00 1)" text-anchor="middle" style="font-size:7.6px;fill:#000;letter-spacing:0.5px">C2</text>
<text transform="translate(44.5 478.3) scale(0.985 0.970)">Max</text>
<text x="64.3" y="477.0" style="font-size:7.5px">*</text>
<text transform="translate(92.6 478.3) scale(0.985 0.970)">4.32A</text>
<text transform="translate(149.6 478.3) scale(0.985 0.970)">4.32</text>
<text transform="translate(213.6 478.3) scale(0.985 0.970)">4.32</text>
<text transform="translate(270.6 478.3) scale(0.985 0.970)">4.32</text>
<text transform="translate(326.6 478.3) scale(0.985 0.970)">0.0</text>
<text transform="translate(383.6 478.3) scale(0.985 0.970)">1.0</text>
<rect x="12.9" y="484.4" width="26.8" height="10.8" rx="5.4" fill="url(#gb)"/>
<rect x="14.1" y="485.6" width="24.4" height="8.5" rx="4.2" fill="url(#go)"/>
<text transform="translate(26.5 491.9) scale(1.00 1)" text-anchor="middle" style="font-size:7.6px;fill:#000;letter-spacing:0.5px">M1</text>
<text transform="translate(44.5 493.5) scale(0.985 0.970)">Max</text>
<text transform="translate(92.6 493.5) scale(0.985 0.970)">51.84W</text>
<text transform="translate(149.6 493.5) scale(0.985 0.970)">51.840004</text>
<text transform="translate(213.6 493.5) scale(0.985 0.970)">51.84</text>
<text transform="translate(270.6 493.5) scale(0.985 0.970)">51.84</text>
<text transform="translate(326.6 493.5) scale(0.985 0.970)">0.0</text>
<text transform="translate(383.6 493.5) scale(0.985 0.970)">2.0</text>
</g></svg></body></html>
